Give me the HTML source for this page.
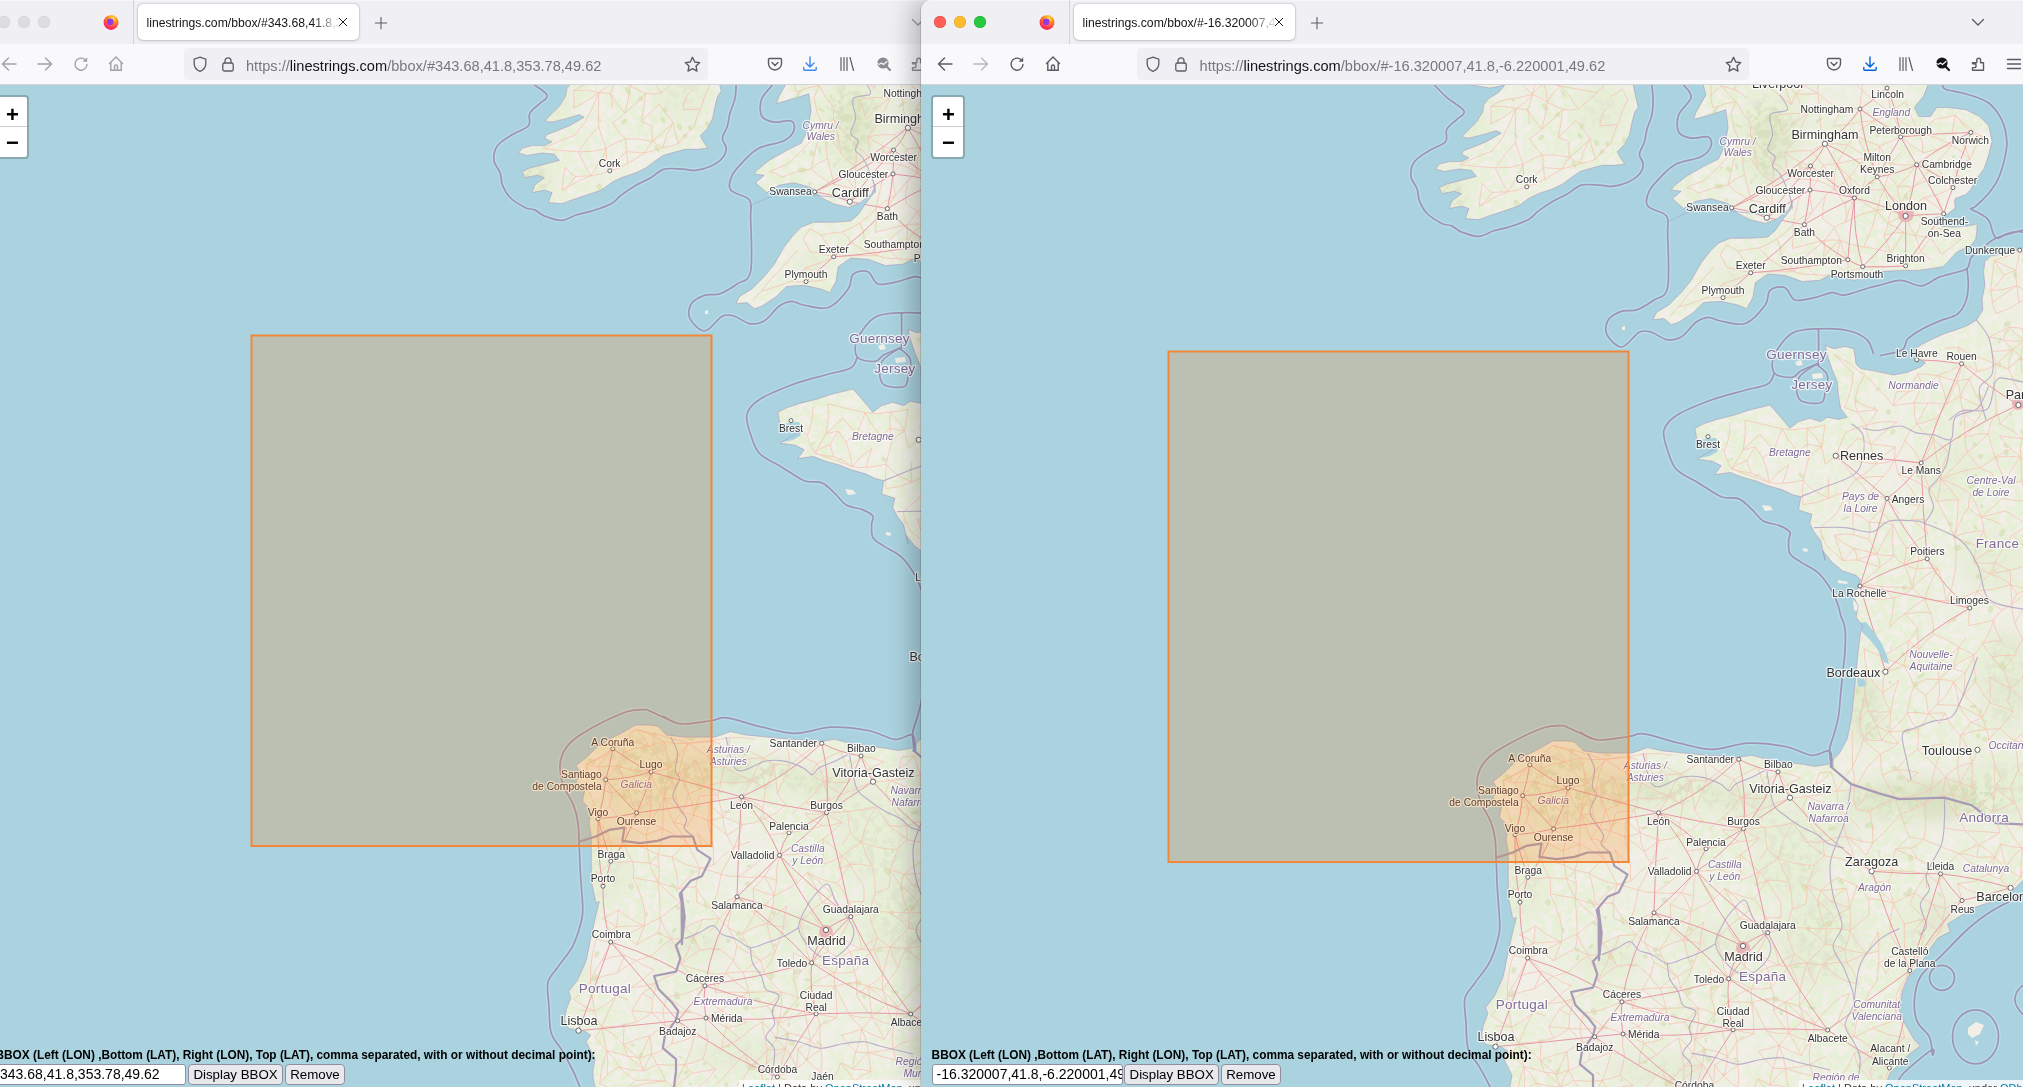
<!DOCTYPE html>
<html><head><meta charset="utf-8">
<style>
*{margin:0;padding:0;box-sizing:border-box}
html,body{width:2023px;height:1087px;overflow:hidden;background:#aad3df;font-family:"Liberation Sans",sans-serif}
.abs{position:absolute}
#defs{position:absolute;width:0;height:0}
.win{position:absolute;top:0;height:1087px;overflow:hidden}
.tabs{position:absolute;left:0;top:0;right:0;height:44px;background:#f0f0f4;border-top:1px solid #f7f7f9}
.tool{position:absolute;left:0;top:44px;right:0;height:41px;background:#f9f9fb;border-bottom:1px solid #d4d4d8}
.tab{position:absolute;top:4px;height:36px;background:#fff;border-radius:5px;box-shadow:0 0 2px rgba(0,0,0,.35),0 1px 3px rgba(0,0,0,.1)}
.tabt{position:absolute;left:8.5px;top:12.2px;font-size:12.2px;color:#15141a;white-space:nowrap;overflow:hidden;width:192px;
 -webkit-mask-image:linear-gradient(90deg,#000 86%,rgba(0,0,0,.15) 99%)}
.url{position:absolute;top:48px;height:32px;background:#f0f0f4;border-radius:4px}
.urlt{position:absolute;top:7px;font-size:14.6px;margin-top:2.5px;color:#77777f;white-space:nowrap}
.urlt b{font-weight:normal;color:#15141a}
.win{will-change:transform}
.tl{position:absolute;top:16px;width:12px;height:12px;border-radius:50%}
svg.ic{position:absolute;overflow:visible}
.zoom{position:absolute;width:34px;height:64px;border:2px solid rgba(0,0,0,.2);border-radius:4px;background:#fff;background-clip:padding-box}
.zoom div{height:30px;text-align:center;font:bold 22px/31px "Liberation Sans",sans-serif;color:#000}
.zoom div:first-child{border-bottom:1px solid #ccc;border-radius:2px 2px 0 0;line-height:35px;padding-left:1px}
.zoom div:last-child{line-height:32px;padding-left:1px}
.form{position:absolute;top:1048px;font-size:11.85px;font-weight:bold;color:#000;white-space:nowrap}
.inp{position:absolute;top:1064px;height:21px;background:#fff;border:1px solid #8f8f9d;border-radius:3px;font-size:14px;line-height:19px;padding-left:4px;white-space:nowrap;overflow:hidden;color:#000}
.btn{position:absolute;top:1064px;height:21px;background:#e9e9ed;border:1px solid #8f8f9d;border-radius:4px;font-size:13.3px;line-height:19px;text-align:center;color:#000;white-space:nowrap}
.attr{position:absolute;top:1080px;height:12px;background:rgba(255,255,255,.8);font-size:11px;line-height:17px;color:#333;padding:0 5px 0 3px;white-space:nowrap}
.attr a{color:#0078a8;text-decoration:none}
</style></head><body>
<svg id="defs" width="0" height="0"><defs><g id="map">
<rect x="800" y="0" width="1300" height="1200" fill="#aad3df"/>
<g fill="#f2efe9"><path d="M1466,84 L1490,88 L1504.8,85 L1498.6,92.4 L1488.7,98.6 L1483.8,104.8 L1482.6,112.2 L1476.4,122.1 L1469,129.5 L1461.6,136.9 L1469,138.1 L1483.8,134.4 L1496.2,130.7 L1501.1,133.2 L1486.3,141.8 L1473.9,146.8 L1464,150.5 L1461.6,154.2 L1469,157.9 L1461.6,161.6 L1449.2,161.6 L1439.3,164.1 L1435.6,169 L1444.3,171.5 L1459.1,169 L1471.4,170.3 L1476.4,176.4 L1461.6,180.2 L1446.7,183.9 L1439.3,187.6 L1441.8,193.7 L1454.1,191.3 L1461.6,193.7 L1451.7,201.2 L1449.2,208.6 L1461.6,206.1 L1469,208.6 L1465.3,218.5 L1478.9,219.7 L1488.7,216 L1503.6,211.1 L1518.4,206.1 L1528.3,198.7 L1538.2,193.7 L1553,188.8 L1562.9,183.9 L1572.8,176.4 L1580.2,171.5 L1592.6,167.8 L1602.4,165.3 L1614.8,165.3 L1624.7,164.1 L1619.7,156.7 L1617.3,151.7 L1624.7,144.3 L1629.6,134.4 L1632.1,122.1 L1634.6,112.2 L1638.3,107.2 L1635.8,97.4 L1633.3,85 L1633,60 L1466,60Z"/><path d="M1703.4,85 L1705.9,94.9 L1696,112.2 L1693.5,119.6 L1705.9,115.9 L1718.3,112.2 L1725.7,109.7 L1728.1,127 L1724.4,146.8 L1718.3,159.1 L1703.4,166.6 L1686.1,176.4 L1673.8,186.3 L1671.3,190 L1681.2,191.3 L1672.5,198.7 L1683.7,208.6 L1696,201.2 L1710.8,198.7 L1728.1,203.6 L1738,213.5 L1750.4,219.7 L1765.2,223.4 L1777.6,218.5 L1788.7,209.8 L1792.4,201.2 L1791.2,208.6 L1782.5,219.7 L1775.1,230.8 L1767.7,237 L1750.4,238.2 L1730.6,238.2 L1718.3,243.2 L1710.8,250.6 L1701,263 L1691.1,280.3 L1681.2,292.6 L1668.8,305 L1656.5,312.4 L1652.8,319.8 L1663.9,318.6 L1671.3,324.7 L1678.7,322.3 L1693.5,312.4 L1703.4,302.5 L1720.7,301.3 L1738,305 L1746.7,308.7 L1752.9,297.6 L1755.3,282.7 L1767.7,274.1 L1785,275.3 L1802.3,281.5 L1819.6,280.3 L1829.5,275.3 L1844.3,277.8 L1854.2,280.3 L1866.5,275.3 L1881.4,271.6 L1898.7,270.4 L1918.5,270.4 L1943.2,266.7 L1956.8,252.1 L1964.2,248.4 L1971.5,244.8 L1975.9,238.9 L1976.7,231.5 L1977.4,224.1 L1964.2,226.4 L1953.1,227.1 L1942.1,226.4 L1932.5,219.7 L1932.5,218.3 L1942.1,216.1 L1948,213.8 L1955.3,208 L1954.6,202.1 L1955.3,198.4 L1959.7,196.9 L1965.6,194.7 L1970.8,189.6 L1975.9,180 L1984.2,168.4 L1988.7,154.9 L1992.1,141.3 L1988.7,125.6 L1979.7,116.6 L1966.2,109.8 L1948.2,107.5 L1936.9,107.5 L1930.2,116.6 L1918.9,116.6 L1914.4,107.5 L1923.4,96.3 L1927.9,85 L1928,60 L1703,60Z"/><path d="M2040,247 L2023,247.9 L2004.2,253.5 L1990.4,256.2 L1984.9,261.7 L1983.5,271.4 L1984.9,285.2 L1982.1,299 L1982.8,310.1 L1979.4,315.6 L1976.6,319.7 L1968.3,325.2 L1957.3,329.4 L1944.9,333.5 L1932.4,339 L1921.4,344.6 L1914.5,350.1 L1917.3,358.4 L1925.5,362.5 L1921.4,366.6 L1907.6,372.2 L1893.8,374.9 L1889.2,374.1 L1873.7,370.8 L1860.5,368.6 L1856.1,364.2 L1853.9,348.7 L1845,346.5 L1834,348.7 L1825.1,345.4 L1827.3,355.3 L1831.8,368.6 L1837.3,381.8 L1838.4,395.1 L1840.6,408.3 L1847.2,417.2 L1838.4,419.4 L1827.3,417.2 L1820.7,421.6 L1809.7,418.3 L1798.6,421.6 L1789.8,428.2 L1778.8,415 L1769.9,405 L1756.7,408.3 L1747.8,410.5 L1734.6,415 L1716.9,419.4 L1703.7,423.8 L1694.8,428.2 L1697,439.3 L1705.9,443.7 L1716.9,448.1 L1708.1,452.5 L1697,459.1 L1712.5,461.3 L1721.3,465.8 L1714.7,474.6 L1730.2,472.4 L1741.2,476.8 L1756.7,481.2 L1767.7,485.6 L1783.2,490.1 L1792,494.5 L1800.8,496.7 L1798.6,509.9 L1811.9,514.3 L1809.7,523.2 L1814.1,532 L1820.7,540.8 L1825.1,560.1 L1822.9,551 L1831.8,562.1 L1842.8,570.9 L1856.1,575.3 L1860.5,579.8 L1858.3,586.4 L1853.9,597.4 L1858.3,606.3 L1856.1,617.3 L1862.7,626.1 L1860.5,632.8 L1858.3,650.4 L1856.1,672.5 L1853.9,694.6 L1851.6,716.7 L1847.2,738.8 L1839.6,753.1 L1828.6,764.2 L1815.3,766.4 L1802.1,764.2 L1784.4,762 L1764.5,758.6 L1751.3,755.3 L1738,757.5 L1724.8,756.4 L1707.1,755.3 L1685,753.1 L1662.9,750.9 L1647.5,747.6 L1632,753.1 L1618.8,753.1 L1601.1,753.1 L1583.4,750.9 L1574.6,742.1 L1565.8,741 L1552.5,741 L1539.3,748.7 L1526,755.3 L1512.8,764.2 L1503.9,773 L1492.9,781.8 L1499.5,790.7 L1492.9,797.3 L1501.7,806.1 L1499.5,817.2 L1508.3,826 L1506.1,839.3 L1508.3,852.5 L1508.3,874.6 L1508.3,896.7 L1512.8,918.8 L1516.3,917.5 L1512,935 L1507.6,954.7 L1503.2,976.6 L1494.4,996.3 L1485.7,1007.3 L1487.9,1013.9 L1483.5,1024.8 L1481.3,1035.8 L1485.7,1044.5 L1501,1046.7 L1507.6,1051.1 L1503.2,1057.7 L1507.6,1066.4 L1512,1075.2 L1509.8,1087 L1510.2,1094.6 L1512.1,1103 L1512,1130 L1890,1130 L1884.3,1087.1 L1890.3,1073 L1899.3,1063.9 L1908.3,1054.9 L1920.4,1045.9 L1914.4,1039.9 L1905.3,1024.8 L1899.3,1009.8 L1902.3,991.7 L1908.3,976.7 L1920.4,964.6 L1929.4,949.6 L1938.4,937.6 L1950.5,931.5 L1947.5,924 L1959.5,916.5 L1974.5,907.5 L1992.6,901.4 L2010.7,892.4 L2023,880.4 L2040,870Z"/></g>
<path fill="#f2efe9" d="M1968,1028 L1976,1022 L1984,1025 L1980,1034 L1972,1038 L1968,1034Z M1975,1040 L1979,1042 L1976,1046Z M1795,362 L1801,360 L1803,365 L1797,366Z M1812,374 L1822,373 L1823,378 L1813,379Z M1622,327 L1625,326 L1625,330 L1622,330Z M1762,505 L1770,506 L1773,510 L1765,511Z M1803,548 L1808,549 L1807,552 L1803,551Z M1838,580 L1848,582 L1847,584 L1838,583Z M1853,600 L1858,604 L1859,612 L1854,610Z"/>
<clipPath id="landclip"><path d="M1466,84 L1490,88 L1504.8,85 L1498.6,92.4 L1488.7,98.6 L1483.8,104.8 L1482.6,112.2 L1476.4,122.1 L1469,129.5 L1461.6,136.9 L1469,138.1 L1483.8,134.4 L1496.2,130.7 L1501.1,133.2 L1486.3,141.8 L1473.9,146.8 L1464,150.5 L1461.6,154.2 L1469,157.9 L1461.6,161.6 L1449.2,161.6 L1439.3,164.1 L1435.6,169 L1444.3,171.5 L1459.1,169 L1471.4,170.3 L1476.4,176.4 L1461.6,180.2 L1446.7,183.9 L1439.3,187.6 L1441.8,193.7 L1454.1,191.3 L1461.6,193.7 L1451.7,201.2 L1449.2,208.6 L1461.6,206.1 L1469,208.6 L1465.3,218.5 L1478.9,219.7 L1488.7,216 L1503.6,211.1 L1518.4,206.1 L1528.3,198.7 L1538.2,193.7 L1553,188.8 L1562.9,183.9 L1572.8,176.4 L1580.2,171.5 L1592.6,167.8 L1602.4,165.3 L1614.8,165.3 L1624.7,164.1 L1619.7,156.7 L1617.3,151.7 L1624.7,144.3 L1629.6,134.4 L1632.1,122.1 L1634.6,112.2 L1638.3,107.2 L1635.8,97.4 L1633.3,85 L1633,60 L1466,60Z"/><path d="M1703.4,85 L1705.9,94.9 L1696,112.2 L1693.5,119.6 L1705.9,115.9 L1718.3,112.2 L1725.7,109.7 L1728.1,127 L1724.4,146.8 L1718.3,159.1 L1703.4,166.6 L1686.1,176.4 L1673.8,186.3 L1671.3,190 L1681.2,191.3 L1672.5,198.7 L1683.7,208.6 L1696,201.2 L1710.8,198.7 L1728.1,203.6 L1738,213.5 L1750.4,219.7 L1765.2,223.4 L1777.6,218.5 L1788.7,209.8 L1792.4,201.2 L1791.2,208.6 L1782.5,219.7 L1775.1,230.8 L1767.7,237 L1750.4,238.2 L1730.6,238.2 L1718.3,243.2 L1710.8,250.6 L1701,263 L1691.1,280.3 L1681.2,292.6 L1668.8,305 L1656.5,312.4 L1652.8,319.8 L1663.9,318.6 L1671.3,324.7 L1678.7,322.3 L1693.5,312.4 L1703.4,302.5 L1720.7,301.3 L1738,305 L1746.7,308.7 L1752.9,297.6 L1755.3,282.7 L1767.7,274.1 L1785,275.3 L1802.3,281.5 L1819.6,280.3 L1829.5,275.3 L1844.3,277.8 L1854.2,280.3 L1866.5,275.3 L1881.4,271.6 L1898.7,270.4 L1918.5,270.4 L1943.2,266.7 L1956.8,252.1 L1964.2,248.4 L1971.5,244.8 L1975.9,238.9 L1976.7,231.5 L1977.4,224.1 L1964.2,226.4 L1953.1,227.1 L1942.1,226.4 L1932.5,219.7 L1932.5,218.3 L1942.1,216.1 L1948,213.8 L1955.3,208 L1954.6,202.1 L1955.3,198.4 L1959.7,196.9 L1965.6,194.7 L1970.8,189.6 L1975.9,180 L1984.2,168.4 L1988.7,154.9 L1992.1,141.3 L1988.7,125.6 L1979.7,116.6 L1966.2,109.8 L1948.2,107.5 L1936.9,107.5 L1930.2,116.6 L1918.9,116.6 L1914.4,107.5 L1923.4,96.3 L1927.9,85 L1928,60 L1703,60Z"/><path d="M2040,247 L2023,247.9 L2004.2,253.5 L1990.4,256.2 L1984.9,261.7 L1983.5,271.4 L1984.9,285.2 L1982.1,299 L1982.8,310.1 L1979.4,315.6 L1976.6,319.7 L1968.3,325.2 L1957.3,329.4 L1944.9,333.5 L1932.4,339 L1921.4,344.6 L1914.5,350.1 L1917.3,358.4 L1925.5,362.5 L1921.4,366.6 L1907.6,372.2 L1893.8,374.9 L1889.2,374.1 L1873.7,370.8 L1860.5,368.6 L1856.1,364.2 L1853.9,348.7 L1845,346.5 L1834,348.7 L1825.1,345.4 L1827.3,355.3 L1831.8,368.6 L1837.3,381.8 L1838.4,395.1 L1840.6,408.3 L1847.2,417.2 L1838.4,419.4 L1827.3,417.2 L1820.7,421.6 L1809.7,418.3 L1798.6,421.6 L1789.8,428.2 L1778.8,415 L1769.9,405 L1756.7,408.3 L1747.8,410.5 L1734.6,415 L1716.9,419.4 L1703.7,423.8 L1694.8,428.2 L1697,439.3 L1705.9,443.7 L1716.9,448.1 L1708.1,452.5 L1697,459.1 L1712.5,461.3 L1721.3,465.8 L1714.7,474.6 L1730.2,472.4 L1741.2,476.8 L1756.7,481.2 L1767.7,485.6 L1783.2,490.1 L1792,494.5 L1800.8,496.7 L1798.6,509.9 L1811.9,514.3 L1809.7,523.2 L1814.1,532 L1820.7,540.8 L1825.1,560.1 L1822.9,551 L1831.8,562.1 L1842.8,570.9 L1856.1,575.3 L1860.5,579.8 L1858.3,586.4 L1853.9,597.4 L1858.3,606.3 L1856.1,617.3 L1862.7,626.1 L1860.5,632.8 L1858.3,650.4 L1856.1,672.5 L1853.9,694.6 L1851.6,716.7 L1847.2,738.8 L1839.6,753.1 L1828.6,764.2 L1815.3,766.4 L1802.1,764.2 L1784.4,762 L1764.5,758.6 L1751.3,755.3 L1738,757.5 L1724.8,756.4 L1707.1,755.3 L1685,753.1 L1662.9,750.9 L1647.5,747.6 L1632,753.1 L1618.8,753.1 L1601.1,753.1 L1583.4,750.9 L1574.6,742.1 L1565.8,741 L1552.5,741 L1539.3,748.7 L1526,755.3 L1512.8,764.2 L1503.9,773 L1492.9,781.8 L1499.5,790.7 L1492.9,797.3 L1501.7,806.1 L1499.5,817.2 L1508.3,826 L1506.1,839.3 L1508.3,852.5 L1508.3,874.6 L1508.3,896.7 L1512.8,918.8 L1516.3,917.5 L1512,935 L1507.6,954.7 L1503.2,976.6 L1494.4,996.3 L1485.7,1007.3 L1487.9,1013.9 L1483.5,1024.8 L1481.3,1035.8 L1485.7,1044.5 L1501,1046.7 L1507.6,1051.1 L1503.2,1057.7 L1507.6,1066.4 L1512,1075.2 L1509.8,1087 L1510.2,1094.6 L1512.1,1103 L1512,1130 L1890,1130 L1884.3,1087.1 L1890.3,1073 L1899.3,1063.9 L1908.3,1054.9 L1920.4,1045.9 L1914.4,1039.9 L1905.3,1024.8 L1899.3,1009.8 L1902.3,991.7 L1908.3,976.7 L1920.4,964.6 L1929.4,949.6 L1938.4,937.6 L1950.5,931.5 L1947.5,924 L1959.5,916.5 L1974.5,907.5 L1992.6,901.4 L2010.7,892.4 L2023,880.4 L2040,870Z"/></clipPath>
<filter id="speck" x="1400" y="60" width="700" height="1100" filterUnits="userSpaceOnUse" primitiveUnits="userSpaceOnUse">
<feTurbulence type="fractalNoise" baseFrequency="0.13" numOctaves="3" seed="4" result="n1"/>
<feTurbulence type="fractalNoise" baseFrequency="0.012" numOctaves="2" seed="9" result="n2"/>
<feColorMatrix in="n1" type="matrix" values="0 0 0 0 0.80  0 0 0 0 0.87  0 0 0 0 0.68  7 0 0 0 -2.8" result="a1"/>
<feColorMatrix in="n2" type="matrix" values="0 0 0 0 1  0 0 0 0 1  0 0 0 0 1  0 0 0 3 -0.6" result="a2"/>
<feComposite in="a1" in2="a2" operator="in"/>
</filter>
<filter id="blur6" x="-50%" y="-50%" width="200%" height="200%"><feGaussianBlur stdDeviation="8"/></filter>
<g clip-path="url(#landclip)"><g fill="#c4d6a0" filter="url(#blur6)"><ellipse cx="1765" cy="140" rx="22" ry="45" opacity="0.55"/><ellipse cx="1440" cy="195" rx="28" ry="18" opacity="0.6"/><ellipse cx="1455" cy="120" rx="30" ry="25" opacity="0.35"/><ellipse cx="1600" cy="110" rx="25" ry="25" opacity="0.3"/><ellipse cx="1730" cy="278" rx="10" ry="8" opacity="0.6"/><ellipse cx="1650" cy="790" rx="70" ry="16" opacity="0.5"/><ellipse cx="1740" cy="800" rx="40" ry="15" opacity="0.4"/><ellipse cx="1560" cy="790" rx="40" ry="40" opacity="0.45"/><ellipse cx="1520" cy="880" rx="25" ry="40" opacity="0.3"/><ellipse cx="1920" cy="800" rx="80" ry="22" opacity="0.5"/><ellipse cx="2000" cy="790" rx="40" ry="30" opacity="0.35"/><ellipse cx="1865" cy="710" rx="18" ry="35" opacity="0.5"/><ellipse cx="1800" cy="830" rx="60" ry="20" opacity="0.3"/><ellipse cx="1790" cy="870" rx="35" ry="25" opacity="0.35"/><ellipse cx="1820" cy="940" rx="40" ry="45" opacity="0.35"/><ellipse cx="1720" cy="940" rx="45" ry="12" opacity="0.35"/><ellipse cx="1610" cy="960" rx="35" ry="15" opacity="0.3"/><ellipse cx="1930" cy="930" rx="30" ry="35" opacity="0.3"/><ellipse cx="2005" cy="680" rx="25" ry="50" opacity="0.35"/><ellipse cx="1790" cy="130" rx="15" ry="30" opacity="0.3"/><ellipse cx="1480" cy="990" rx="25" ry="20" opacity="0.35"/><ellipse cx="1900" cy="1060" rx="40" ry="25" opacity="0.35"/><ellipse cx="1660" cy="1070" rx="50" ry="15" opacity="0.3"/><ellipse cx="1950" cy="470" rx="30" ry="30" opacity="0.25"/><ellipse cx="1990" cy="560" rx="30" ry="30" opacity="0.25"/></g><rect x="1400" y="60" width="700" height="1100" fill="#fff" filter="url(#speck)"/><g fill="#cfdcaa" opacity="0.55"><ellipse cx="1879.5" cy="851.5" rx="1.5" ry="1.2" transform="rotate(53 1879.5 851.5)"/><ellipse cx="1759.7" cy="131.7" rx="1.5" ry="2.0" transform="rotate(36 1759.7 131.7)"/><ellipse cx="1607.6" cy="755.1" rx="4.5" ry="1.3" transform="rotate(6 1607.6 755.1)"/><ellipse cx="1624.5" cy="140.7" rx="3.8" ry="2.1" transform="rotate(75 1624.5 140.7)"/><ellipse cx="1605.1" cy="917.6" rx="1.8" ry="2.1" transform="rotate(140 1605.1 917.6)"/><ellipse cx="1886.2" cy="247.7" rx="2.7" ry="0.8" transform="rotate(78 1886.2 247.7)"/><ellipse cx="1973.4" cy="706.3" rx="3.2" ry="1.9" transform="rotate(0 1973.4 706.3)"/><ellipse cx="1681.4" cy="800.3" rx="4.4" ry="0.8" transform="rotate(92 1681.4 800.3)"/><ellipse cx="1894.4" cy="768.1" rx="3.0" ry="2.7" transform="rotate(153 1894.4 768.1)"/><ellipse cx="1667.5" cy="1083.4" rx="4.1" ry="3.0" transform="rotate(19 1667.5 1083.4)"/><ellipse cx="2005.6" cy="445.8" rx="3.1" ry="1.7" transform="rotate(38 2005.6 445.8)"/><ellipse cx="2023.9" cy="260.3" rx="2.4" ry="2.6" transform="rotate(145 2023.9 260.3)"/><ellipse cx="1910.5" cy="858.1" rx="3.3" ry="2.8" transform="rotate(65 1910.5 858.1)"/><ellipse cx="1548.1" cy="844.3" rx="2.4" ry="0.8" transform="rotate(58 1548.1 844.3)"/><ellipse cx="1893.0" cy="431.7" rx="3.4" ry="2.3" transform="rotate(110 1893.0 431.7)"/><ellipse cx="1980.7" cy="456.2" rx="2.6" ry="2.7" transform="rotate(59 1980.7 456.2)"/><ellipse cx="2031.9" cy="420.4" rx="3.4" ry="2.2" transform="rotate(42 2031.9 420.4)"/><ellipse cx="1869.1" cy="825.1" rx="4.3" ry="2.8" transform="rotate(158 1869.1 825.1)"/><ellipse cx="1605.9" cy="1027.6" rx="1.6" ry="2.7" transform="rotate(98 1605.9 1027.6)"/><ellipse cx="2010.5" cy="414.4" rx="1.5" ry="2.7" transform="rotate(145 2010.5 414.4)"/><ellipse cx="1999.5" cy="364.6" rx="2.7" ry="1.9" transform="rotate(88 1999.5 364.6)"/><ellipse cx="1873.1" cy="827.4" rx="2.5" ry="1.6" transform="rotate(94 1873.1 827.4)"/><ellipse cx="1703.9" cy="1052.0" rx="4.2" ry="1.7" transform="rotate(83 1703.9 1052.0)"/><ellipse cx="1874.5" cy="407.9" rx="1.6" ry="1.5" transform="rotate(116 1874.5 407.9)"/><ellipse cx="1756.3" cy="118.2" rx="2.2" ry="2.1" transform="rotate(31 1756.3 118.2)"/><ellipse cx="2006.2" cy="452.5" rx="3.2" ry="2.5" transform="rotate(64 2006.2 452.5)"/><ellipse cx="1571.6" cy="750.6" rx="2.7" ry="2.2" transform="rotate(100 1571.6 750.6)"/><ellipse cx="2022.8" cy="432.6" rx="2.4" ry="2.8" transform="rotate(154 2022.8 432.6)"/><ellipse cx="1898.9" cy="789.5" rx="3.8" ry="2.7" transform="rotate(147 1898.9 789.5)"/><ellipse cx="1622.8" cy="921.9" rx="4.3" ry="1.1" transform="rotate(71 1622.8 921.9)"/><ellipse cx="1594.8" cy="923.5" rx="2.9" ry="2.0" transform="rotate(53 1594.8 923.5)"/><ellipse cx="1775.8" cy="119.0" rx="4.3" ry="1.8" transform="rotate(83 1775.8 119.0)"/><ellipse cx="1877.7" cy="389.1" rx="3.4" ry="1.1" transform="rotate(148 1877.7 389.1)"/><ellipse cx="1724.1" cy="995.9" rx="3.4" ry="1.4" transform="rotate(16 1724.1 995.9)"/><ellipse cx="1632.6" cy="965.3" rx="4.4" ry="0.8" transform="rotate(172 1632.6 965.3)"/><ellipse cx="1664.4" cy="900.0" rx="2.9" ry="2.5" transform="rotate(130 1664.4 900.0)"/><ellipse cx="1666.0" cy="964.5" rx="2.3" ry="1.3" transform="rotate(6 1666.0 964.5)"/><ellipse cx="1667.2" cy="1017.0" rx="2.8" ry="2.8" transform="rotate(72 1667.2 1017.0)"/><ellipse cx="1719.3" cy="186.0" rx="4.1" ry="2.4" transform="rotate(0 1719.3 186.0)"/><ellipse cx="1512.2" cy="1066.0" rx="1.1" ry="0.9" transform="rotate(151 1512.2 1066.0)"/><ellipse cx="1974.9" cy="679.7" rx="3.3" ry="1.5" transform="rotate(128 1974.9 679.7)"/><ellipse cx="1736.7" cy="166.2" rx="3.8" ry="1.6" transform="rotate(78 1736.7 166.2)"/><ellipse cx="1939.1" cy="783.1" rx="1.2" ry="2.3" transform="rotate(40 1939.1 783.1)"/><ellipse cx="1975.7" cy="527.5" rx="3.2" ry="1.5" transform="rotate(44 1975.7 527.5)"/><ellipse cx="1984.8" cy="739.2" rx="2.6" ry="2.6" transform="rotate(133 1984.8 739.2)"/><ellipse cx="1967.0" cy="543.1" rx="2.1" ry="2.9" transform="rotate(108 1967.0 543.1)"/><ellipse cx="1508.9" cy="777.6" rx="4.5" ry="2.4" transform="rotate(38 1508.9 777.6)"/><ellipse cx="1674.7" cy="1015.9" rx="3.7" ry="2.1" transform="rotate(35 1674.7 1015.9)"/><ellipse cx="1860.0" cy="839.4" rx="4.1" ry="0.9" transform="rotate(52 1860.0 839.4)"/><ellipse cx="1546.7" cy="755.9" rx="3.0" ry="1.7" transform="rotate(102 1546.7 755.9)"/><ellipse cx="1516.0" cy="135.2" rx="3.6" ry="1.1" transform="rotate(51 1516.0 135.2)"/><ellipse cx="1896.8" cy="718.4" rx="1.1" ry="1.5" transform="rotate(77 1896.8 718.4)"/><ellipse cx="1990.6" cy="609.3" rx="3.8" ry="2.6" transform="rotate(109 1990.6 609.3)"/><ellipse cx="1585.6" cy="783.6" rx="1.8" ry="1.1" transform="rotate(146 1585.6 783.6)"/><ellipse cx="1920.0" cy="935.1" rx="3.4" ry="0.9" transform="rotate(56 1920.0 935.1)"/><ellipse cx="1607.2" cy="1100.1" rx="1.3" ry="1.9" transform="rotate(90 1607.2 1100.1)"/><ellipse cx="1891.0" cy="648.3" rx="2.3" ry="0.9" transform="rotate(82 1891.0 648.3)"/><ellipse cx="1953.6" cy="156.6" rx="1.5" ry="1.7" transform="rotate(78 1953.6 156.6)"/><ellipse cx="1915.7" cy="684.3" rx="2.8" ry="2.8" transform="rotate(87 1915.7 684.3)"/><ellipse cx="1601.9" cy="151.8" rx="2.6" ry="2.7" transform="rotate(19 1601.9 151.8)"/><ellipse cx="2027.0" cy="708.7" rx="1.7" ry="1.5" transform="rotate(6 2027.0 708.7)"/><ellipse cx="1596.4" cy="142.9" rx="3.5" ry="2.6" transform="rotate(67 1596.4 142.9)"/><ellipse cx="1756.5" cy="475.4" rx="3.5" ry="0.8" transform="rotate(158 1756.5 475.4)"/><ellipse cx="2006.9" cy="323.9" rx="3.6" ry="2.6" transform="rotate(143 2006.9 323.9)"/><ellipse cx="1654.0" cy="778.9" rx="1.9" ry="2.9" transform="rotate(153 1654.0 778.9)"/><ellipse cx="1877.0" cy="1047.1" rx="2.4" ry="2.8" transform="rotate(167 1877.0 1047.1)"/><ellipse cx="1662.0" cy="767.4" rx="4.1" ry="2.9" transform="rotate(55 1662.0 767.4)"/><ellipse cx="1939.8" cy="894.8" rx="3.3" ry="1.4" transform="rotate(50 1939.8 894.8)"/><ellipse cx="1726.4" cy="199.8" rx="1.8" ry="2.2" transform="rotate(113 1726.4 199.8)"/><ellipse cx="1831.8" cy="828.7" rx="3.9" ry="1.9" transform="rotate(169 1831.8 828.7)"/><ellipse cx="2015.3" cy="275.1" rx="3.1" ry="2.0" transform="rotate(76 2015.3 275.1)"/><ellipse cx="1525.6" cy="944.5" rx="1.1" ry="1.8" transform="rotate(97 1525.6 944.5)"/><ellipse cx="1703.0" cy="1028.2" rx="4.1" ry="1.4" transform="rotate(134 1703.0 1028.2)"/><ellipse cx="1905.7" cy="822.8" rx="1.8" ry="2.2" transform="rotate(153 1905.7 822.8)"/><ellipse cx="1871.8" cy="809.4" rx="2.6" ry="1.4" transform="rotate(96 1871.8 809.4)"/><ellipse cx="1714.2" cy="987.5" rx="4.4" ry="2.3" transform="rotate(161 1714.2 987.5)"/><ellipse cx="1866.1" cy="682.9" rx="1.4" ry="3.0" transform="rotate(141 1866.1 682.9)"/><ellipse cx="1620.7" cy="953.0" rx="1.3" ry="1.4" transform="rotate(151 1620.7 953.0)"/><ellipse cx="2029.8" cy="503.5" rx="2.1" ry="1.0" transform="rotate(157 2029.8 503.5)"/><ellipse cx="1666.3" cy="882.1" rx="2.7" ry="1.3" transform="rotate(167 1666.3 882.1)"/><ellipse cx="1721.1" cy="167.7" rx="1.2" ry="1.4" transform="rotate(74 1721.1 167.7)"/><ellipse cx="1591.2" cy="946.2" rx="1.6" ry="2.9" transform="rotate(37 1591.2 946.2)"/><ellipse cx="1856.7" cy="400.2" rx="3.5" ry="0.9" transform="rotate(53 1856.7 400.2)"/><ellipse cx="1804.3" cy="887.0" rx="4.4" ry="2.9" transform="rotate(62 1804.3 887.0)"/><ellipse cx="2007.6" cy="331.0" rx="3.3" ry="0.9" transform="rotate(158 2007.6 331.0)"/><ellipse cx="1738.5" cy="126.0" rx="3.9" ry="1.2" transform="rotate(28 1738.5 126.0)"/><ellipse cx="1607.2" cy="143.8" rx="2.7" ry="2.1" transform="rotate(59 1607.2 143.8)"/><ellipse cx="1645.3" cy="956.6" rx="2.5" ry="2.0" transform="rotate(10 1645.3 956.6)"/><ellipse cx="1906.2" cy="196.7" rx="3.3" ry="2.0" transform="rotate(73 1906.2 196.7)"/><ellipse cx="1887.4" cy="726.8" rx="2.3" ry="1.1" transform="rotate(123 1887.4 726.8)"/><ellipse cx="2020.5" cy="358.7" rx="2.3" ry="1.5" transform="rotate(34 2020.5 358.7)"/><ellipse cx="1845.6" cy="517.9" rx="4.3" ry="1.1" transform="rotate(156 1845.6 517.9)"/><ellipse cx="1859.8" cy="1065.8" rx="2.5" ry="2.1" transform="rotate(123 1859.8 1065.8)"/><ellipse cx="1767.0" cy="999.8" rx="2.7" ry="1.6" transform="rotate(11 1767.0 999.8)"/><ellipse cx="1715.6" cy="109.9" rx="4.4" ry="1.5" transform="rotate(126 1715.6 109.9)"/><ellipse cx="1904.3" cy="587.6" rx="2.6" ry="2.8" transform="rotate(30 1904.3 587.6)"/><ellipse cx="1888.4" cy="412.1" rx="2.6" ry="3.0" transform="rotate(5 1888.4 412.1)"/><ellipse cx="1903.2" cy="654.0" rx="1.8" ry="2.0" transform="rotate(135 1903.2 654.0)"/><ellipse cx="1723.4" cy="1074.4" rx="2.2" ry="1.2" transform="rotate(168 1723.4 1074.4)"/><ellipse cx="1888.0" cy="668.3" rx="2.1" ry="1.7" transform="rotate(17 1888.0 668.3)"/><ellipse cx="1736.3" cy="1059.8" rx="3.9" ry="1.5" transform="rotate(42 1736.3 1059.8)"/><ellipse cx="1705.9" cy="1040.5" rx="1.3" ry="2.7" transform="rotate(2 1705.9 1040.5)"/><ellipse cx="1727.0" cy="1092.7" rx="1.0" ry="1.5" transform="rotate(135 1727.0 1092.7)"/><ellipse cx="1609.4" cy="998.4" rx="2.6" ry="1.1" transform="rotate(11 1609.4 998.4)"/><ellipse cx="1586.0" cy="792.9" rx="2.0" ry="2.4" transform="rotate(127 1586.0 792.9)"/><ellipse cx="1953.6" cy="787.8" rx="3.7" ry="2.9" transform="rotate(158 1953.6 787.8)"/><ellipse cx="1708.5" cy="1059.0" rx="3.4" ry="3.0" transform="rotate(41 1708.5 1059.0)"/><ellipse cx="1909.6" cy="891.2" rx="4.0" ry="2.5" transform="rotate(107 1909.6 891.2)"/><ellipse cx="1614.1" cy="823.3" rx="3.6" ry="1.7" transform="rotate(137 1614.1 823.3)"/><ellipse cx="1959.3" cy="437.5" rx="2.5" ry="1.3" transform="rotate(149 1959.3 437.5)"/><ellipse cx="1907.5" cy="731.5" rx="1.9" ry="2.7" transform="rotate(120 1907.5 731.5)"/><ellipse cx="1828.8" cy="923.7" rx="3.8" ry="2.7" transform="rotate(25 1828.8 923.7)"/><ellipse cx="1741.9" cy="1037.1" rx="2.7" ry="0.9" transform="rotate(157 1741.9 1037.1)"/><ellipse cx="1950.9" cy="524.1" rx="1.5" ry="2.6" transform="rotate(146 1950.9 524.1)"/><ellipse cx="1822.8" cy="925.8" rx="2.8" ry="1.1" transform="rotate(139 1822.8 925.8)"/><ellipse cx="1973.7" cy="476.0" rx="3.7" ry="1.5" transform="rotate(155 1973.7 476.0)"/><ellipse cx="1577.8" cy="957.5" rx="3.1" ry="1.5" transform="rotate(112 1577.8 957.5)"/><ellipse cx="1906.9" cy="894.2" rx="3.7" ry="2.1" transform="rotate(6 1906.9 894.2)"/><ellipse cx="1772.4" cy="127.1" rx="1.7" ry="1.8" transform="rotate(108 1772.4 127.1)"/><ellipse cx="1541.2" cy="137.7" rx="3.4" ry="2.0" transform="rotate(147 1541.2 137.7)"/><ellipse cx="1580.0" cy="135.9" rx="3.3" ry="1.9" transform="rotate(58 1580.0 135.9)"/><ellipse cx="1632.6" cy="1092.6" rx="1.1" ry="1.3" transform="rotate(170 1632.6 1092.6)"/><ellipse cx="1808.6" cy="928.2" rx="1.7" ry="2.8" transform="rotate(12 1808.6 928.2)"/><ellipse cx="1593.9" cy="1011.5" rx="3.9" ry="2.9" transform="rotate(73 1593.9 1011.5)"/><ellipse cx="1915.6" cy="711.8" rx="2.8" ry="1.1" transform="rotate(56 1915.6 711.8)"/><ellipse cx="1557.5" cy="114.7" rx="2.3" ry="2.5" transform="rotate(74 1557.5 114.7)"/><ellipse cx="1513.0" cy="889.6" rx="3.0" ry="1.9" transform="rotate(132 1513.0 889.6)"/><ellipse cx="1728.9" cy="169.3" rx="2.7" ry="2.4" transform="rotate(65 1728.9 169.3)"/><ellipse cx="1980.8" cy="711.2" rx="1.3" ry="2.6" transform="rotate(176 1980.8 711.2)"/><ellipse cx="1872.3" cy="735.8" rx="4.4" ry="1.7" transform="rotate(46 1872.3 735.8)"/><ellipse cx="1545.2" cy="106.8" rx="4.3" ry="2.4" transform="rotate(62 1545.2 106.8)"/><ellipse cx="1593.7" cy="905.9" rx="2.1" ry="1.4" transform="rotate(47 1593.7 905.9)"/><ellipse cx="1833.4" cy="901.4" rx="1.1" ry="2.3" transform="rotate(43 1833.4 901.4)"/><ellipse cx="1516.7" cy="203.2" rx="4.0" ry="2.8" transform="rotate(63 1516.7 203.2)"/><ellipse cx="1889.9" cy="682.3" rx="1.4" ry="1.5" transform="rotate(4 1889.9 682.3)"/><ellipse cx="1863.6" cy="1005.8" rx="1.2" ry="1.3" transform="rotate(31 1863.6 1005.8)"/><ellipse cx="1574.0" cy="164.4" rx="3.7" ry="1.9" transform="rotate(66 1574.0 164.4)"/><ellipse cx="1669.7" cy="1007.9" rx="1.6" ry="1.3" transform="rotate(2 1669.7 1007.9)"/><ellipse cx="1743.3" cy="158.2" rx="3.9" ry="1.0" transform="rotate(66 1743.3 158.2)"/><ellipse cx="1541.0" cy="1040.8" rx="3.3" ry="1.3" transform="rotate(168 1541.0 1040.8)"/><ellipse cx="1864.3" cy="1002.6" rx="1.3" ry="1.0" transform="rotate(151 1864.3 1002.6)"/><ellipse cx="1980.1" cy="397.3" rx="3.7" ry="2.3" transform="rotate(42 1980.1 397.3)"/><ellipse cx="1957.7" cy="547.9" rx="3.3" ry="2.8" transform="rotate(147 1957.7 547.9)"/><ellipse cx="1908.1" cy="781.6" rx="1.5" ry="1.2" transform="rotate(63 1908.1 781.6)"/><ellipse cx="1792.1" cy="123.8" rx="2.9" ry="1.7" transform="rotate(156 1792.1 123.8)"/><ellipse cx="1818.5" cy="904.5" rx="2.3" ry="2.3" transform="rotate(133 1818.5 904.5)"/><ellipse cx="1688.6" cy="992.4" rx="3.9" ry="2.8" transform="rotate(109 1688.6 992.4)"/><ellipse cx="1920.5" cy="920.4" rx="3.8" ry="0.8" transform="rotate(41 1920.5 920.4)"/><ellipse cx="1866.4" cy="889.7" rx="2.6" ry="1.7" transform="rotate(143 1866.4 889.7)"/><ellipse cx="1513.8" cy="970.3" rx="3.4" ry="2.3" transform="rotate(114 1513.8 970.3)"/><ellipse cx="1621.5" cy="1079.9" rx="1.6" ry="1.6" transform="rotate(176 1621.5 1079.9)"/><ellipse cx="1548.1" cy="902.3" rx="3.1" ry="2.9" transform="rotate(109 1548.1 902.3)"/><ellipse cx="1713.9" cy="1021.3" rx="2.5" ry="1.6" transform="rotate(113 1713.9 1021.3)"/><ellipse cx="1747.9" cy="112.4" rx="1.9" ry="1.4" transform="rotate(64 1747.9 112.4)"/><ellipse cx="1549.6" cy="1060.8" rx="2.0" ry="2.4" transform="rotate(118 1549.6 1060.8)"/><ellipse cx="1960.7" cy="423.3" rx="2.9" ry="1.6" transform="rotate(94 1960.7 423.3)"/><ellipse cx="1541.2" cy="812.3" rx="2.0" ry="2.4" transform="rotate(58 1541.2 812.3)"/><ellipse cx="1914.7" cy="847.5" rx="1.7" ry="1.2" transform="rotate(157 1914.7 847.5)"/><ellipse cx="1877.9" cy="135.6" rx="1.6" ry="2.2" transform="rotate(77 1877.9 135.6)"/><ellipse cx="1689.9" cy="1027.1" rx="2.1" ry="2.5" transform="rotate(21 1689.9 1027.1)"/><ellipse cx="1823.7" cy="243.0" rx="1.2" ry="2.0" transform="rotate(7 1823.7 243.0)"/><ellipse cx="1978.7" cy="576.6" rx="2.9" ry="2.9" transform="rotate(14 1978.7 576.6)"/><ellipse cx="1563.5" cy="930.2" rx="2.7" ry="1.6" transform="rotate(82 1563.5 930.2)"/><ellipse cx="1766.3" cy="777.4" rx="1.6" ry="1.8" transform="rotate(151 1766.3 777.4)"/><ellipse cx="1870.7" cy="182.7" rx="3.8" ry="1.3" transform="rotate(4 1870.7 182.7)"/><ellipse cx="1857.1" cy="690.8" rx="4.2" ry="1.4" transform="rotate(81 1857.1 690.8)"/><ellipse cx="1730.3" cy="459.6" rx="3.2" ry="0.9" transform="rotate(137 1730.3 459.6)"/><ellipse cx="1795.4" cy="966.7" rx="3.7" ry="1.4" transform="rotate(169 1795.4 966.7)"/><ellipse cx="1678.2" cy="833.7" rx="2.2" ry="1.5" transform="rotate(95 1678.2 833.7)"/><ellipse cx="1985.2" cy="721.8" rx="1.6" ry="1.6" transform="rotate(35 1985.2 721.8)"/><ellipse cx="1935.3" cy="522.7" rx="1.1" ry="2.1" transform="rotate(95 1935.3 522.7)"/><ellipse cx="2036.5" cy="327.5" rx="2.9" ry="2.3" transform="rotate(42 2036.5 327.5)"/><ellipse cx="1563.1" cy="93.9" rx="3.7" ry="1.5" transform="rotate(62 1563.1 93.9)"/><ellipse cx="1603.0" cy="1088.5" rx="1.6" ry="2.3" transform="rotate(62 1603.0 1088.5)"/><ellipse cx="1692.2" cy="961.1" rx="1.8" ry="2.2" transform="rotate(42 1692.2 961.1)"/><ellipse cx="1818.8" cy="120.5" rx="4.3" ry="1.5" transform="rotate(142 1818.8 120.5)"/><ellipse cx="1853.1" cy="1024.6" rx="1.3" ry="1.9" transform="rotate(180 1853.1 1024.6)"/><ellipse cx="1812.2" cy="1008.0" rx="4.4" ry="1.2" transform="rotate(8 1812.2 1008.0)"/><ellipse cx="1623.4" cy="785.9" rx="2.7" ry="1.7" transform="rotate(26 1623.4 785.9)"/><ellipse cx="1670.4" cy="1081.0" rx="4.4" ry="1.6" transform="rotate(145 1670.4 1081.0)"/><ellipse cx="1921.0" cy="675.9" rx="4.4" ry="1.8" transform="rotate(145 1921.0 675.9)"/><ellipse cx="1512.4" cy="994.1" rx="3.5" ry="2.9" transform="rotate(137 1512.4 994.1)"/><ellipse cx="1636.9" cy="808.1" rx="1.1" ry="2.8" transform="rotate(97 1636.9 808.1)"/><ellipse cx="1608.5" cy="887.5" rx="2.1" ry="1.9" transform="rotate(154 1608.5 887.5)"/><ellipse cx="1996.6" cy="459.4" rx="2.9" ry="1.1" transform="rotate(44 1996.6 459.4)"/><ellipse cx="1821.7" cy="538.0" rx="1.0" ry="2.9" transform="rotate(152 1821.7 538.0)"/><ellipse cx="1991.2" cy="550.8" rx="2.9" ry="0.8" transform="rotate(5 1991.2 550.8)"/><ellipse cx="1776.9" cy="1108.6" rx="3.5" ry="2.6" transform="rotate(179 1776.9 1108.6)"/><ellipse cx="1590.7" cy="901.5" rx="3.5" ry="1.7" transform="rotate(29 1590.7 901.5)"/><ellipse cx="1801.3" cy="475.4" rx="3.5" ry="2.0" transform="rotate(39 1801.3 475.4)"/><ellipse cx="1978.1" cy="736.2" rx="2.7" ry="2.0" transform="rotate(97 1978.1 736.2)"/><ellipse cx="1557.8" cy="1071.0" rx="1.7" ry="3.0" transform="rotate(23 1557.8 1071.0)"/><ellipse cx="1790.2" cy="927.1" rx="2.9" ry="2.8" transform="rotate(74 1790.2 927.1)"/><ellipse cx="1809.4" cy="867.3" rx="1.4" ry="2.3" transform="rotate(4 1809.4 867.3)"/><ellipse cx="1993.7" cy="570.8" rx="1.5" ry="2.0" transform="rotate(79 1993.7 570.8)"/><ellipse cx="1800.1" cy="166.1" rx="2.4" ry="2.3" transform="rotate(59 1800.1 166.1)"/><ellipse cx="1954.3" cy="620.2" rx="1.5" ry="2.6" transform="rotate(41 1954.3 620.2)"/><ellipse cx="1643.6" cy="827.8" rx="4.5" ry="1.3" transform="rotate(0 1643.6 827.8)"/><ellipse cx="1727.7" cy="805.4" rx="4.4" ry="1.2" transform="rotate(116 1727.7 805.4)"/><ellipse cx="1680.7" cy="776.9" rx="1.6" ry="0.8" transform="rotate(138 1680.7 776.9)"/><ellipse cx="1868.2" cy="784.7" rx="2.6" ry="2.1" transform="rotate(159 1868.2 784.7)"/><ellipse cx="1593.5" cy="791.1" rx="2.0" ry="2.0" transform="rotate(161 1593.5 791.1)"/><ellipse cx="1918.2" cy="475.9" rx="2.1" ry="2.3" transform="rotate(101 1918.2 475.9)"/><ellipse cx="2002.0" cy="532.7" rx="4.1" ry="2.4" transform="rotate(121 2002.0 532.7)"/><ellipse cx="1916.5" cy="805.2" rx="2.9" ry="1.6" transform="rotate(142 1916.5 805.2)"/><ellipse cx="1894.4" cy="787.3" rx="1.5" ry="1.7" transform="rotate(85 1894.4 787.3)"/><ellipse cx="1719.7" cy="867.8" rx="4.3" ry="2.4" transform="rotate(65 1719.7 867.8)"/><ellipse cx="2037.6" cy="558.9" rx="2.2" ry="1.1" transform="rotate(74 2037.6 558.9)"/><ellipse cx="1582.0" cy="125.8" rx="2.4" ry="2.9" transform="rotate(22 1582.0 125.8)"/><ellipse cx="1932.0" cy="387.3" rx="2.6" ry="1.7" transform="rotate(60 1932.0 387.3)"/><ellipse cx="1513.4" cy="100.2" rx="1.5" ry="1.3" transform="rotate(150 1513.4 100.2)"/><ellipse cx="1974.6" cy="444.5" rx="1.9" ry="2.2" transform="rotate(96 1974.6 444.5)"/><ellipse cx="1775.8" cy="125.5" rx="2.0" ry="1.9" transform="rotate(56 1775.8 125.5)"/><ellipse cx="1856.1" cy="1012.8" rx="3.1" ry="2.1" transform="rotate(48 1856.1 1012.8)"/><ellipse cx="1781.3" cy="1012.7" rx="2.7" ry="1.7" transform="rotate(71 1781.3 1012.7)"/><ellipse cx="1690.9" cy="929.1" rx="2.1" ry="2.3" transform="rotate(20 1690.9 929.1)"/><ellipse cx="2003.0" cy="666.4" rx="4.1" ry="2.9" transform="rotate(37 2003.0 666.4)"/><ellipse cx="1981.7" cy="506.3" rx="2.0" ry="2.1" transform="rotate(30 1981.7 506.3)"/><ellipse cx="2000.0" cy="340.3" rx="3.8" ry="1.0" transform="rotate(115 2000.0 340.3)"/><ellipse cx="1597.9" cy="1073.3" rx="2.7" ry="1.1" transform="rotate(23 1597.9 1073.3)"/><ellipse cx="1858.5" cy="888.9" rx="4.5" ry="1.1" transform="rotate(53 1858.5 888.9)"/><ellipse cx="2011.9" cy="744.3" rx="2.0" ry="1.1" transform="rotate(168 2011.9 744.3)"/><ellipse cx="1880.4" cy="1077.0" rx="2.3" ry="1.8" transform="rotate(110 1880.4 1077.0)"/><ellipse cx="1662.9" cy="1023.3" rx="3.4" ry="2.7" transform="rotate(32 1662.9 1023.3)"/><ellipse cx="1655.4" cy="949.9" rx="3.0" ry="2.1" transform="rotate(142 1655.4 949.9)"/><ellipse cx="1687.2" cy="989.8" rx="4.5" ry="0.8" transform="rotate(146 1687.2 989.8)"/><ellipse cx="1731.6" cy="981.1" rx="1.3" ry="2.5" transform="rotate(74 1731.6 981.1)"/><ellipse cx="1577.1" cy="949.9" rx="1.7" ry="2.1" transform="rotate(108 1577.1 949.9)"/><ellipse cx="1519.6" cy="1003.6" rx="3.0" ry="1.5" transform="rotate(78 1519.6 1003.6)"/><ellipse cx="2027.0" cy="466.9" rx="1.9" ry="1.7" transform="rotate(51 2027.0 466.9)"/><ellipse cx="1900.5" cy="777.9" rx="3.5" ry="2.9" transform="rotate(32 1900.5 777.9)"/><ellipse cx="1849.7" cy="190.0" rx="1.7" ry="1.2" transform="rotate(157 1849.7 190.0)"/><ellipse cx="1753.8" cy="143.4" rx="2.7" ry="1.5" transform="rotate(14 1753.8 143.4)"/><ellipse cx="1658.1" cy="955.2" rx="3.5" ry="1.5" transform="rotate(31 1658.1 955.2)"/><ellipse cx="1610.6" cy="957.1" rx="3.7" ry="2.5" transform="rotate(52 1610.6 957.1)"/><ellipse cx="1645.1" cy="1062.2" rx="1.5" ry="2.3" transform="rotate(85 1645.1 1062.2)"/><ellipse cx="1753.9" cy="1098.8" rx="1.2" ry="1.6" transform="rotate(21 1753.9 1098.8)"/><ellipse cx="1643.3" cy="1100.8" rx="2.4" ry="2.0" transform="rotate(36 1643.3 1100.8)"/><ellipse cx="1616.0" cy="802.6" rx="3.8" ry="2.3" transform="rotate(60 1616.0 802.6)"/><ellipse cx="1909.7" cy="800.6" rx="2.4" ry="0.9" transform="rotate(81 1909.7 800.6)"/><ellipse cx="1775.1" cy="999.1" rx="3.5" ry="2.9" transform="rotate(27 1775.1 999.1)"/><ellipse cx="1874.4" cy="728.0" rx="1.4" ry="1.9" transform="rotate(163 1874.4 728.0)"/><ellipse cx="1857.0" cy="1037.3" rx="1.2" ry="1.7" transform="rotate(152 1857.0 1037.3)"/><ellipse cx="1612.0" cy="777.5" rx="3.5" ry="1.0" transform="rotate(39 1612.0 777.5)"/><ellipse cx="1684.2" cy="1096.5" rx="2.7" ry="2.5" transform="rotate(121 1684.2 1096.5)"/><ellipse cx="1842.3" cy="881.4" rx="1.2" ry="0.9" transform="rotate(116 1842.3 881.4)"/><ellipse cx="1841.1" cy="881.8" rx="3.2" ry="2.1" transform="rotate(44 1841.1 881.8)"/><ellipse cx="1820.4" cy="852.5" rx="2.0" ry="1.6" transform="rotate(28 1820.4 852.5)"/><ellipse cx="1751.7" cy="181.1" rx="2.7" ry="1.1" transform="rotate(114 1751.7 181.1)"/><ellipse cx="1971.5" cy="485.1" rx="4.3" ry="2.9" transform="rotate(111 1971.5 485.1)"/></g><g fill="none" stroke="#f5c3b0" stroke-width="0.75"><path d="M1972.5,787.5Q1972.4,775.2 1972.0,763.0"/><path d="M1739.3,918.5Q1748.2,919.4 1755.8,924.2"/><path d="M1734.3,779.4Q1745.5,772.6 1757.6,767.4"/><path d="M1698.5,193.2Q1693.3,189.0 1686.7,187.5"/><path d="M1784.7,80.9Q1788.9,88.5 1795.8,93.8"/><path d="M1568.0,788.0Q1568.0,801.7 1567.8,815.3"/><path d="M1706.6,781.0Q1698.5,780.6 1690.5,780.0"/><path d="M1653.5,1102.1Q1662.3,1093.1 1668.3,1081.9"/><path d="M1656.9,1054.7Q1648.0,1059.6 1638.9,1064.4"/><path d="M1516.0,108.5Q1509.6,124.4 1501.5,139.5"/><path d="M1918.1,729.7Q1910.7,722.4 1907.1,712.6"/><path d="M1989.0,874.4Q1994.0,877.8 1999.9,879.0"/><path d="M1846.1,836.3Q1844.9,821.8 1838.6,808.8"/><path d="M1810.0,190.0Q1813.7,185.2 1817.8,180.8"/><path d="M1728.7,978.8Q1720.0,972.7 1710.2,968.6"/><path d="M1864.1,648.7Q1873.1,652.9 1882.1,657.0"/><path d="M1617.2,884.2Q1627.7,886.5 1637.8,890.0"/><path d="M1738.8,759.3Q1721.0,756.5 1703.4,760.7"/><path d="M1938.2,375.5Q1947.4,379.5 1957.3,380.9"/><path d="M1778.9,1045.2Q1773.0,1037.9 1766.6,1031.2"/><path d="M1887.0,498.4Q1903.1,503.8 1919.9,505.4"/><path d="M1602.0,1080.5Q1608.0,1066.8 1611.6,1052.3"/><path d="M1944.9,713.0Q1936.6,712.4 1928.5,714.0"/><path d="M1765.2,798.4Q1752.7,799.2 1740.3,797.4"/><path d="M1807.1,963.2Q1798.4,962.7 1790.1,965.3"/><path d="M1654.0,912.8Q1646.5,927.0 1644.7,943.0"/><path d="M1693.3,1055.1Q1688.2,1044.9 1679.0,1038.0"/><path d="M1992.9,811.5Q1993.4,800.3 1995.3,789.3"/><path d="M1624.7,1055.8Q1623.0,1065.5 1620.1,1075.0"/><path d="M1522.7,795.7Q1529.6,789.5 1534.5,781.7"/><path d="M1503.7,100.2Q1518.4,98.3 1532.7,94.4"/><path d="M1765.1,786.5Q1760.8,777.2 1757.6,767.4"/><path d="M1906.7,548.1Q1898.4,537.4 1893.3,524.8"/><path d="M1734.3,779.4Q1726.0,776.6 1718.9,771.4"/><path d="M1750.7,272.8Q1752.6,265.8 1755.4,259.1"/><path d="M1507.5,996.8Q1511.6,985.8 1518.9,976.5"/><path d="M2002.6,820.6Q2009.0,828.9 2014.0,838.2"/><path d="M1617.6,124.7Q1613.2,133.8 1610.8,143.6"/><path d="M1750.7,272.8Q1772.5,271.0 1794.4,271.7"/><path d="M1866.4,425.4Q1855.5,427.1 1845.8,432.3"/><path d="M1575.2,948.6Q1564.2,954.1 1553.8,960.8"/><path d="M1750.9,200.2Q1748.3,187.4 1744.5,174.9"/><path d="M1939.0,679.6Q1932.6,679.0 1926.1,679.2"/><path d="M2009.8,570.0Q2002.1,567.1 1995.1,562.8"/><path d="M1904.0,564.3Q1897.9,561.0 1893.8,555.4"/><path d="M1553.5,976.4Q1547.3,974.5 1541.6,971.2"/><path d="M1629.6,989.6Q1636.2,990.8 1642.8,989.3"/><path d="M1799.4,1006.3Q1808.1,1013.9 1815.1,1023.1"/><path d="M1926.6,873.7Q1926.0,880.9 1926.5,888.0"/><path d="M1939.0,679.6Q1938.8,671.2 1937.3,663.0"/><path d="M1492.3,192.5Q1486.2,189.0 1482.1,183.2"/><path d="M1702.9,181.4Q1723.4,163.7 1739.7,142.0"/><path d="M1602.0,1080.5Q1611.3,1078.6 1620.1,1075.0"/><path d="M1903.9,232.4Q1897.6,242.9 1890.5,252.8"/><path d="M1958.7,647.4Q1949.5,657.3 1937.3,663.0"/><path d="M1605.5,759.3Q1579.7,751.3 1553.5,745.5"/><path d="M1913.3,206.7Q1907.0,204.9 1900.4,204.0"/><path d="M1793.0,224.5Q1793.8,236.5 1792.4,248.5"/><path d="M1630.6,881.0Q1624.0,883.1 1617.2,884.2"/><path d="M1840.2,1091.7Q1840.4,1083.9 1841.5,1076.1"/><path d="M1778.0,771.9Q1789.8,773.2 1800.8,777.9"/><path d="M1597.4,918.8Q1585.2,909.5 1575.1,897.9"/><path d="M1785.6,1068.4Q1776.7,1075.9 1770.0,1085.4"/><path d="M1650.2,976.3Q1644.0,971.0 1638.0,965.6"/><path d="M1794.4,271.7Q1780.6,267.1 1768.6,259.0"/><path d="M1907.9,780.2Q1912.9,775.9 1918.6,772.7"/><path d="M1993.4,382.1Q1996.1,373.4 1996.3,364.2"/><path d="M1543.6,841.1Q1553.4,846.0 1563.0,851.2"/><path d="M1904.6,1037.8Q1891.8,1047.9 1876.1,1052.5"/><path d="M1603.6,1009.3Q1593.9,1012.0 1583.9,1012.8"/><path d="M1909.2,836.6Q1903.1,843.7 1895.5,849.3"/><path d="M1807.2,796.5Q1797.9,790.2 1788.1,784.9"/><path d="M1516.0,108.5Q1521.8,109.1 1527.5,109.8"/><path d="M1549.5,877.4Q1551.5,885.5 1550.2,893.8"/><path d="M1924.9,599.1Q1913.8,605.3 1904.6,614.2"/><path d="M1981.1,517.2Q1977.9,504.7 1970.4,494.0"/><path d="M1580.9,814.4Q1589.8,821.7 1599.1,828.6"/><path d="M1724.4,888.5Q1738.2,898.0 1749.3,910.4"/><path d="M1824.9,143.8Q1818.1,147.0 1811.4,150.6"/><path d="M1576.1,120.2Q1567.4,129.0 1558.3,137.3"/><path d="M1918.6,668.3Q1919.9,659.3 1918.2,650.4"/><path d="M2005.8,867.9Q2012.1,855.9 2022.7,847.6"/><path d="M1846.1,836.3Q1857.3,844.3 1866.0,855.0"/><path d="M1569.5,157.4Q1568.1,149.6 1569.4,141.7"/><path d="M1986.5,729.3Q1993.1,729.1 1999.6,728.5"/><path d="M1953.0,187.6Q1945.1,191.4 1937.0,194.8"/><path d="M1553.5,976.4Q1561.3,974.0 1569.1,971.4"/><path d="M1845.1,204.1Q1847.2,213.1 1845.7,222.2"/><path d="M2022.5,639.0Q2027.0,634.9 2032.5,632.6"/><path d="M1526.8,186.8Q1517.6,190.8 1507.6,191.8"/><path d="M1751.6,988.7Q1738.7,992.9 1728.1,1001.4"/><path d="M1824.4,240.4Q1830.2,234.5 1834.4,227.3"/><path d="M1713.5,1083.6Q1709.8,1073.1 1702.6,1064.7"/><path d="M1965.2,830.7Q1972.4,837.5 1979.1,844.8"/><path d="M1885.4,671.8Q1895.3,670.2 1904.0,665.4"/><path d="M1938.2,375.5Q1944.2,389.3 1946.9,404.1"/><path d="M1992.9,811.5Q1997.9,821.7 1999.8,832.9"/><path d="M1516.5,1099.9Q1528.3,1105.7 1541.4,1106.3"/><path d="M1914.6,892.9Q1903.6,897.3 1893.5,903.6"/><path d="M1737.0,1041.0Q1733.7,1049.5 1727.5,1056.2"/><path d="M1932.8,904.3Q1923.0,899.6 1914.6,892.9"/><path d="M1553.5,745.5Q1547.0,748.9 1542.3,754.4"/><path d="M1696.5,871.3Q1703.6,886.2 1714.5,898.6"/><path d="M1769.3,482.5Q1776.0,484.3 1782.8,483.3"/><path d="M1642.8,989.3Q1653.7,999.9 1666.1,1008.6"/><path d="M1847.9,259.7Q1848.6,266.3 1847.3,272.9"/><path d="M1743.0,946.0Q1733.4,938.4 1727.5,927.7"/><path d="M1989.7,703.0Q1991.1,689.8 1989.6,676.7"/><path d="M1895.4,798.1Q1887.3,796.9 1879.9,793.4"/><path d="M1553.6,828.9Q1547.5,834.1 1543.6,841.1"/><path d="M2010.0,788.1Q2014.8,779.2 2018.1,769.6"/><path d="M1680.8,774.0Q1672.5,770.9 1665.0,766.1"/><path d="M1932.8,904.3Q1937.0,913.5 1943.0,921.7"/><path d="M1651.2,863.2Q1639.8,870.9 1630.6,881.0"/><path d="M1907.1,712.6Q1900.2,724.2 1889.1,731.9"/><path d="M2010.6,584.6Q2010.7,577.2 2009.8,570.0"/><path d="M1737.0,1041.0Q1745.7,1037.9 1754.0,1033.7"/><path d="M1958.7,705.3Q1970.7,711.1 1982.3,717.5"/><path d="M2018.4,405.0Q2008.7,414.1 2000.0,424.1"/><path d="M1553.5,976.4Q1561.4,982.7 1571.2,985.7"/><path d="M1884.4,189.2Q1891.8,197.3 1900.4,204.0"/><path d="M1854.9,134.6Q1866.4,142.0 1879.5,145.9"/><path d="M1846.2,888.4Q1837.5,894.2 1830.1,901.6"/><path d="M1992.2,656.7Q1998.1,663.0 2003.1,670.0"/><path d="M1805.7,841.3Q1815.2,848.3 1824.5,855.8"/><path d="M1671.7,929.9Q1670.8,917.1 1670.1,904.3"/><path d="M1751.6,988.7Q1754.9,982.4 1756.7,975.5"/><path d="M1937.4,704.4Q1947.9,694.8 1953.7,681.8"/><path d="M2010.0,788.1Q2013.5,795.1 2014.8,802.8"/><path d="M1560.3,86.0Q1570.7,96.3 1578.3,108.9"/><path d="M1855.7,809.0Q1865.0,799.2 1870.3,786.7"/><path d="M1915.0,929.5Q1919.4,924.1 1924.0,918.8"/><path d="M1837.0,163.8Q1842.0,154.3 1847.6,145.1"/><path d="M1792.3,908.9Q1789.4,918.1 1786.1,927.2"/><path d="M2017.0,593.9Q2022.8,591.3 2028.7,588.9"/><path d="M1771.2,987.8Q1770.5,977.5 1767.2,967.7"/><path d="M1591.0,1104.1Q1595.5,1091.8 1602.0,1080.5"/><path d="M1617.6,124.7Q1608.7,125.9 1599.7,125.6"/><path d="M1863.9,246.8Q1872.7,229.4 1877.2,210.3"/><path d="M1684.2,1066.2Q1693.4,1065.7 1702.6,1064.7"/><path d="M1658.9,950.2Q1670.2,942.3 1683.7,939.8"/><path d="M1773.8,998.5Q1773.8,992.9 1771.2,987.8"/><path d="M1590.6,838.6Q1586.0,826.4 1580.9,814.4"/><path d="M1755.5,885.6Q1760.7,882.0 1766.8,880.4"/><path d="M1945.7,908.3Q1938.9,907.3 1932.8,904.3"/><path d="M1817.9,901.6Q1819.4,916.2 1826.3,929.1"/><path d="M1864.9,375.3Q1856.9,386.8 1854.9,400.7"/><path d="M1568.5,1070.3Q1568.5,1060.9 1566.8,1051.6"/><path d="M1655.4,892.6Q1646.3,893.0 1637.8,890.0"/><path d="M1935.6,765.8Q1932.3,777.2 1931.5,789.0"/><path d="M1522.7,795.7Q1513.9,793.6 1504.8,793.2"/><path d="M1837.1,791.1Q1845.8,791.0 1854.2,788.5"/><path d="M1681.5,834.8Q1693.6,829.7 1702.9,820.4"/><path d="M1835.5,514.7Q1842.9,504.6 1845.5,492.3"/><path d="M1746.3,816.0Q1754.7,823.0 1764.7,827.5"/><path d="M1866.4,425.4Q1861.8,418.8 1857.4,412.1"/><path d="M1727.8,790.4Q1733.5,794.8 1740.3,797.4"/><path d="M1942.9,175.5Q1926.6,178.5 1912.6,187.4"/><path d="M1679.8,823.6Q1681.4,814.2 1682.7,804.8"/><path d="M1588.4,955.1Q1581.1,945.4 1577.2,934.0"/><path d="M1553.5,745.5Q1561.4,752.5 1565.8,762.2"/><path d="M1943.0,921.7Q1940.8,926.9 1939.1,932.4"/><path d="M2027.7,564.5Q2032.2,559.9 2035.2,554.2"/><path d="M1926.6,873.7Q1909.6,870.7 1892.3,870.7"/><path d="M1940.9,479.2Q1950.5,488.8 1958.4,499.9"/><path d="M1875.7,464.0Q1867.1,473.4 1855.8,479.3"/><path d="M2034.1,785.5Q2037.8,765.2 2036.2,744.6"/><path d="M1854.9,134.6Q1851.7,140.1 1847.6,145.1"/><path d="M1960.3,396.3Q1960.1,388.4 1957.3,380.9"/><path d="M1807.1,963.2Q1815.3,964.3 1823.5,964.6"/><path d="M1901.1,814.0Q1887.8,829.3 1872.8,843.0"/><path d="M1650.2,976.3Q1645.8,982.4 1642.8,989.3"/><path d="M1895.7,1020.6Q1894.5,1015.0 1895.5,1009.3"/><path d="M1858.2,984.3Q1854.7,971.8 1846.5,961.8"/><path d="M1958.7,705.3Q1958.0,693.1 1953.7,681.8"/><path d="M1869.8,811.1Q1862.6,811.0 1855.7,809.0"/><path d="M1681.3,892.6Q1687.6,894.3 1693.6,896.4"/><path d="M1518.7,1043.3Q1516.5,1048.8 1512.2,1052.8"/><path d="M1490.8,123.9Q1491.7,115.3 1490.6,106.7"/><path d="M1780.5,901.5Q1773.2,891.3 1766.8,880.4"/><path d="M1835.7,455.8Q1855.3,461.9 1875.7,464.0"/><path d="M1940.5,873.8Q1940.4,879.6 1939.6,885.3"/><path d="M1625.6,772.4Q1627.6,764.6 1631.6,757.6"/><path d="M2022.7,676.5Q2026.2,666.6 2027.3,656.2"/><path d="M1918.6,668.3Q1911.0,668.4 1904.0,665.4"/><path d="M1849.7,177.0Q1855.9,183.0 1862.5,188.6"/><path d="M1706.0,848.8Q1693.4,842.5 1681.5,834.8"/><path d="M1740.2,854.7Q1750.1,862.6 1758.8,871.7"/><path d="M2035.9,718.2Q2025.9,701.0 2010.4,688.4"/><path d="M1772.9,1068.0Q1769.8,1076.4 1770.0,1085.4"/><path d="M1568.5,1070.3Q1562.4,1072.1 1556.4,1074.3"/><path d="M1875.9,120.2Q1864.1,125.5 1854.9,134.6"/><path d="M2003.0,340.0Q2004.7,332.9 2009.1,327.1"/><path d="M1738.8,759.3Q1727.8,763.6 1718.9,771.4"/><path d="M2030.3,410.9Q2031.2,426.5 2035.8,441.5"/><path d="M1527.7,958.0Q1529.5,950.0 1533.7,943.0"/><path d="M1507.5,996.8Q1520.5,991.5 1534.3,988.9"/><path d="M1762.8,457.9Q1768.1,453.9 1773.6,450.4"/><path d="M1799.7,990.7Q1796.8,977.3 1790.1,965.3"/><path d="M1668.3,1081.9Q1677.1,1074.8 1684.2,1066.2"/><path d="M1738.0,1087.6Q1726.7,1094.9 1714.9,1101.5"/><path d="M1918.1,729.7Q1924.5,722.6 1928.5,714.0"/><path d="M1596.3,788.3Q1591.6,801.0 1593.0,814.5"/><path d="M1580.9,814.4Q1574.1,827.7 1566.1,840.3"/><path d="M1973.9,654.8Q1971.0,664.5 1965.1,672.8"/><path d="M1790.0,797.7Q1788.3,791.4 1788.1,784.9"/><path d="M1731.0,113.7Q1733.5,107.6 1736.2,101.7"/><path d="M1733.1,1029.8Q1731.5,1015.4 1728.1,1001.4"/><path d="M1881.7,740.3Q1889.7,743.8 1898.3,743.6"/><path d="M1520.0,902.2Q1516.4,896.8 1514.3,890.7"/><path d="M1548.8,1026.7Q1558.8,1027.1 1568.6,1028.7"/><path d="M1984.0,531.0Q1985.9,540.9 1991.4,549.4"/><path d="M1540.5,1060.6Q1553.1,1054.6 1566.8,1051.6"/><path d="M1890.7,112.3Q1903.6,124.2 1919.1,132.4"/><path d="M1767.8,932.7Q1772.7,923.7 1780.8,917.3"/><path d="M1951.8,164.5Q1961.2,163.4 1969.9,159.6"/><path d="M2012.2,535.1Q2002.4,548.2 1995.1,562.8"/><path d="M2012.9,711.7Q2007.2,720.9 1999.6,728.5"/><path d="M1993.5,619.9Q1981.4,623.6 1969.0,625.6"/><path d="M1746.3,816.0Q1742.8,806.8 1740.3,797.4"/><path d="M1556.4,1074.3Q1550.8,1071.9 1544.6,1072.4"/><path d="M1846.2,888.4Q1833.7,889.7 1821.1,890.6"/><path d="M1937.9,568.7Q1927.2,567.0 1916.6,569.1"/><path d="M1590.1,138.5Q1591.9,149.1 1595.6,159.2"/><path d="M1992.9,811.5Q2003.9,807.4 2014.8,802.8"/><path d="M1713.5,1083.6Q1719.5,1080.9 1723.9,1076.2"/><path d="M1876.1,1052.5Q1866.9,1042.4 1854.3,1037.0"/><path d="M1690.5,780.0Q1693.6,794.8 1694.4,810.0"/><path d="M1602.3,943.8Q1601.8,937.5 1599.5,931.6"/><path d="M1840.3,240.2Q1832.4,239.9 1824.4,240.4"/><path d="M1582.3,1097.0Q1567.5,1095.6 1552.7,1096.3"/><path d="M1582.8,1043.0Q1576.6,1035.0 1568.6,1028.7"/><path d="M1999.8,832.9Q1989.6,839.1 1979.1,844.8"/><path d="M1867.0,157.7Q1856.8,165.9 1849.7,177.0"/><path d="M1599.1,828.6Q1605.2,828.7 1610.6,831.5"/><path d="M1893.3,524.8Q1890.6,540.2 1893.8,555.4"/><path d="M1863.5,738.9Q1868.9,731.1 1876.7,725.8"/><path d="M1862.7,72.9Q1856.4,74.4 1850.9,77.8"/><path d="M1957.3,380.9Q1963.1,379.8 1968.9,379.0"/><path d="M1708.8,830.4Q1714.5,823.0 1722.5,818.3"/><path d="M1733.1,1029.8Q1727.6,1027.1 1721.4,1026.7"/><path d="M1528.8,808.8Q1536.6,805.2 1544.9,803.0"/><path d="M1873.3,599.3Q1877.0,593.0 1880.2,586.4"/><path d="M1683.7,939.8Q1690.6,926.6 1690.9,911.8"/><path d="M1726.8,244.8Q1732.8,247.6 1738.1,251.4"/><path d="M1915.0,929.5Q1919.9,932.2 1924.2,935.9"/><path d="M1677.6,976.6Q1665.2,965.5 1658.9,950.2"/><path d="M1569.6,1015.1Q1572.0,1007.0 1573.6,998.8"/><path d="M1767.8,932.7Q1768.4,925.3 1766.7,918.0"/><path d="M1694.4,1093.0Q1705.0,1096.5 1714.9,1101.5"/><path d="M1721.4,1026.7Q1724.6,1041.4 1727.5,1056.2"/><path d="M1540.5,1060.6Q1548.0,1068.0 1556.4,1074.3"/><path d="M1739.7,142.0Q1732.9,128.6 1731.0,113.7"/><path d="M1603.7,857.9Q1592.4,850.2 1579.9,844.6"/><path d="M1906.7,548.1Q1916.7,540.1 1927.9,533.9"/><path d="M1579.8,1029.0Q1574.2,1028.3 1568.6,1028.7"/><path d="M1895.7,1020.6Q1883.7,1023.9 1872.2,1028.3"/><path d="M1758.1,1051.0Q1764.6,1060.3 1772.9,1068.0"/><path d="M1806.0,903.7Q1807.8,894.7 1806.3,885.6"/><path d="M2022.5,639.0Q2017.6,646.8 2014.4,655.6"/><path d="M1943.7,213.8Q1940.1,204.4 1937.0,194.8"/><path d="M1944.4,348.1Q1951.3,348.2 1958.1,346.9"/><path d="M1772.8,182.2Q1770.7,194.3 1773.1,206.4"/><path d="M1690.9,911.8Q1687.9,901.3 1681.3,892.6"/><path d="M1750.9,200.2Q1738.1,194.6 1728.1,184.9"/><path d="M2032.7,267.0Q2034.5,280.4 2032.9,293.8"/><path d="M1824.9,143.8Q1820.6,133.3 1820.2,122.1"/><path d="M1666.1,1008.6Q1649.3,1007.8 1632.5,1008.4"/><path d="M1773.3,1010.5Q1779.7,1006.8 1785.1,1002.0"/><path d="M1868.7,538.9Q1872.8,546.4 1876.9,553.9"/><path d="M1834.1,262.6Q1840.7,267.8 1847.3,272.9"/><path d="M1863.5,738.9Q1872.5,741.4 1881.7,740.3"/><path d="M1943.7,213.8Q1935.4,203.5 1923.4,198.0"/><path d="M1940.9,479.2Q1959.4,470.3 1979.7,467.9"/><path d="M1641.1,782.2Q1639.4,790.1 1637.6,798.0"/><path d="M1846.1,836.3Q1834.5,837.4 1823.7,841.7"/><path d="M1684.4,1022.2Q1692.8,1016.6 1698.0,1008.0"/><path d="M1828.6,498.1Q1836.7,494.3 1845.5,492.3"/><path d="M1492.3,192.5Q1499.9,192.0 1507.6,191.8"/><path d="M1650.6,1033.9Q1656.6,1037.4 1663.5,1038.3"/><path d="M1815.3,983.8Q1817.2,973.3 1823.5,964.6"/><path d="M1901.1,814.0Q1913.5,810.3 1924.6,803.8"/><path d="M1767.8,932.7Q1777.2,930.8 1786.1,927.2"/><path d="M1872.2,1028.3Q1863.4,1033.1 1854.3,1037.0"/><path d="M1714.9,1101.5Q1698.5,1103.6 1681.9,1102.7"/><path d="M1739.7,841.6Q1734.0,843.1 1728.5,845.4"/><path d="M1746.3,816.0Q1734.4,817.5 1722.5,818.3"/><path d="M1696.5,871.3Q1687.3,880.8 1681.3,892.6"/><path d="M2009.8,570.0Q1999.7,572.8 1989.3,573.7"/><path d="M1529.3,124.2Q1530.1,116.8 1527.5,109.8"/><path d="M1632.8,1085.2Q1626.2,1080.5 1620.1,1075.0"/><path d="M1714.5,898.6Q1719.1,893.2 1724.4,888.5"/><path d="M1881.7,740.3Q1879.3,733.0 1876.7,725.8"/><path d="M1859.6,720.3Q1865.7,695.9 1866.9,670.7"/><path d="M1590.1,138.5Q1582.8,150.2 1579.9,163.5"/><path d="M1894.2,598.0Q1893.1,612.8 1889.8,627.2"/><path d="M1786.4,173.6Q1790.9,177.0 1796.0,179.1"/><path d="M1933.6,438.9Q1934.4,451.5 1938.2,463.6"/><path d="M1898.0,474.3Q1897.1,466.7 1894.6,459.6"/><path d="M2011.2,449.2Q2003.1,452.9 1995.3,457.1"/><path d="M1630.6,865.2Q1630.3,873.1 1630.6,881.0"/><path d="M1825.2,196.0Q1829.2,191.6 1834.5,188.9"/><path d="M1528.8,808.8Q1517.4,804.4 1505.3,804.9"/><path d="M1913.6,685.8Q1919.1,691.3 1925.8,695.2"/><path d="M1880.3,753.8Q1880.3,764.6 1882.4,775.2"/><path d="M1515.0,834.8Q1520.5,844.0 1526.3,853.0"/><path d="M1884.0,235.1Q1888.0,243.7 1890.5,252.8"/><path d="M1694.4,1093.0Q1687.6,1097.1 1681.9,1102.7"/><path d="M2020.6,877.6Q2025.0,862.6 2035.0,850.5"/><path d="M1904.0,564.3Q1910.1,567.1 1916.6,569.1"/><path d="M1735.0,89.5Q1728.2,88.1 1721.5,85.9"/><path d="M1935.8,118.9Q1927.0,125.1 1919.1,132.4"/><path d="M1862.7,72.9Q1839.3,72.5 1816.1,75.7"/><path d="M1939.0,723.5Q1934.9,717.5 1928.5,714.0"/><path d="M1646.9,765.4Q1639.5,761.1 1631.6,757.6"/><path d="M2017.1,285.7Q2024.7,290.4 2032.9,293.8"/><path d="M1743.5,828.7Q1750.2,835.4 1759.1,838.3"/><path d="M1651.2,863.2Q1646.8,857.8 1644.1,851.4"/><path d="M1638.5,1026.3Q1641.4,1034.9 1644.1,1043.5"/><path d="M1860.0,109.0Q1860.0,99.5 1862.2,90.3"/><path d="M1973.2,562.2Q1981.4,554.5 1991.4,549.4"/><path d="M2017.0,593.9Q2013.5,598.7 2011.9,604.3"/><path d="M1945.6,776.8Q1938.9,783.3 1931.5,789.0"/><path d="M2012.4,349.7Q2017.4,352.9 2021.0,357.6"/><path d="M1617.6,124.7Q1621.0,111.8 1627.6,100.1"/><path d="M1882.1,657.0Q1893.0,661.4 1904.0,665.4"/><path d="M1800.8,777.9Q1794.1,780.7 1788.1,784.9"/><path d="M1975.8,681.1Q1969.6,687.8 1964.1,695.1"/><path d="M1831.3,772.0Q1825.0,771.8 1818.9,773.2"/><path d="M1893.3,524.8Q1886.7,517.8 1880.3,510.5"/><path d="M1872.8,843.0Q1869.8,849.2 1866.0,855.0"/><path d="M1553.8,960.8Q1548.2,956.7 1543.1,951.8"/><path d="M1857.1,885.8Q1847.7,881.9 1838.5,877.4"/><path d="M1679.8,823.6Q1679.7,829.4 1681.5,834.8"/><path d="M1806.0,903.7Q1799.5,907.2 1792.3,908.9"/><path d="M1825.2,463.8Q1823.3,455.4 1821.9,446.9"/><path d="M2024.1,827.9Q2031.5,832.4 2036.7,839.4"/><path d="M1582.3,1097.0Q1561.0,1098.0 1541.4,1106.3"/><path d="M1582.8,1043.0Q1573.9,1045.7 1566.8,1051.6"/><path d="M1923.7,839.5Q1916.3,838.7 1909.2,836.6"/><path d="M1614.7,849.6Q1618.3,856.5 1618.5,864.2"/><path d="M1855.8,479.3Q1850.5,485.7 1845.5,492.3"/><path d="M1782.2,428.7Q1787.7,441.0 1797.1,450.7"/><path d="M1670.5,316.2Q1673.8,311.0 1678.6,307.2"/><path d="M1879.7,159.6Q1878.9,152.7 1879.5,145.9"/><path d="M1714.8,1064.9Q1721.6,1061.2 1727.5,1056.2"/><path d="M1854.3,534.8Q1852.3,524.0 1852.8,513.0"/><path d="M1969.8,608.0Q1957.7,605.1 1946.2,600.5"/><path d="M1727.5,1056.2Q1727.0,1066.4 1723.9,1076.2"/><path d="M1924.1,519.5Q1917.6,519.2 1911.2,519.4"/><path d="M1661.8,1070.1Q1654.4,1077.1 1647.8,1084.9"/><path d="M1995.3,857.2Q1988.5,864.8 1979.0,868.8"/><path d="M1508.3,73.0Q1521.0,83.2 1532.7,94.4"/><path d="M1999.8,832.9Q1982.5,831.4 1965.2,830.7"/><path d="M1568.5,1070.3Q1579.7,1067.2 1588.8,1060.0"/><path d="M1490.7,1015.4Q1500.2,1022.8 1511.4,1026.9"/><path d="M2013.7,740.4Q2025.1,742.1 2036.2,744.6"/><path d="M1582.3,1097.0Q1586.9,1100.3 1591.0,1104.1"/><path d="M1683.6,1078.6Q1692.9,1071.3 1702.6,1064.7"/><path d="M1547.2,102.4Q1540.5,97.4 1532.7,94.4"/><path d="M1994.0,260.3Q1998.7,267.9 2004.0,275.2"/><path d="M1693.3,1055.1Q1689.9,1061.6 1684.2,1066.2"/><path d="M1703.4,760.7Q1706.5,770.7 1706.6,781.0"/><path d="M1750.7,272.8Q1738.9,269.9 1727.0,267.4"/><path d="M1771.2,987.8Q1780.1,976.1 1790.1,965.3"/><path d="M1937.4,704.4Q1932.1,708.3 1928.5,714.0"/><path d="M1921.6,951.5Q1931.3,942.8 1939.1,932.4"/><path d="M1871.6,871.3Q1881.9,869.8 1892.3,870.7"/><path d="M1633.1,1100.7Q1641.2,1093.5 1647.8,1084.9"/><path d="M1981.1,517.2Q1973.9,513.6 1968.4,507.7"/><path d="M1973.8,356.0Q1985.3,359.2 1996.3,364.2"/><path d="M1516.0,108.5Q1514.6,125.4 1515.8,142.3"/><path d="M1769.3,482.5Q1761.0,476.0 1750.9,472.7"/><path d="M1589.1,873.0Q1594.4,888.4 1595.5,904.6"/><path d="M1827.7,1030.0Q1833.7,1026.0 1838.2,1020.3"/><path d="M1900.7,136.9Q1890.1,125.8 1875.9,120.2"/><path d="M1503.7,100.2Q1496.5,102.2 1490.6,106.7"/><path d="M1715.3,1014.4Q1707.3,1009.5 1698.0,1008.0"/><path d="M1854.5,1053.1Q1849.6,1065.5 1841.5,1076.1"/><path d="M1739.3,918.5Q1732.8,922.3 1727.5,927.7"/><path d="M1560.3,86.0Q1552.1,92.9 1547.2,102.4"/><path d="M1854.5,198.0Q1849.9,201.1 1845.1,204.1"/><path d="M1536.3,1083.1Q1529.6,1086.1 1524.0,1091.0"/><path d="M1767.8,932.7Q1763.7,943.2 1757.7,952.7"/><path d="M1962.0,900.5Q1959.6,892.0 1957.6,883.4"/><path d="M1616.7,966.2Q1606.7,972.4 1597.9,980.3"/><path d="M1988.0,433.4Q1979.3,444.9 1967.1,452.4"/><path d="M1654.0,912.8Q1646.4,924.7 1636.3,934.6"/><path d="M1634.7,810.7Q1637.0,821.9 1640.0,832.8"/><path d="M1750.6,135.3Q1750.4,129.5 1751.0,123.6"/><path d="M1867.0,157.7Q1873.6,157.1 1879.7,159.6"/><path d="M1890.9,711.7Q1884.7,703.2 1882.7,692.9"/><path d="M1940.9,479.2Q1941.7,464.9 1948.7,452.4"/><path d="M1849.8,908.0Q1840.1,904.2 1830.1,901.6"/><path d="M1566.4,878.9Q1557.9,878.7 1549.5,877.4"/><path d="M1907.1,712.6Q1917.9,711.6 1928.5,714.0"/><path d="M1723.1,283.4Q1733.8,289.1 1744.2,295.2"/><path d="M1876.9,553.9Q1885.2,556.6 1893.8,555.4"/><path d="M2020.9,457.1Q2019.3,447.9 2022.1,439.0"/><path d="M1740.9,880.2Q1750.6,877.6 1758.8,871.7"/><path d="M1852.3,731.4Q1852.2,749.3 1852.5,767.1"/><path d="M1969.8,608.0Q1968.0,616.7 1969.0,625.6"/><path d="M1867.0,157.7Q1863.6,144.8 1854.9,134.6"/><path d="M1743.5,828.7Q1754.2,829.0 1764.7,827.5"/><path d="M1878.4,931.9Q1871.7,942.2 1867.3,953.7"/><path d="M1646.9,765.4Q1645.9,759.7 1646.3,753.8"/><path d="M1694.4,1093.0Q1698.8,1078.9 1702.6,1064.7"/><path d="M1824.9,143.8Q1836.3,143.2 1847.6,145.1"/><path d="M1940.9,479.2Q1939.8,490.4 1937.3,501.5"/><path d="M1694.8,1039.6Q1700.0,1024.2 1698.0,1008.0"/><path d="M1534.3,988.9Q1538.1,980.2 1541.6,971.2"/><path d="M1576.1,120.2Q1583.0,129.4 1590.1,138.5"/><path d="M1678.8,1090.5Q1680.8,1084.4 1683.6,1078.6"/><path d="M1533.0,1012.2Q1539.5,1013.2 1545.4,1015.9"/><path d="M1863.9,246.8Q1877.5,248.4 1890.5,252.8"/><path d="M1784.7,152.5Q1790.7,145.0 1797.3,138.1"/><path d="M1775.8,70.2Q1761.3,73.2 1747.6,78.6"/><path d="M1778.5,858.2Q1768.5,864.8 1758.8,871.7"/><path d="M1960.3,396.3Q1971.3,403.2 1983.6,407.4"/><path d="M1529.8,764.8Q1517.6,774.2 1503.4,780.1"/><path d="M1957.6,883.4Q1967.0,890.8 1978.6,893.3"/><path d="M1976.8,591.2Q1962.5,599.2 1946.2,600.5"/><path d="M1871.6,871.3Q1874.5,876.6 1876.4,882.4"/><path d="M1930.6,612.6Q1933.7,623.2 1933.9,634.2"/><path d="M2012.2,535.1Q2020.9,531.1 2027.6,524.2"/><path d="M1697.8,284.8Q1706.7,275.7 1714.7,265.9"/><path d="M1975.1,422.4Q1971.6,430.9 1964.9,437.4"/><path d="M1868.9,1107.4Q1862.7,1104.5 1858.1,1099.3"/><path d="M1976.8,591.2Q1994.2,590.5 2010.6,584.6"/><path d="M1928.2,403.0Q1921.3,403.6 1914.4,402.8"/><path d="M1644.1,851.4Q1635.0,843.2 1624.7,836.7"/><path d="M1677.6,976.6Q1665.8,969.2 1653.8,962.0"/><path d="M1683.7,939.8Q1686.7,954.3 1692.0,968.1"/><path d="M1873.5,1084.8Q1866.5,1092.7 1858.1,1099.3"/><path d="M1654.0,912.8Q1662.6,921.6 1671.7,929.9"/><path d="M1656.9,1054.7Q1666.7,1044.6 1679.0,1038.0"/><path d="M1552.7,1096.3Q1547.2,1101.5 1541.4,1106.3"/><path d="M1669.2,1024.4Q1666.7,1016.7 1666.1,1008.6"/><path d="M2005.8,867.9Q1997.3,870.9 1989.0,874.4"/><path d="M1922.2,385.8Q1915.7,390.0 1908.4,392.1"/><path d="M1923.7,839.5Q1918.1,845.3 1910.5,848.2"/><path d="M1608.5,1089.5Q1599.1,1096.0 1591.0,1104.1"/><path d="M1778.5,858.2Q1781.9,839.1 1792.9,823.1"/><path d="M1503.4,780.1Q1508.9,782.0 1514.5,782.8"/><path d="M1869.7,914.7Q1868.4,906.6 1868.9,898.4"/><path d="M1995.3,457.1Q1991.0,445.5 1988.0,433.4"/><path d="M1778.0,771.9Q1770.6,778.4 1765.1,786.5"/><path d="M2020.9,457.1Q2011.0,467.9 2005.7,481.4"/><path d="M1599.7,125.6Q1600.8,116.0 1606.1,107.9"/><path d="M1890.3,934.4Q1888.9,918.7 1893.5,903.6"/><path d="M1958.7,647.4Q1962.5,642.1 1966.8,637.2"/><path d="M1825.2,196.0Q1818.8,203.7 1812.5,211.6"/><path d="M1808.9,457.3Q1814.3,450.6 1821.9,446.9"/><path d="M1710.8,996.6Q1711.6,982.6 1710.2,968.6"/><path d="M1810.0,1064.7Q1798.0,1067.7 1785.6,1068.4"/><path d="M1585.6,784.6Q1575.2,773.8 1565.8,762.2"/><path d="M1739.7,142.0Q1732.2,163.0 1728.1,184.9"/><path d="M1459.8,164.6Q1475.5,157.0 1491.9,151.1"/><path d="M1899.1,679.7Q1891.5,687.0 1882.7,692.9"/><path d="M1904.6,1037.8Q1902.8,1022.7 1895.5,1009.3"/><path d="M1877.2,176.9Q1871.2,173.3 1866.1,168.6"/><path d="M1846.5,961.8Q1834.9,962.2 1823.5,964.6"/><path d="M1937.3,417.9Q1941.3,410.4 1946.9,404.1"/><path d="M1810.0,190.0Q1804.5,192.3 1799.5,195.6"/><path d="M1938.2,375.5Q1927.9,374.5 1917.6,373.6"/><path d="M1995.3,457.1Q1988.2,463.5 1979.7,467.9"/><path d="M1713.1,73.4Q1725.1,70.4 1737.4,70.4"/><path d="M1916.7,164.8Q1903.8,166.0 1891.0,163.5"/><path d="M1894.2,598.0Q1886.5,593.1 1880.2,586.4"/><path d="M1518.7,1043.3Q1520.8,1055.1 1523.9,1066.6"/><path d="M1714.8,1064.9Q1718.9,1070.9 1723.9,1076.2"/><path d="M1838.2,1020.3Q1844.4,1006.9 1849.7,993.2"/><path d="M1562.6,109.4Q1552.9,120.0 1541.9,129.0"/><path d="M1548.1,1003.6Q1560.6,996.0 1571.2,985.7"/><path d="M1818.9,773.2Q1817.1,779.0 1815.7,784.8"/><path d="M1957.3,380.9Q1950.8,391.9 1946.9,404.1"/><path d="M1515.0,834.8Q1520.4,827.7 1526.6,821.4"/><path d="M1583.9,1012.8Q1581.1,1020.7 1579.8,1029.0"/><path d="M1495.6,1025.9Q1503.5,1026.8 1511.4,1026.9"/><path d="M1767.3,849.1Q1764.9,838.4 1764.7,827.5"/><path d="M1794.4,954.0Q1800.8,958.6 1807.1,963.2"/><path d="M1890.9,711.7Q1890.5,721.8 1889.1,731.9"/><path d="M1852.8,513.0Q1848.8,502.8 1845.5,492.3"/><path d="M1964.1,695.1Q1975.6,704.3 1982.3,717.5"/><path d="M1905.6,216.0Q1896.0,218.2 1887.9,223.7"/><path d="M1842.9,560.6Q1849.1,555.0 1854.3,548.5"/><path d="M1912.4,588.1Q1896.3,587.2 1880.2,586.4"/><path d="M2022.7,847.6Q2011.3,847.6 2000.5,844.0"/><path d="M1642.8,989.3Q1635.8,997.9 1632.5,1008.4"/><path d="M1876.7,725.8Q1873.5,717.5 1868.1,710.4"/><path d="M1818.0,93.2Q1819.3,107.6 1820.2,122.1"/><path d="M1803.8,1020.0Q1805.7,1031.1 1810.7,1041.2"/><path d="M1799.4,1006.3Q1806.8,994.7 1815.3,983.8"/><path d="M1913.6,685.8Q1919.4,681.6 1926.1,679.2"/><path d="M1810.5,166.0Q1798.1,168.7 1786.4,173.6"/><path d="M1868.9,494.4Q1874.5,484.1 1883.4,476.5"/><path d="M1559.0,1009.6Q1564.4,1012.1 1569.6,1015.1"/><path d="M1918.1,729.7Q1903.6,731.1 1889.1,731.9"/><path d="M1939.0,679.6Q1944.9,672.9 1952.4,667.9"/><path d="M1738.0,1087.6Q1729.9,1083.2 1723.9,1076.2"/><path d="M1672.5,755.2Q1659.5,752.7 1646.3,753.8"/><path d="M1976.8,857.3Q1986.1,856.8 1995.3,857.2"/><path d="M1503.4,780.1Q1502.5,792.6 1505.3,804.9"/><path d="M1540.5,1060.6Q1540.2,1051.0 1541.2,1041.3"/><path d="M1828.6,478.8Q1827.8,488.5 1828.6,498.1"/><path d="M1909.8,970.6Q1906.7,962.1 1903.7,953.5"/><path d="M1566.4,878.9Q1565.7,872.0 1564.6,865.2"/><path d="M1925.8,695.2Q1927.3,704.5 1928.5,714.0"/><path d="M1958.7,647.4Q1957.2,658.1 1952.4,667.9"/><path d="M1957.1,767.4Q1960.3,751.6 1960.3,735.5"/><path d="M1750.9,200.2Q1762.4,201.8 1773.1,206.4"/><path d="M2010.0,788.1Q2002.7,789.1 1995.3,789.3"/><path d="M1906.7,548.1Q1905.9,556.3 1904.0,564.3"/><path d="M1836.9,1038.8Q1823.9,1041.4 1810.7,1041.2"/><path d="M1986.5,729.3Q1984.3,723.5 1982.3,717.5"/><path d="M1922.2,385.8Q1917.3,393.9 1914.4,402.8"/><path d="M1986.5,729.3Q1972.8,729.9 1960.3,735.5"/><path d="M1995.3,789.3Q1996.9,783.4 2000.7,778.6"/><path d="M1923.7,839.5Q1927.3,821.7 1924.6,803.8"/><path d="M1803.8,1020.0Q1795.7,1009.7 1785.1,1002.0"/><path d="M1921.2,462.9Q1924.1,476.8 1929.7,489.9"/><path d="M1994.0,260.3Q1992.6,275.5 1990.6,290.7"/><path d="M1526.8,186.8Q1533.8,176.1 1543.3,167.6"/><path d="M1857.9,438.0Q1864.6,440.3 1870.6,444.1"/><path d="M1903.9,232.4Q1896.7,226.6 1887.9,223.7"/><path d="M1957.1,767.4Q1958.1,775.3 1960.4,783.0"/><path d="M1705.9,1049.2Q1703.0,1056.6 1702.6,1064.7"/><path d="M1933.6,438.9Q1933.1,428.0 1937.3,417.9"/><path d="M1575.0,870.2Q1575.1,877.0 1576.4,883.6"/><path d="M1814.3,865.4Q1795.7,865.3 1778.5,858.2"/><path d="M1743.0,450.3Q1737.5,459.8 1731.5,468.9"/><path d="M1711.1,95.8Q1715.7,90.2 1721.5,85.9"/><path d="M1927.2,558.8Q1931.9,564.4 1937.9,568.7"/><path d="M1802.4,258.9Q1812.7,256.0 1823.2,257.8"/><path d="M1807.4,114.0Q1793.1,122.1 1783.4,135.3"/><path d="M1683.6,1078.6Q1683.3,1072.4 1684.2,1066.2"/><path d="M1705.9,1049.2Q1717.5,1050.3 1727.5,1056.2"/><path d="M1904.6,1037.8Q1887.5,1035.9 1872.2,1028.3"/><path d="M1703.8,921.9Q1700.3,932.3 1700.5,943.3"/><path d="M1721.4,1026.7Q1722.1,1013.3 1728.1,1001.4"/><path d="M1743.5,828.7Q1731.9,825.6 1722.5,818.3"/><path d="M1754.4,899.3Q1761.5,908.0 1766.7,918.0"/><path d="M1945.6,776.8Q1940.1,771.7 1935.6,765.8"/><path d="M1804.4,224.6Q1807.6,217.5 1812.5,211.6"/><path d="M1669.2,796.2Q1654.1,791.3 1641.1,782.2"/><path d="M1921.2,462.9Q1915.5,450.0 1904.9,440.9"/><path d="M1808.9,457.3Q1805.7,468.6 1803.1,480.0"/><path d="M1964.1,695.1Q1958.2,688.9 1953.7,681.8"/><path d="M1866.9,670.7Q1863.0,690.7 1868.1,710.4"/><path d="M1526.3,853.0Q1519.7,861.5 1515.3,871.3"/><path d="M1868.9,898.4Q1863.3,891.8 1857.1,885.8"/><path d="M1922.2,385.8Q1920.5,379.5 1917.6,373.6"/><path d="M1835.7,455.8Q1830.8,460.3 1825.2,463.8"/><path d="M1560.3,919.8Q1563.4,930.8 1561.3,941.9"/><path d="M1599.1,828.6Q1604.1,819.7 1605.4,809.6"/><path d="M1909.0,640.0Q1895.8,648.9 1882.1,657.0"/><path d="M1518.7,1043.3Q1530.0,1042.9 1541.2,1041.3"/><path d="M1924.6,803.8Q1933.4,800.3 1941.5,795.3"/><path d="M1849.8,908.0Q1852.9,896.7 1857.1,885.8"/><path d="M1857.4,412.1Q1855.1,406.7 1854.9,400.7"/><path d="M1970.9,132.5Q1962.2,124.6 1955.4,115.0"/><path d="M1730.0,422.7Q1730.2,437.7 1724.3,451.6"/><path d="M1979.1,844.8Q1988.0,849.9 1995.3,857.2"/><path d="M1605.5,759.3Q1618.4,756.8 1631.6,757.6"/><path d="M1706.0,848.8Q1717.2,846.7 1728.5,845.4"/><path d="M1723.0,297.6Q1733.8,297.6 1744.2,295.2"/><path d="M1522.7,795.7Q1525.0,802.6 1528.8,808.8"/><path d="M1569.5,157.4Q1556.1,154.1 1542.4,154.8"/><path d="M1986.5,729.3Q1988.8,734.6 1988.5,740.3"/><path d="M1834.2,354.4Q1843.3,364.1 1853.2,373.2"/><path d="M1924.0,918.8Q1917.8,910.8 1910.2,904.1"/><path d="M1638.5,1026.3Q1628.0,1019.4 1616.4,1014.9"/><path d="M2027.7,564.5Q2029.0,576.7 2028.7,588.9"/><path d="M1892.3,870.7Q1891.8,859.7 1895.5,849.3"/><path d="M1503.4,780.1Q1525.9,771.8 1542.3,754.4"/><path d="M1694.4,1093.0Q1689.5,1085.4 1683.6,1078.6"/><path d="M1901.1,814.0Q1897.1,806.4 1895.4,798.1"/><path d="M1527.8,877.2Q1538.6,879.7 1549.5,877.4"/><path d="M1926.6,873.7Q1920.5,883.3 1914.6,892.9"/><path d="M1905.6,216.0Q1898.1,214.3 1891.5,210.4"/><path d="M1527.7,958.0Q1535.8,955.9 1543.1,951.8"/><path d="M1866.9,670.7Q1872.3,683.6 1882.7,692.9"/><path d="M1751.6,988.7Q1761.5,990.2 1771.2,987.8"/><path d="M1519.1,934.9Q1527.8,931.3 1535.4,925.8"/><path d="M1818.0,93.2Q1828.1,103.4 1841.3,109.4"/><path d="M1877.2,176.9Q1877.4,168.1 1879.7,159.6"/><path d="M1952.5,794.0Q1949.0,785.4 1945.6,776.8"/><path d="M1786.4,173.6Q1786.9,162.9 1784.7,152.5"/><path d="M1750.7,272.8Q1737.6,279.8 1723.1,283.4"/><path d="M1832.8,126.2Q1837.7,118.1 1841.3,109.4"/><path d="M1638.9,1064.4Q1639.0,1053.3 1644.1,1043.5"/><path d="M1969.9,159.6Q1974.2,147.1 1982.3,136.8"/><path d="M1909.0,640.0Q1907.9,647.1 1906.4,654.2"/><path d="M1889.4,1067.9Q1883.0,1089.6 1868.9,1107.4"/><path d="M1835.7,455.8Q1846.6,466.8 1855.8,479.3"/><path d="M1777.2,238.6Q1768.8,245.0 1758.7,248.0"/><path d="M1876.1,1052.5Q1865.3,1052.8 1854.5,1053.1"/><path d="M2021.8,372.3Q2027.8,380.4 2034.5,388.0"/><path d="M1543.3,167.6Q1543.2,161.1 1542.4,154.8"/><path d="M1952.5,794.0Q1947.1,795.6 1941.5,795.3"/><path d="M1782.2,428.7Q1777.8,439.5 1773.6,450.4"/><path d="M1567.8,815.3Q1568.3,827.9 1566.1,840.3"/><path d="M1996.2,412.4Q1990.1,422.1 1988.0,433.4"/><path d="M1960.3,396.3Q1964.4,387.5 1968.9,379.0"/><path d="M1897.2,422.1Q1882.9,431.9 1870.6,444.1"/><path d="M1650.2,976.3Q1652.7,969.3 1653.8,962.0"/><path d="M1777.1,115.4Q1780.3,125.3 1783.4,135.3"/><path d="M1490.8,123.9Q1504.3,117.6 1516.0,108.5"/><path d="M1616.7,966.2Q1627.3,963.6 1638.0,965.6"/><path d="M1990.6,290.7Q1998.9,284.3 2004.0,275.2"/><path d="M1769.3,482.5Q1767.9,469.7 1762.8,457.9"/><path d="M1504.8,793.2Q1505.0,786.6 1503.4,780.1"/><path d="M1847.9,259.7Q1842.3,250.7 1840.3,240.2"/><path d="M1952.5,794.0Q1955.7,804.7 1956.5,815.8"/><path d="M1597.4,918.8Q1586.9,925.8 1577.2,934.0"/><path d="M1862.2,90.3Q1860.5,81.5 1862.7,72.9"/><path d="M1739.7,142.0Q1749.5,155.3 1757.9,169.5"/><path d="M1773.3,1010.5Q1779.8,1022.9 1789.0,1033.3"/><path d="M2010.4,688.4Q2009.8,695.2 2007.3,701.6"/><path d="M1501.5,139.5Q1496.0,144.7 1491.9,151.1"/><path d="M1903.7,953.5Q1890.4,955.9 1878.8,963.0"/><path d="M1887.0,88.0Q1888.7,82.2 1892.0,77.2"/><path d="M1580.9,814.4Q1585.6,799.6 1596.3,788.3"/><path d="M1811.4,150.6Q1817.7,157.5 1823.2,165.1"/><path d="M1575.2,948.6Q1577.5,941.4 1577.2,934.0"/><path d="M1558.3,137.3Q1563.8,139.7 1569.4,141.7"/><path d="M1999.6,728.5Q1992.7,733.2 1988.5,740.3"/><path d="M1579.9,163.5Q1571.4,167.1 1562.2,168.8"/><path d="M1778.9,1045.2Q1784.3,1039.6 1789.0,1033.3"/><path d="M1937.9,568.7Q1944.4,584.0 1946.2,600.5"/><path d="M1623.4,71.0Q1617.1,76.6 1609.0,79.1"/><path d="M1926.6,873.7Q1933.9,878.6 1939.6,885.3"/><path d="M1834.5,188.9Q1831.5,175.7 1823.2,165.1"/><path d="M1771.5,1097.0Q1765.1,1087.7 1758.0,1078.9"/><path d="M1984.0,531.0Q1983.4,523.9 1981.1,517.2"/><path d="M1887.0,498.4Q1892.2,506.2 1898.7,513.0"/><path d="M2035.9,718.2Q2033.2,731.4 2036.2,744.6"/><path d="M1916.7,164.8Q1925.3,165.6 1933.9,165.0"/><path d="M1893.2,405.7Q1894.5,398.6 1896.6,391.6"/><path d="M1666.1,1008.6Q1682.0,1007.1 1698.0,1008.0"/><path d="M1739.3,918.5Q1744.6,914.8 1749.3,910.4"/><path d="M1523.1,164.3Q1532.2,158.3 1542.4,154.8"/><path d="M2017.1,285.7Q2004.3,293.4 1992.3,302.3"/><path d="M1755.8,924.2Q1761.3,921.2 1766.7,918.0"/><path d="M1775.8,70.2Q1756.6,74.1 1737.4,70.4"/><path d="M1923.1,152.9Q1923.4,142.2 1919.1,132.4"/><path d="M1700.5,943.3Q1697.5,956.2 1692.0,968.1"/><path d="M1716.8,938.0Q1722.9,933.5 1727.5,927.7"/><path d="M1877.5,409.9Q1867.4,410.4 1857.4,412.1"/><path d="M1759.6,810.2Q1748.5,806.0 1740.3,797.4"/><path d="M2027.4,753.6Q2032.5,749.7 2036.2,744.6"/><path d="M2033.3,307.3Q2032.1,300.6 2032.9,293.8"/><path d="M1621.9,802.8Q1629.8,800.7 1637.6,798.0"/><path d="M1617.2,884.2Q1604.9,892.9 1595.5,904.6"/><path d="M1937.4,704.4Q1941.0,692.2 1939.0,679.6"/><path d="M1738.0,1065.2Q1732.3,1061.3 1727.5,1056.2"/><path d="M1940.9,479.2Q1956.9,484.0 1970.4,494.0"/><path d="M1569.5,157.4Q1574.3,161.3 1579.9,163.5"/><path d="M1766.7,918.0Q1773.8,917.7 1780.8,917.3"/><path d="M2008.6,369.0Q2014.0,362.5 2021.0,357.6"/><path d="M1962.0,900.5Q1953.5,903.7 1945.7,908.3"/><path d="M1694.4,1093.0Q1704.3,1089.1 1713.5,1083.6"/><path d="M2008.6,369.0Q2008.4,358.9 2012.4,349.7"/><path d="M1773.8,998.5Q1762.5,998.7 1751.9,1002.3"/><path d="M1605.4,809.6Q1601.0,798.9 1596.3,788.3"/><path d="M1833.7,83.1Q1824.4,80.5 1816.1,75.7"/><path d="M1519.1,934.9Q1527.2,937.6 1533.7,943.0"/><path d="M1977.0,371.4Q1973.3,375.6 1968.9,379.0"/><path d="M1536.3,1083.1Q1548.0,1086.9 1560.4,1086.9"/><path d="M1958.7,705.3Q1960.7,699.8 1964.1,695.1"/><path d="M1750.9,200.2Q1754.4,194.2 1759.4,189.5"/><path d="M2022.5,639.0Q2017.7,631.4 2015.0,622.9"/><path d="M1605.4,809.6Q1610.6,820.0 1610.6,831.5"/><path d="M1548.1,1003.6Q1561.2,1003.4 1573.6,998.8"/><path d="M1838.6,808.8Q1849.9,817.9 1860.0,828.3"/><path d="M2022.5,639.0Q2029.1,644.7 2036.7,649.1"/><path d="M1720.1,255.0Q1724.0,260.9 1727.0,267.4"/><path d="M1680.7,988.0Q1688.3,979.2 1692.0,968.1"/><path d="M1967.1,452.4Q1965.0,445.0 1964.9,437.4"/><path d="M2014.4,655.6Q2009.6,663.4 2003.1,670.0"/><path d="M1876.9,553.9Q1865.6,551.2 1854.3,548.5"/><path d="M1916.5,424.5Q1913.4,413.9 1914.4,402.8"/><path d="M1901.1,814.0Q1903.5,825.9 1909.2,836.6"/><path d="M1862.7,266.7Q1854.9,269.5 1847.3,272.9"/><path d="M1977.0,371.4Q1987.5,370.1 1996.3,364.2"/><path d="M1790.0,797.7Q1774.8,804.1 1759.6,810.2"/><path d="M1879.9,793.4Q1875.2,790.0 1870.3,786.7"/><path d="M1887.0,88.0Q1876.3,78.2 1862.7,72.9"/><path d="M1855.8,479.3Q1869.3,475.4 1883.4,476.5"/><path d="M1625.9,821.4Q1633.6,826.2 1640.0,832.8"/><path d="M1807.1,963.2Q1808.8,974.5 1815.3,983.8"/><path d="M1880.3,753.8Q1890.1,750.0 1898.3,743.6"/><path d="M2024.8,340.6Q2023.6,334.5 2022.2,328.4"/><path d="M1876.1,1052.5Q1865.9,1058.1 1858.4,1067.1"/><path d="M1837.1,791.1Q1834.1,781.5 1831.3,772.0"/><path d="M1875.7,386.6Q1871.2,380.1 1864.9,375.3"/><path d="M1996.2,412.4Q1998.9,418.0 2000.0,424.1"/><path d="M1750.9,472.7Q1748.4,466.8 1747.1,460.6"/><path d="M1924.9,599.1Q1935.5,601.2 1946.2,600.5"/><path d="M1558.3,137.3Q1561.3,123.5 1562.6,109.4"/><path d="M1580.9,814.4Q1579.6,829.5 1579.9,844.6"/><path d="M2010.6,584.6Q2019.3,588.0 2028.7,588.9"/><path d="M1754.0,1033.7Q1753.9,1018.0 1751.9,1002.3"/><path d="M1540.5,768.8Q1552.4,762.6 1565.8,762.2"/><path d="M1962.0,900.5Q1947.3,914.1 1939.1,932.4"/><path d="M1698.5,193.2Q1712.8,187.3 1728.1,184.9"/><path d="M1888.1,175.4Q1893.4,180.6 1897.7,186.5"/><path d="M1904.6,614.2Q1895.8,619.0 1889.8,627.2"/><path d="M1560.3,86.0Q1578.5,89.2 1596.7,92.7"/><path d="M1566.4,878.9Q1571.5,875.4 1575.0,870.2"/><path d="M1655.4,892.6Q1668.4,894.3 1681.3,892.6"/><path d="M1860.0,586.0Q1867.4,591.9 1873.3,599.3"/><path d="M2014.8,802.8Q2005.2,795.9 1995.3,789.3"/><path d="M1803.1,480.0Q1793.1,483.0 1782.8,483.3"/><path d="M1582.8,1043.0Q1581.3,1036.0 1579.8,1029.0"/><path d="M1562.2,168.8Q1552.7,168.4 1543.3,167.6"/><path d="M1930.5,237.9Q1933.7,232.3 1938.4,228.0"/><path d="M1775.8,70.2Q1795.9,73.1 1816.1,75.7"/><path d="M1669.2,796.2Q1681.5,790.2 1690.5,780.0"/><path d="M1612.8,902.9Q1614.8,893.5 1617.2,884.2"/><path d="M1590.6,838.6Q1597.8,839.1 1604.4,842.2"/><path d="M1495.4,167.8Q1504.2,153.9 1515.8,142.3"/><path d="M1532.7,94.4Q1530.9,102.3 1527.5,109.8"/><path d="M1616.7,966.2Q1614.1,959.3 1610.6,952.8"/><path d="M1860.0,109.0Q1850.6,107.6 1841.3,109.4"/><path d="M1621.9,802.8Q1619.7,789.0 1613.1,776.8"/><path d="M2000.7,778.6Q1998.8,772.1 1995.1,766.4"/><path d="M1785.1,1002.0Q1793.7,998.0 1799.7,990.7"/><path d="M2022.7,847.6Q2029.6,843.2 2036.7,839.4"/><path d="M1900.7,136.9Q1898.3,123.5 1890.7,112.3"/><path d="M2014.8,802.8Q2021.4,814.6 2024.1,827.9"/><path d="M1878.3,1004.5Q1871.0,1004.5 1863.9,1003.2"/><path d="M1599.1,828.6Q1595.6,821.7 1593.0,814.5"/><path d="M1918.8,550.3Q1912.9,558.9 1904.0,564.3"/><path d="M2021.8,372.3Q2021.4,365.0 2021.0,357.6"/><path d="M1844.9,949.1Q1835.8,945.0 1825.8,944.2"/><path d="M1870.6,444.1Q1866.3,435.2 1866.4,425.4"/><path d="M1690.9,911.8Q1680.2,908.9 1670.1,904.3"/><path d="M1854.2,788.5Q1862.1,778.3 1867.4,766.6"/><path d="M2019.2,302.6Q2026.0,298.1 2032.9,293.8"/><path d="M2019.8,250.1Q2026.0,258.7 2032.7,267.0"/><path d="M1995.3,789.3Q1989.5,797.4 1982.3,804.5"/><path d="M1750.7,272.8Q1759.5,265.6 1768.6,259.0"/><path d="M1744.6,1108.3Q1729.8,1105.1 1714.9,1101.5"/><path d="M1898.0,474.3Q1912.6,487.3 1919.9,505.4"/><path d="M1589.1,873.0Q1582.0,872.0 1575.0,870.2"/><path d="M2000.0,424.1Q2012.8,428.9 2022.1,439.0"/><path d="M1628.2,924.4Q1636.3,908.2 1637.8,890.0"/><path d="M1945.6,776.8Q1952.3,781.6 1960.4,783.0"/><path d="M1842.9,560.6Q1850.0,559.9 1857.1,560.0"/><path d="M1561.3,941.9Q1547.5,941.4 1533.7,943.0"/><path d="M1568.0,788.0Q1571.7,802.5 1580.9,814.4"/><path d="M1880.1,567.2Q1880.1,560.1 1876.9,553.9"/><path d="M1875.7,386.6Q1885.8,394.9 1893.2,405.7"/><path d="M1884.0,235.1Q1893.7,232.3 1903.9,232.4"/><path d="M1904.6,614.2Q1917.4,611.1 1930.6,612.6"/><path d="M1922.0,219.3Q1916.8,213.6 1913.3,206.7"/><path d="M1933.9,165.0Q1924.6,177.5 1912.6,187.4"/><path d="M1608.5,1089.5Q1620.6,1086.9 1632.8,1085.2"/><path d="M1734.3,779.4Q1739.2,787.7 1740.3,797.4"/><path d="M1723.0,297.6Q1721.5,290.5 1723.1,283.4"/><path d="M1912.4,588.1Q1913.6,578.5 1916.6,569.1"/><path d="M1677.6,976.6Q1679.4,982.2 1680.7,988.0"/><path d="M1890.7,112.3Q1897.1,105.6 1905.8,102.1"/><path d="M1954.3,537.1Q1958.9,521.2 1968.4,507.7"/><path d="M1745.3,967.4Q1751.3,971.0 1756.7,975.5"/><path d="M1659.0,840.6Q1649.7,836.2 1640.0,832.8"/><path d="M1722.5,818.3Q1732.8,809.0 1740.3,797.4"/><path d="M1810.7,1041.2Q1799.3,1038.8 1789.0,1033.3"/><path d="M1834.1,262.6Q1838.3,251.7 1840.3,240.2"/><path d="M1651.2,863.2Q1645.8,877.3 1637.8,890.0"/><path d="M1781.6,257.4Q1781.0,247.6 1777.2,238.6"/><path d="M1838.2,1020.3Q1847.3,1027.6 1854.3,1037.0"/><path d="M1834.4,535.2Q1842.9,544.0 1854.3,548.5"/><path d="M1954.3,537.1Q1947.6,518.4 1937.3,501.5"/><path d="M1773.6,450.4Q1785.4,448.0 1797.1,450.7"/><path d="M1884.0,235.1Q1887.1,229.8 1887.9,223.7"/><path d="M1789.4,882.5Q1782.6,871.0 1778.5,858.2"/><path d="M1634.7,810.7Q1637.5,804.6 1637.6,798.0"/><path d="M1944.9,713.0Q1942.3,718.4 1939.0,723.5"/><path d="M1644.7,943.0Q1650.6,951.9 1653.8,962.0"/><path d="M1560.4,1086.9Q1567.7,1085.0 1573.7,1080.4"/><path d="M1641.1,782.2Q1635.0,782.5 1629.0,783.8"/><path d="M1977.5,749.8Q1975.6,756.7 1972.0,763.0"/><path d="M1882.1,657.0Q1879.4,642.4 1873.9,628.6"/><path d="M1794.4,954.0Q1787.8,941.4 1786.1,927.2"/><path d="M2008.6,369.0Q2002.2,367.1 1996.3,364.2"/><path d="M1739.7,142.0Q1742.6,158.4 1744.5,174.9"/><path d="M1765.1,786.5Q1753.1,792.9 1740.3,797.4"/><path d="M1738.0,1065.2Q1730.2,1069.7 1723.9,1076.2"/><path d="M1680.7,988.0Q1688.3,998.9 1698.0,1008.0"/><path d="M1919.1,132.4Q1936.4,136.5 1952.1,144.8"/><path d="M1802.4,258.9Q1807.0,268.0 1814.8,274.6"/><path d="M1780.5,901.5Q1781.6,909.4 1780.8,917.3"/><path d="M1893.2,405.7Q1899.8,397.8 1908.4,392.1"/><path d="M2022.7,676.5Q2028.4,697.7 2035.9,718.2"/><path d="M1479.3,206.6Q1480.0,194.8 1482.1,183.2"/><path d="M1543.6,841.1Q1554.8,839.5 1566.1,840.3"/><path d="M1706.6,781.0Q1700.5,795.5 1694.4,810.0"/><path d="M1989.7,703.0Q1981.8,692.6 1975.8,681.1"/><path d="M1770.0,1085.4Q1764.4,1081.4 1758.0,1078.9"/><path d="M1696.5,871.3Q1709.0,871.1 1721.3,869.2"/><path d="M1876.1,1052.5Q1874.3,1062.6 1869.7,1071.7"/><path d="M2011.9,604.3Q2021.8,598.3 2028.7,588.9"/><path d="M1728.7,978.8Q1717.8,985.7 1710.8,996.6"/><path d="M1575.1,897.9Q1585.0,902.1 1595.5,904.6"/><path d="M1821.1,890.6Q1828.6,882.4 1838.5,877.4"/><path d="M1567.8,815.3Q1557.7,806.7 1544.9,803.0"/><path d="M1807.4,114.0Q1799.5,105.1 1795.8,93.8"/><path d="M1758.8,871.7Q1763.7,875.2 1766.8,880.4"/><path d="M1696.5,871.3Q1687.9,872.7 1679.3,873.9"/><path d="M1759.4,189.5Q1766.9,197.4 1773.1,206.4"/><path d="M1866.1,168.6Q1866.3,179.0 1862.5,188.6"/><path d="M1745.3,967.4Q1741.3,961.8 1735.8,957.7"/><path d="M1541.9,129.0Q1536.6,135.0 1529.5,138.3"/><path d="M1835.5,514.7Q1826.9,520.6 1820.2,528.6"/><path d="M1849.8,908.0Q1841.2,911.8 1834.0,917.8"/><path d="M1900.4,204.0Q1897.7,195.5 1897.7,186.5"/><path d="M1992.9,811.5Q1987.0,808.9 1982.3,804.5"/><path d="M1540.5,1060.6Q1542.6,1066.5 1544.6,1072.4"/><path d="M1960.3,396.3Q1953.0,399.1 1946.9,404.1"/><path d="M1812.7,1076.0Q1820.8,1075.0 1828.9,1075.2"/><path d="M1550.2,893.8Q1562.6,896.2 1575.1,897.9"/><path d="M1750.6,135.3Q1760.7,148.9 1772.2,161.4"/><path d="M1621.9,802.8Q1613.9,806.9 1605.4,809.6"/><path d="M1904.9,440.9Q1901.2,451.1 1894.6,459.6"/><path d="M1569.6,1015.1Q1569.1,1021.9 1568.6,1028.7"/><path d="M1658.9,950.2Q1651.0,948.2 1644.7,943.0"/><path d="M1690.5,780.0Q1688.4,792.9 1682.7,804.8"/><path d="M1821.1,890.6Q1825.7,896.0 1830.1,901.6"/><path d="M1582.3,1097.0Q1579.9,1087.8 1573.7,1080.4"/><path d="M1743.0,946.0Q1733.1,953.0 1721.4,956.0"/><path d="M1890.7,112.3Q1884.0,117.6 1875.9,120.2"/><path d="M1541.7,860.9Q1543.9,869.9 1549.5,877.4"/><path d="M1844.3,407.3Q1850.8,410.0 1857.4,412.1"/><path d="M1747.1,460.6Q1750.8,453.6 1755.4,447.0"/><path d="M1960.3,735.5Q1969.4,747.8 1972.0,763.0"/><path d="M1923.4,198.0Q1917.9,201.9 1913.3,206.7"/><path d="M1762.8,457.9Q1758.9,452.6 1755.4,447.0"/><path d="M1773.8,998.5Q1779.4,1000.5 1785.1,1002.0"/><path d="M1890.9,711.7Q1883.7,718.6 1876.7,725.8"/><path d="M1961.5,238.6Q1952.2,247.5 1941.3,254.3"/><path d="M1945.7,908.3Q1943.1,914.7 1943.0,921.7"/><path d="M1803.8,1020.0Q1796.5,1026.8 1789.0,1033.3"/><path d="M1871.6,871.3Q1864.3,865.8 1855.3,863.8"/><path d="M1527.7,958.0Q1523.4,967.3 1518.9,976.5"/><path d="M1917.6,628.6Q1918.1,639.4 1918.2,650.4"/><path d="M1825.8,1088.2Q1825.8,1081.3 1828.9,1075.2"/><path d="M1759.5,860.4Q1763.4,854.7 1767.3,849.1"/><path d="M2005.8,867.9Q2003.3,873.7 1999.9,879.0"/><path d="M1910.2,904.1Q1911.9,898.3 1914.6,892.9"/><path d="M1954.3,537.1Q1958.0,556.4 1954.3,575.8"/><path d="M1880.3,753.8Q1870.9,747.5 1863.5,738.9"/><path d="M1735.0,89.5Q1737.2,80.0 1737.4,70.4"/><path d="M1772.9,1068.0Q1779.2,1069.0 1785.6,1068.4"/><path d="M2018.1,769.6Q2024.5,779.2 2034.1,785.5"/><path d="M1903.9,232.4Q1909.2,235.1 1915.2,235.6"/><path d="M1952.4,667.9Q1962.1,659.6 1973.9,654.8"/><path d="M1877.5,409.9Q1873.8,419.0 1866.4,425.4"/><path d="M1886.1,973.2Q1883.5,967.3 1878.8,963.0"/><path d="M1893.2,405.7Q1903.7,403.9 1914.4,402.8"/><path d="M1694.8,1039.6Q1691.4,1029.9 1684.4,1022.2"/><path d="M1873.5,1084.8Q1867.5,1074.6 1858.4,1067.1"/><path d="M1854.5,198.0Q1865.9,204.0 1877.2,210.3"/><path d="M1568.0,788.0Q1576.9,786.6 1585.6,784.6"/><path d="M1756.7,975.5Q1761.1,970.4 1767.2,967.7"/><path d="M1548.8,1026.7Q1550.4,1032.7 1553.9,1037.9"/><path d="M1935.6,765.8Q1941.3,755.6 1942.4,744.0"/><path d="M1757.9,169.5Q1764.1,177.3 1772.8,182.2"/><path d="M1541.7,860.9Q1544.5,851.2 1543.6,841.1"/><path d="M1844.9,949.1Q1855.9,952.4 1867.3,953.7"/><path d="M1822.6,218.7Q1828.2,223.4 1834.4,227.3"/><path d="M1743.0,946.0Q1739.0,951.6 1735.8,957.7"/><path d="M2010.6,584.6Q2011.4,594.5 2011.9,604.3"/><path d="M1747.6,78.6Q1743.5,73.3 1737.4,70.4"/><path d="M1785.6,1068.4Q1786.2,1078.2 1788.1,1087.7"/><path d="M1807.2,796.5Q1805.4,802.3 1802.3,807.6"/><path d="M1906.7,548.1Q1912.8,548.7 1918.8,550.3"/><path d="M1563.0,851.2Q1571.0,846.7 1579.9,844.6"/><path d="M1560.3,86.0Q1547.0,81.2 1536.0,72.2"/><path d="M1629.6,989.6Q1613.3,986.4 1597.9,980.3"/><path d="M1982.3,136.8Q1973.2,141.4 1963.1,142.6"/><path d="M1806.3,885.6Q1814.0,887.2 1821.1,890.6"/><path d="M1588.4,955.1Q1577.8,962.1 1569.1,971.4"/><path d="M1945.7,908.3Q1944.9,896.2 1939.6,885.3"/><path d="M1917.4,749.5Q1929.6,745.4 1942.4,744.0"/><path d="M1641.1,782.2Q1649.8,780.9 1657.3,776.3"/><path d="M1803.8,1020.0Q1809.3,1022.0 1815.1,1023.1"/><path d="M1929.7,489.9Q1934.8,484.0 1940.9,479.2"/><path d="M2005.8,867.9Q2013.2,872.8 2020.6,877.6"/><path d="M1565.8,762.2Q1554.2,757.9 1542.3,754.4"/><path d="M1590.6,838.6Q1594.1,833.0 1599.1,828.6"/><path d="M2034.0,820.5Q2036.8,829.7 2036.7,839.4"/><path d="M1793.0,224.5Q1795.9,210.0 1799.5,195.6"/><path d="M1937.3,501.5Q1947.7,499.1 1958.4,499.9"/><path d="M1807.2,796.5Q1822.8,803.0 1838.6,808.8"/><path d="M1818.0,93.2Q1811.3,89.9 1805.2,85.6"/><path d="M1885.4,671.8Q1881.8,682.0 1882.7,692.9"/><path d="M1743.0,450.3Q1750.8,441.7 1759.9,434.3"/><path d="M2021.9,481.7Q2021.5,469.4 2020.9,457.1"/><path d="M1810.5,166.0Q1796.3,161.6 1784.7,152.5"/><path d="M1799.4,1006.3Q1800.0,998.5 1799.7,990.7"/><path d="M1743.5,828.7Q1732.8,831.5 1721.9,829.7"/><path d="M1619.3,935.6Q1627.8,935.3 1636.3,934.6"/><path d="M1596.7,92.7Q1587.9,101.2 1578.3,108.9"/><path d="M1908.4,392.1Q1912.9,382.8 1917.6,373.6"/><path d="M1560.3,919.8Q1556.5,906.3 1550.2,893.8"/><path d="M2028.9,468.3Q2024.7,462.9 2020.9,457.1"/><path d="M1694.8,1039.6Q1695.3,1047.5 1693.3,1055.1"/><path d="M1867.0,157.7Q1851.8,159.8 1837.0,163.8"/><path d="M1610.6,831.5Q1607.2,836.6 1604.4,842.2"/><path d="M1590.6,838.6Q1598.0,847.6 1603.7,857.9"/><path d="M1878.8,963.0Q1877.6,971.9 1876.9,981.0"/><path d="M1976.8,857.3Q1968.2,853.4 1958.7,853.7"/><path d="M2011.9,604.3Q2011.7,613.9 2015.0,622.9"/><path d="M2024.8,340.6Q2016.0,335.0 2009.1,327.1"/><path d="M1785.6,1068.4Q1798.9,1073.0 1812.7,1076.0"/><path d="M1896.6,391.6Q1902.5,391.3 1908.4,392.1"/><path d="M1889.1,731.9Q1893.7,737.7 1898.3,743.6"/><path d="M1989.0,874.4Q1992.9,866.1 1995.3,857.2"/><path d="M1973.2,562.2Q1984.1,564.3 1995.1,562.8"/><path d="M1623.0,1034.0Q1634.2,1037.4 1644.1,1043.5"/><path d="M1818.0,93.2Q1818.9,84.2 1816.1,75.7"/><path d="M1594.7,1036.8Q1590.1,1048.0 1588.8,1060.0"/><path d="M1933.6,438.9Q1941.1,445.7 1948.7,452.4"/><path d="M1612.8,902.9Q1614.4,910.4 1613.5,918.0"/><path d="M1924.1,519.5Q1925.9,526.7 1927.9,533.9"/><path d="M1605.5,759.3Q1593.3,760.5 1581.3,758.1"/><path d="M1541.7,860.9Q1553.6,860.7 1564.6,865.2"/><path d="M1876.9,553.9Q1866.8,556.1 1857.1,560.0"/><path d="M1958.7,853.7Q1968.8,861.4 1979.0,868.8"/><path d="M1949.4,371.2Q1943.4,372.3 1938.2,375.5"/><path d="M1658.5,812.8Q1655.7,826.7 1659.0,840.6"/><path d="M1823.2,165.1Q1819.8,172.7 1817.8,180.8"/><path d="M1638.5,1026.3Q1650.3,1014.4 1666.1,1008.6"/><path d="M1863.9,246.8Q1851.5,245.7 1840.3,240.2"/><path d="M1623.0,1034.0Q1629.9,1028.3 1638.5,1026.3"/><path d="M1694.8,1039.6Q1704.4,1026.5 1715.3,1014.4"/><path d="M1989.7,703.0Q1985.6,710.1 1982.3,717.5"/><path d="M1924.0,918.8Q1914.2,921.6 1904.4,924.1"/><path d="M1526.8,186.8Q1522.3,176.0 1523.1,164.3"/><path d="M1981.1,517.2Q1991.5,519.2 2000.8,524.1"/><path d="M1854.5,198.0Q1848.2,209.4 1845.7,222.2"/><path d="M1846.1,836.3Q1858.9,841.9 1872.8,843.0"/><path d="M1713.1,73.4Q1710.2,84.5 1711.1,95.8"/><path d="M1836.9,1038.8Q1845.5,1037.0 1854.3,1037.0"/><path d="M1992.2,656.7Q1986.5,650.7 1982.5,643.4"/><path d="M1534.5,781.7Q1524.5,783.0 1514.5,782.8"/><path d="M1563.0,851.2Q1564.8,845.8 1566.1,840.3"/><path d="M1784.7,80.9Q1785.8,93.4 1791.6,104.5"/><path d="M1711.1,95.8Q1710.8,102.2 1713.2,108.1"/><path d="M1909.8,970.6Q1915.5,960.9 1921.6,951.5"/><path d="M1581.3,758.1Q1584.6,771.2 1585.6,784.6"/><path d="M1868.9,1107.4Q1854.0,1108.9 1840.0,1103.6"/><path d="M1849.7,177.0Q1843.2,184.4 1834.5,188.9"/><path d="M1933.6,438.9Q1923.7,433.3 1916.5,424.5"/><path d="M1534.5,781.7Q1539.8,792.3 1544.9,803.0"/><path d="M1996.3,313.4Q1993.7,308.0 1992.3,302.3"/><path d="M2030.3,410.9Q2026.7,425.1 2022.1,439.0"/><path d="M1895.5,447.0Q1883.1,444.9 1870.6,444.1"/><path d="M1575.1,897.9Q1577.2,915.9 1577.2,934.0"/><path d="M1575.2,948.6Q1581.4,952.6 1588.4,955.1"/><path d="M1953.7,681.8Q1959.6,677.6 1965.1,672.8"/><path d="M1961.6,363.7Q1959.6,355.4 1958.1,346.9"/><path d="M1629.6,989.6Q1631.6,998.9 1632.5,1008.4"/><path d="M1979.1,844.8Q1968.5,848.4 1958.7,853.7"/><path d="M1814.8,274.6Q1804.2,275.6 1794.4,271.7"/><path d="M1625.9,821.4Q1630.7,816.4 1634.7,810.7"/><path d="M2014.4,655.6Q2003.2,654.6 1992.2,656.7"/><path d="M1591.6,990.1Q1581.8,992.8 1573.6,998.8"/><path d="M1527.8,877.2Q1533.3,867.8 1541.7,860.9"/><path d="M1984.0,531.0Q1979.9,538.1 1976.4,545.5"/><path d="M2027.6,524.2Q2031.2,539.3 2035.2,554.2"/><path d="M1740.2,854.7Q1731.2,862.5 1721.3,869.2"/><path d="M1900.6,152.2Q1896.5,158.4 1891.0,163.5"/><path d="M1916.5,424.5Q1921.6,413.4 1928.2,403.0"/><path d="M1905.6,216.0Q1909.3,211.3 1913.3,206.7"/><path d="M1758.7,248.0Q1765.0,252.3 1768.6,259.0"/><path d="M1814.2,1102.8Q1792.9,1099.1 1771.5,1097.0"/><path d="M1885.4,671.8Q1882.9,664.6 1882.1,657.0"/><path d="M1814.3,865.4Q1812.2,876.3 1806.3,885.6"/><path d="M1896.0,995.4Q1897.4,1002.4 1895.5,1009.3"/><path d="M1854.5,198.0Q1852.1,187.5 1849.7,177.0"/><path d="M1895.5,447.0Q1894.4,453.3 1894.6,459.6"/><path d="M1940.9,479.2Q1955.5,467.3 1967.1,452.4"/><path d="M2003.0,340.0Q2013.9,342.3 2024.8,340.6"/><path d="M1957.1,767.4Q1964.2,763.7 1972.0,763.0"/><path d="M1970.8,722.4Q1963.6,714.7 1958.7,705.3"/><path d="M1837.1,791.1Q1844.0,778.6 1852.5,767.1"/><path d="M1927.2,558.8Q1923.5,554.0 1918.8,550.3"/><path d="M2003.0,340.0Q2008.1,344.4 2012.4,349.7"/><path d="M1863.9,1003.2Q1855.2,1019.0 1854.3,1037.0"/><path d="M2022.2,328.4Q2015.7,327.1 2009.1,327.1"/><path d="M1889.1,731.9Q1882.5,729.7 1876.7,725.8"/><path d="M1862.7,72.9Q1877.5,73.9 1892.0,77.2"/><path d="M1740.2,854.7Q1750.8,847.8 1759.1,838.3"/><path d="M1995.3,789.3Q1993.5,777.9 1995.1,766.4"/><path d="M1826.9,546.2Q1822.3,537.9 1820.2,528.6"/><path d="M1878.7,950.9Q1879.0,941.4 1878.4,931.9"/><path d="M1961.6,363.7Q1960.3,372.5 1957.3,380.9"/><path d="M1992.7,473.4Q1992.1,480.9 1988.9,487.7"/><path d="M2013.7,740.4Q2018.3,754.6 2018.1,769.6"/><path d="M1878.3,1004.5Q1886.8,1012.7 1895.7,1020.6"/><path d="M1933.9,165.0Q1944.1,155.9 1952.1,144.8"/><path d="M1837.0,163.8Q1830.0,164.0 1823.2,165.1"/><path d="M2011.2,449.2Q2005.0,442.5 1998.9,435.5"/><path d="M1738.0,1087.6Q1741.7,1097.8 1744.6,1108.3"/><path d="M1904.4,924.1Q1898.0,914.4 1893.5,903.6"/><path d="M1751.0,123.6Q1742.1,113.6 1736.2,101.7"/><path d="M1965.2,830.7Q1954.3,830.2 1943.7,827.6"/><path d="M1563.0,851.2Q1563.9,858.2 1564.6,865.2"/><path d="M1924.9,599.1Q1927.0,606.1 1930.6,612.6"/><path d="M1731.5,468.9Q1740.9,472.2 1750.9,472.7"/><path d="M1850.1,930.5Q1838.4,927.0 1826.3,929.1"/><path d="M1765.1,786.5Q1776.7,787.2 1788.1,784.9"/><path d="M1973.8,356.0Q1965.5,352.1 1958.1,346.9"/><path d="M1562.6,109.4Q1570.5,111.0 1578.3,108.9"/><path d="M1834.5,188.9Q1839.6,196.6 1845.1,204.1"/><path d="M1507.6,191.8Q1500.5,180.3 1495.4,167.8"/><path d="M1533.7,943.0Q1534.6,934.4 1535.4,925.8"/><path d="M1544.6,1072.4Q1554.0,1078.0 1560.4,1086.9"/><path d="M1654.0,912.8Q1640.7,917.8 1628.2,924.4"/><path d="M1544.6,179.5Q1553.3,174.0 1562.2,168.8"/><path d="M1575.0,870.2Q1569.4,868.5 1564.6,865.2"/><path d="M1596.3,788.3Q1606.0,784.4 1613.1,776.8"/><path d="M1905.6,265.9Q1912.7,258.4 1920.6,251.6"/><path d="M1825.8,1088.2Q1819.8,1081.5 1812.7,1076.0"/><path d="M1508.3,73.0Q1497.3,78.9 1485.7,83.4"/><path d="M1970.9,132.5Q1976.4,135.2 1982.3,136.8"/><path d="M1803.0,504.7Q1816.4,503.7 1828.6,498.1"/><path d="M1958.7,647.4Q1947.4,638.8 1933.9,634.2"/><path d="M1826.9,546.2Q1835.1,553.1 1842.9,560.6"/><path d="M2005.8,867.9Q2003.0,856.0 2000.5,844.0"/><path d="M1855.3,863.8Q1840.6,857.2 1824.5,855.8"/><path d="M1579.8,1029.0Q1592.2,1029.4 1604.5,1027.6"/><path d="M1893.5,903.6Q1882.7,894.8 1876.4,882.4"/><path d="M1743.0,450.3Q1746.6,435.3 1745.0,419.9"/><path d="M1869.3,522.3Q1862.0,516.0 1852.8,513.0"/><path d="M1857.1,560.0Q1856.9,553.9 1854.3,548.5"/><path d="M1908.4,797.0Q1916.3,801.0 1924.6,803.8"/><path d="M1878.3,1004.5Q1886.6,1007.8 1895.5,1009.3"/><path d="M1697.8,284.8Q1687.0,295.0 1678.6,307.2"/><path d="M1784.7,80.9Q1795.4,81.2 1805.2,85.6"/><path d="M1852.5,767.1Q1855.4,777.6 1854.2,788.5"/><path d="M1888.7,881.2Q1890.1,892.6 1893.5,903.6"/><path d="M1739.7,841.6Q1749.8,842.0 1759.1,838.3"/><path d="M1961.6,363.7Q1956.0,368.2 1949.4,371.2"/><path d="M1625.6,772.4Q1615.0,766.7 1605.5,759.3"/><path d="M1869.3,522.3Q1874.3,515.9 1880.3,510.5"/><path d="M1608.5,1089.5Q1605.3,1084.9 1602.0,1080.5"/><path d="M1739.3,918.5Q1733.8,902.5 1724.4,888.5"/><path d="M1646.9,765.4Q1635.5,766.7 1625.6,772.4"/><path d="M1568.5,1070.3Q1571.8,1075.0 1573.7,1080.4"/><path d="M1846.2,888.4Q1848.9,898.0 1849.8,908.0"/><path d="M1553.9,1037.9Q1561.9,1034.3 1568.6,1028.7"/><path d="M1758.1,1051.0Q1768.8,1049.2 1778.9,1045.2"/><path d="M1523.1,164.3Q1521.4,171.3 1516.7,176.8"/><path d="M1916.5,424.5Q1908.7,431.3 1904.9,440.9"/><path d="M1646.3,753.8Q1626.0,757.3 1605.5,759.3"/><path d="M1508.3,73.0Q1499.1,71.3 1489.7,72.0"/><path d="M1976.8,857.3Q1977.4,850.9 1979.1,844.8"/><path d="M1769.3,482.5Q1777.2,471.7 1788.7,464.7"/><path d="M1556.4,1074.3Q1557.7,1080.8 1560.4,1086.9"/><path d="M1630.6,865.2Q1627.8,850.9 1624.7,836.7"/><path d="M1751.9,1002.3Q1759.7,1016.6 1766.6,1031.2"/><path d="M1930.5,237.9Q1922.8,236.6 1915.2,235.6"/><path d="M1646.9,765.4Q1651.8,771.1 1657.3,776.3"/><path d="M1907.9,780.2Q1902.6,774.9 1897.0,769.9"/><path d="M1973.2,562.2Q1975.5,554.0 1976.4,545.5"/><path d="M1610.8,143.6Q1601.8,150.1 1595.6,159.2"/><path d="M1784.7,80.9Q1800.3,77.6 1816.1,75.7"/><path d="M1660.0,988.2Q1663.6,998.2 1666.1,1008.6"/><path d="M1938.4,228.0Q1949.9,233.4 1961.5,238.6"/><path d="M1751.6,988.7Q1750.9,995.5 1751.9,1002.3"/><path d="M1834.1,262.6Q1828.3,261.1 1823.2,257.8"/><path d="M1807.1,963.2Q1802.9,976.8 1799.7,990.7"/><path d="M1917.4,858.9Q1906.7,853.6 1895.5,849.3"/><path d="M1580.9,814.4Q1586.9,813.8 1593.0,814.5"/><path d="M1826.3,929.1Q1830.3,923.5 1834.0,917.8"/><path d="M1847.3,272.9Q1831.2,276.8 1814.8,274.6"/><path d="M1518.9,976.5Q1529.7,971.6 1541.6,971.2"/><path d="M1910.5,848.2Q1902.9,847.0 1895.5,849.3"/><path d="M1969.9,159.6Q1962.0,150.9 1952.1,144.8"/><path d="M1900.7,136.9Q1911.1,146.0 1923.1,152.9"/><path d="M1868.9,494.4Q1864.0,485.5 1855.8,479.3"/><path d="M1561.3,941.9Q1557.7,951.4 1553.8,960.8"/><path d="M1733.1,1029.8Q1743.5,1032.0 1754.0,1033.7"/><path d="M1887.0,88.0Q1888.7,100.2 1890.7,112.3"/><path d="M1621.9,1001.8Q1612.7,1005.5 1603.6,1009.3"/><path d="M1660.0,988.2Q1651.3,987.7 1642.8,989.3"/><path d="M1835.0,1001.2Q1824.4,1011.5 1815.1,1023.1"/><path d="M1561.3,941.9Q1551.9,946.4 1543.1,951.8"/><path d="M1668.3,1081.9Q1663.9,1076.6 1661.8,1070.1"/><path d="M1507.5,996.8Q1506.8,975.4 1513.3,955.0"/><path d="M1938.2,375.5Q1931.4,382.5 1922.2,385.8"/><path d="M1975.7,881.2Q1981.6,876.2 1989.0,874.4"/><path d="M1731.5,468.9Q1738.4,463.1 1747.1,460.6"/><path d="M1659.0,840.6Q1652.0,846.6 1644.1,851.4"/><path d="M1566.4,878.9Q1569.3,889.1 1575.1,897.9"/><path d="M1743.0,946.0Q1743.5,956.8 1745.3,967.4"/><path d="M1605.5,759.3Q1594.6,771.2 1585.6,784.6"/><path d="M1561.3,941.9Q1568.8,937.0 1577.2,934.0"/><path d="M1921.2,462.9Q1907.9,461.0 1894.6,459.6"/><path d="M1728.1,1001.4Q1740.0,1002.3 1751.9,1002.3"/><path d="M1523.9,1066.6Q1517.7,1082.7 1516.5,1099.9"/><path d="M1657.3,776.3Q1661.3,771.3 1665.0,766.1"/><path d="M1566.4,878.9Q1571.7,880.6 1576.4,883.6"/><path d="M1703.8,921.9Q1693.4,930.4 1683.7,939.8"/><path d="M1658.5,812.8Q1663.6,804.4 1669.2,796.2"/><path d="M1840.2,1091.7Q1833.2,1084.4 1828.9,1075.2"/><path d="M1536.3,1083.1Q1531.7,1073.6 1523.9,1066.6"/><path d="M1960.3,396.3Q1960.8,404.2 1963.3,411.7"/><path d="M1972.0,763.0Q1964.7,772.1 1960.4,783.0"/><path d="M2004.0,275.2Q2009.6,272.0 2015.9,270.4"/><path d="M2002.0,610.0Q2007.1,607.4 2011.9,604.3"/><path d="M1690.9,911.8Q1693.1,904.2 1693.6,896.4"/><path d="M1533.0,1012.2Q1523.6,1021.6 1511.4,1026.9"/><path d="M1923.1,152.9Q1937.7,149.4 1952.1,144.8"/><path d="M1964.1,695.1Q1964.4,683.9 1965.1,672.8"/><path d="M1528.8,808.8Q1528.6,815.2 1526.6,821.4"/><path d="M1802.4,258.9Q1813.8,250.1 1824.4,240.4"/><path d="M1894.6,459.6Q1890.7,469.2 1883.4,476.5"/><path d="M1596.3,788.3Q1597.8,772.8 1605.5,759.3"/><path d="M1621.9,802.8Q1628.9,805.8 1634.7,810.7"/><path d="M1847.5,981.6Q1853.0,982.4 1858.2,984.3"/><path d="M2017.1,285.7Q2015.0,278.2 2015.9,270.4"/><path d="M1880.1,567.2Q1887.8,562.2 1893.8,555.4"/><path d="M1624.7,1055.8Q1618.3,1053.6 1611.6,1052.3"/><path d="M1940.5,873.8Q1930.2,864.5 1917.4,858.9"/><path d="M1922.0,219.3Q1920.0,228.0 1915.2,235.6"/><path d="M1917.4,749.5Q1919.2,739.6 1918.1,729.7"/><path d="M1559.0,1009.6Q1566.8,1004.9 1573.6,998.8"/><path d="M1909.8,970.6Q1901.2,989.4 1895.5,1009.3"/><path d="M1869.7,914.7Q1859.5,922.2 1850.1,930.5"/><path d="M1862.7,266.7Q1884.2,267.1 1905.6,265.9"/><path d="M1867.0,157.7Q1873.2,151.7 1879.5,145.9"/><path d="M1992.7,473.4Q1986.0,471.3 1979.7,467.9"/><path d="M1872.8,843.0Q1873.6,826.8 1869.8,811.1"/><path d="M1884.4,189.2Q1878.7,199.0 1877.2,210.3"/><path d="M1955.4,115.0Q1951.1,129.6 1952.1,144.8"/><path d="M1714.8,1064.9Q1714.6,1074.3 1713.5,1083.6"/><path d="M1680.8,774.0Q1685.7,776.9 1690.5,780.0"/><path d="M1696.5,871.3Q1692.2,883.5 1693.6,896.4"/><path d="M2012.4,349.7Q2001.8,351.5 1991.0,351.3"/><path d="M1930.7,260.3Q1926.4,255.1 1920.6,251.6"/><path d="M1877.2,176.9Q1870.7,183.9 1862.5,188.6"/><path d="M1536.0,72.2Q1539.9,77.9 1543.9,83.5"/><path d="M1890.9,711.7Q1892.4,695.0 1899.1,679.7"/><path d="M1803.1,480.0Q1801.9,492.4 1803.0,504.7"/><path d="M1832.8,126.2Q1847.0,126.1 1860.5,121.5"/><path d="M1656.9,1054.7Q1650.7,1048.9 1644.1,1043.5"/><path d="M1580.9,814.4Q1582.4,799.4 1585.6,784.6"/><path d="M2024.8,340.6Q2021.0,348.7 2021.0,357.6"/><path d="M2024.8,340.6Q2018.3,344.7 2012.4,349.7"/><path d="M1907.9,780.2Q1920.3,782.9 1931.5,789.0"/><path d="M1728.1,1001.4Q1720.2,1006.4 1715.3,1014.4"/><path d="M1921.2,462.9Q1909.5,468.3 1898.0,474.3"/><path d="M1973.2,562.2Q1980.3,569.3 1989.3,573.7"/><path d="M1658.5,812.8Q1669.7,817.2 1679.8,823.6"/><path d="M1740.9,880.2Q1740.4,867.4 1740.2,854.7"/><path d="M1677.6,976.6Q1667.5,980.4 1660.0,988.2"/><path d="M1940.5,873.8Q1948.0,862.3 1958.7,853.7"/><path d="M1782.2,428.7Q1763.5,424.7 1745.0,419.9"/><path d="M1879.7,159.6Q1872.2,163.1 1866.1,168.6"/><path d="M1877.2,176.9Q1882.7,176.3 1888.1,175.4"/><path d="M2005.7,510.9Q2016.1,518.3 2027.6,524.2"/><path d="M1644.1,851.4Q1639.9,842.6 1640.0,832.8"/><path d="M1887.0,498.4Q1878.1,495.7 1868.9,494.4"/><path d="M1594.7,1036.8Q1601.7,1046.2 1611.6,1052.3"/><path d="M1560.3,86.0Q1552.1,84.3 1543.9,83.5"/><path d="M1993.5,619.9Q1990.6,632.9 1982.5,643.4"/><path d="M1963.3,411.7Q1965.4,424.5 1964.9,437.4"/><path d="M1544.6,179.5Q1544.3,173.5 1543.3,167.6"/><path d="M2012.9,711.7Q2001.9,705.8 1989.7,703.0"/><path d="M1970.8,722.4Q1976.8,720.5 1982.3,717.5"/><path d="M1678.6,307.2Q1694.2,302.9 1709.2,296.9"/><path d="M1630.6,865.2Q1621.6,858.5 1614.7,849.6"/><path d="M1533.0,1012.2Q1524.9,1027.3 1518.7,1043.3"/><path d="M1970.8,722.4Q1966.3,729.6 1960.3,735.5"/><path d="M1540.5,768.8Q1542.3,761.7 1542.3,754.4"/><path d="M1867.0,157.7Q1857.9,150.5 1847.6,145.1"/><path d="M1740.9,880.2Q1730.6,875.6 1721.3,869.2"/><path d="M1805.9,928.1Q1816.1,928.2 1826.3,929.1"/><path d="M1650.6,1033.9Q1644.2,1030.7 1638.5,1026.3"/><path d="M1636.3,934.6Q1640.1,939.2 1644.7,943.0"/><path d="M1969.8,608.0Q1974.0,599.9 1976.8,591.2"/><path d="M1909.8,970.6Q1902.5,982.8 1896.0,995.4"/><path d="M1561.3,941.9Q1547.1,935.9 1535.4,925.8"/><path d="M1793.0,224.5Q1786.5,233.1 1777.2,238.6"/><path d="M1937.3,417.9Q1927.1,421.7 1916.5,424.5"/><path d="M1882.4,775.2Q1889.1,771.0 1897.0,769.9"/><path d="M1897.2,422.1Q1881.4,420.1 1866.4,425.4"/><path d="M2005.8,867.9Q1999.8,863.3 1995.3,857.2"/><path d="M1721.4,1026.7Q1708.9,1034.9 1694.8,1039.6"/><path d="M1810.0,1064.7Q1812.0,1070.2 1812.7,1076.0"/><path d="M1981.1,517.2Q1992.1,508.5 2001.8,498.4"/><path d="M1911.2,519.4Q1920.8,525.2 1927.9,533.9"/><path d="M1998.9,435.5Q2010.5,437.1 2022.1,439.0"/><path d="M1677.6,976.6Q1684.3,971.5 1692.0,968.1"/><path d="M1610.6,831.5Q1618.1,832.8 1624.7,836.7"/><path d="M2010.6,887.9Q2004.9,883.9 1999.9,879.0"/><path d="M2021.9,481.7Q2013.7,482.6 2005.7,481.4"/><path d="M1624.7,836.7Q1632.6,836.0 1640.0,832.8"/><path d="M1972.5,787.5Q1966.7,784.6 1960.4,783.0"/><path d="M1733.1,1029.8Q1744.4,1017.4 1751.9,1002.3"/><path d="M1854.3,534.8Q1844.3,532.8 1834.4,535.2"/><path d="M1877.6,103.2Q1883.9,108.1 1890.7,112.3"/><path d="M2012.2,535.1Q2022.7,545.8 2035.2,554.2"/><path d="M1860.0,586.0Q1870.2,583.9 1880.2,586.4"/><path d="M1791.6,104.5Q1793.2,99.0 1795.8,93.8"/><path d="M1953.0,187.6Q1949.0,180.6 1942.9,175.5"/><path d="M1612.8,902.9Q1604.1,902.8 1595.5,904.6"/><path d="M1778.8,965.5Q1772.8,965.3 1767.2,967.7"/><path d="M2017.1,285.7Q2017.5,294.2 2019.2,302.6"/><path d="M1868.7,538.9Q1861.3,537.6 1854.3,534.8"/><path d="M1617.2,884.2Q1610.0,871.3 1603.7,857.9"/><path d="M1954.3,575.8Q1952.9,589.0 1946.2,600.5"/><path d="M1888.1,175.4Q1886.0,182.2 1884.4,189.2"/><path d="M1864.9,375.3Q1850.7,363.1 1834.2,354.4"/><path d="M1834.5,188.9Q1826.9,183.4 1817.8,180.8"/><path d="M1708.0,436.6Q1716.5,443.8 1724.3,451.6"/><path d="M2028.7,588.9Q2028.6,610.9 2032.5,632.6"/><path d="M1679.3,873.9Q1668.3,884.5 1655.4,892.6"/><path d="M1705.9,1049.2Q1699.5,1051.8 1693.3,1055.1"/><path d="M1623.0,1034.0Q1614.4,1029.0 1604.5,1027.6"/><path d="M1536.3,1083.1Q1543.7,1090.6 1552.7,1096.3"/><path d="M1917.4,749.5Q1904.8,757.3 1897.0,769.9"/><path d="M1773.3,1010.5Q1774.1,1004.5 1773.8,998.5"/><path d="M1909.0,640.0Q1913.5,645.2 1918.2,650.4"/><path d="M1928.2,403.0Q1937.6,402.9 1946.9,404.1"/><path d="M1680.8,774.0Q1668.9,773.7 1657.3,776.3"/><path d="M1771.5,1097.0Q1778.7,1090.4 1788.1,1087.7"/><path d="M1958.7,647.4Q1966.6,650.5 1973.9,654.8"/><path d="M1892.3,870.7Q1884.5,862.3 1877.5,853.3"/><path d="M1728.7,978.8Q1722.7,968.1 1721.4,956.0"/><path d="M1821.9,446.9Q1816.2,436.1 1807.1,428.0"/><path d="M1880.3,753.8Q1874.5,760.9 1867.4,766.6"/><path d="M1825.1,425.1Q1816.3,427.4 1807.1,428.0"/><path d="M2010.6,887.9Q2015.3,882.5 2020.6,877.6"/><path d="M1527.7,958.0Q1535.6,963.6 1541.6,971.2"/><path d="M1723.1,283.4Q1717.3,291.4 1709.2,296.9"/><path d="M1622.1,88.9Q1616.5,94.2 1609.4,97.0"/><path d="M1817.9,901.6Q1812.2,893.5 1806.3,885.6"/><path d="M2028.7,588.9Q2025.4,607.4 2015.0,622.9"/><path d="M1553.6,828.9Q1560.4,834.0 1566.1,840.3"/><path d="M1995.3,457.1Q2008.1,455.9 2020.9,457.1"/><path d="M1920.6,251.6Q1918.6,243.4 1915.2,235.6"/><path d="M1759.4,189.5Q1766.3,186.3 1772.8,182.2"/><path d="M1757.7,952.7Q1760.9,961.2 1767.2,967.7"/><path d="M1755.5,885.6Q1758.3,879.0 1758.8,871.7"/><path d="M1979.7,467.9Q1973.3,460.2 1967.1,452.4"/><path d="M1750.6,135.3Q1756.3,151.9 1757.9,169.5"/><path d="M2014.0,838.2Q2017.3,843.8 2022.7,847.6"/><path d="M1507.6,191.8Q1513.2,184.9 1516.7,176.8"/><path d="M1850.9,77.8Q1833.5,76.1 1816.1,75.7"/><path d="M2010.6,584.6Q2001.0,577.1 1989.3,573.7"/><path d="M1548.8,1026.7Q1554.0,1018.2 1559.0,1009.6"/><path d="M1790.0,797.7Q1798.7,798.0 1807.2,796.5"/><path d="M1937.0,194.8Q1930.1,196.1 1923.4,198.0"/><path d="M1982.3,136.8Q1967.0,128.1 1955.4,115.0"/><path d="M1837.0,163.8Q1832.9,176.1 1834.5,188.9"/><path d="M1849.7,177.0Q1841.8,171.9 1837.0,163.8"/><path d="M1825.8,944.2Q1816.1,953.3 1807.1,963.2"/><path d="M2001.8,498.4Q2015.1,502.2 2028.8,500.2"/><path d="M1957.1,767.4Q1950.6,771.2 1945.6,776.8"/><path d="M1767.3,849.1Q1772.3,854.4 1778.5,858.2"/><path d="M1988.0,433.4Q1976.0,432.8 1964.9,437.4"/><path d="M1602.3,943.8Q1607.2,947.6 1610.6,952.8"/><path d="M1663.5,1038.3Q1654.3,1042.7 1644.1,1043.5"/><path d="M1904.6,614.2Q1911.9,620.7 1917.6,628.6"/><path d="M1750.6,135.3Q1745.6,139.4 1739.7,142.0"/><path d="M1627.6,100.1Q1625.8,94.0 1622.1,88.9"/><path d="M1982.5,643.4Q1979.2,649.9 1973.9,654.8"/><path d="M1660.0,988.2Q1670.3,986.7 1680.7,988.0"/><path d="M1526.8,186.8Q1536.4,184.8 1544.6,179.5"/><path d="M1837.1,791.1Q1836.7,800.0 1838.6,808.8"/><path d="M1700.5,943.3Q1692.1,941.6 1683.7,939.8"/><path d="M1863.5,738.9Q1860.6,729.8 1859.6,720.3"/><path d="M1989.6,676.7Q1999.5,683.4 2010.4,688.4"/><path d="M1814.2,1102.8Q1841.9,1101.2 1868.9,1107.4"/><path d="M1969.8,608.0Q1957.7,615.0 1947.1,624.2"/><path d="M2013.7,740.4Q2006.5,734.6 1999.6,728.5"/><path d="M1814.3,865.4Q1818.5,859.7 1824.5,855.8"/><path d="M1954.3,537.1Q1965.1,541.8 1976.4,545.5"/><path d="M1863.9,1003.2Q1868.9,991.2 1876.9,981.0"/><path d="M2028.7,588.9Q2032.5,571.7 2035.2,554.2"/><path d="M1801.6,1055.6Q1804.5,1047.4 1810.7,1041.2"/><path d="M1904.4,942.4Q1905.4,948.0 1903.7,953.5"/><path d="M1678.8,1090.5Q1679.5,1096.8 1681.9,1102.7"/><path d="M1703.4,760.7Q1692.3,767.7 1680.8,774.0"/><path d="M1817.9,901.6Q1818.6,895.8 1821.1,890.6"/><path d="M1808.9,457.3Q1803.2,453.7 1797.1,450.7"/><path d="M1731.5,468.9Q1726.4,460.8 1724.3,451.6"/><path d="M1921.6,951.5Q1912.9,954.2 1903.7,953.5"/><path d="M1755.8,924.2Q1752.3,917.5 1749.3,910.4"/><path d="M1975.8,681.1Q1973.5,668.0 1973.9,654.8"/><path d="M1868.7,538.9Q1870.8,530.7 1869.3,522.3"/><path d="M1847.5,981.6Q1834.0,975.2 1823.5,964.6"/><path d="M1860.0,586.0Q1869.2,575.7 1880.1,567.2"/><path d="M1541.2,1041.3Q1547.5,1039.4 1553.9,1037.9"/><path d="M1967.6,801.5Q1963.7,792.4 1960.4,783.0"/><path d="M1789.4,882.5Q1792.4,895.5 1792.3,908.9"/><path d="M1792.9,823.1Q1779.0,826.3 1764.7,827.5"/><path d="M2027.4,753.6Q2024.5,762.6 2018.1,769.6"/><path d="M1612.8,902.9Q1619.0,914.7 1628.2,924.4"/><path d="M1850.1,930.5Q1851.0,919.2 1849.8,908.0"/><path d="M1807.4,114.0Q1801.3,125.6 1797.3,138.1"/><path d="M1611.6,1052.3Q1610.3,1046.6 1611.1,1040.7"/><path d="M1543.6,841.1Q1533.2,832.9 1526.6,821.4"/><path d="M2002.0,610.0Q1997.3,614.6 1993.5,619.9"/><path d="M1763.4,83.0Q1773.9,80.9 1784.7,80.9"/><path d="M1815.3,491.5Q1822.0,494.8 1828.6,498.1"/><path d="M1840.3,240.2Q1830.1,247.4 1823.2,257.8"/><path d="M2033.9,670.5Q2029.8,694.5 2035.9,718.2"/><path d="M2019.8,250.1Q2007.7,257.3 1994.0,260.3"/><path d="M1669.2,796.2Q1653.5,800.5 1637.6,798.0"/><path d="M1908.4,797.0Q1901.8,796.1 1895.4,798.1"/><path d="M1894.2,598.0Q1904.5,595.3 1912.4,588.1"/><path d="M1778.0,771.9Q1783.1,778.3 1788.1,784.9"/><path d="M1556.4,1074.3Q1561.9,1063.1 1566.8,1051.6"/><path d="M1671.7,929.9Q1682.7,922.3 1690.9,911.8"/><path d="M1802.4,258.9Q1792.1,257.3 1781.6,257.4"/><path d="M1650.2,976.3Q1653.7,983.3 1660.0,988.2"/><path d="M1924.0,918.8Q1931.6,925.6 1939.1,932.4"/><path d="M1807.2,444.2Q1814.5,446.0 1821.9,446.9"/><path d="M1977.0,371.4Q1975.4,363.7 1973.8,356.0"/><path d="M2003.0,340.0Q1996.1,337.7 1988.8,337.3"/><path d="M1693.3,1055.1Q1697.2,1060.5 1702.6,1064.7"/><path d="M1788.1,1087.7Q1779.3,1084.6 1770.0,1085.4"/><path d="M1989.0,874.4Q1984.5,870.7 1979.0,868.8"/><path d="M1527.8,877.2Q1522.1,885.0 1514.3,890.7"/><path d="M1515.0,834.8Q1511.3,819.5 1505.3,804.9"/><path d="M1591.0,1104.1Q1602.9,1104.5 1614.7,1103.8"/><path d="M1553.6,828.9Q1560.1,821.5 1567.8,815.3"/><path d="M2011.2,449.2Q2016.0,453.3 2020.9,457.1"/><path d="M1824.4,240.4Q1808.3,244.1 1792.4,248.5"/><path d="M1860.0,109.0Q1868.2,114.2 1875.9,120.2"/><path d="M1975.7,881.2Q1966.8,883.2 1957.6,883.4"/><path d="M1600.1,71.9Q1611.6,68.7 1623.4,71.0"/><path d="M1810.7,1041.2Q1813.5,1032.3 1815.1,1023.1"/><path d="M1583.9,1012.8Q1594.5,1019.8 1604.5,1027.6"/><path d="M1825.8,944.2Q1825.6,936.6 1826.3,929.1"/><path d="M1527.7,958.0Q1520.3,957.4 1513.3,955.0"/><path d="M1534.3,988.9Q1543.6,982.2 1553.5,976.4"/><path d="M1716.8,938.0Q1719.5,946.9 1721.4,956.0"/><path d="M1802.4,258.9Q1798.6,265.5 1794.4,271.7"/><path d="M1738.0,1087.6Q1739.9,1076.4 1738.0,1065.2"/><path d="M1520.0,902.2Q1524.0,896.9 1526.4,890.8"/><path d="M1854.5,198.0Q1843.7,195.3 1834.5,188.9"/><path d="M1523.1,164.3Q1518.3,153.7 1515.8,142.3"/><path d="M1885.4,671.8Q1876.2,670.5 1866.9,670.7"/><path d="M1793.0,224.5Q1801.6,216.3 1812.5,211.6"/><path d="M1799.4,1006.3Q1792.4,1003.8 1785.1,1002.0"/><path d="M1547.2,102.4Q1554.9,105.7 1562.6,109.4"/><path d="M1703.4,760.7Q1711.3,765.9 1718.9,771.4"/><path d="M2034.5,388.0Q2030.8,371.4 2021.0,357.6"/><path d="M1789.4,882.5Q1778.3,879.0 1766.8,880.4"/><path d="M1821.9,446.9Q1822.9,435.9 1825.1,425.1"/><path d="M1840.2,1091.7Q1841.4,1097.7 1840.0,1103.6"/><path d="M1778.9,1045.2Q1777.3,1057.0 1772.9,1068.0"/><path d="M1905.6,216.0Q1908.9,226.5 1915.2,235.6"/><path d="M1646.9,765.4Q1643.2,773.5 1641.1,782.2"/><path d="M1786.4,173.6Q1779.3,177.5 1772.8,182.2"/><path d="M2003.1,670.0Q2007.5,678.9 2010.4,688.4"/><path d="M1532.7,94.4Q1535.8,83.5 1536.0,72.2"/><path d="M1805.9,928.1Q1796.0,927.6 1786.1,927.2"/><path d="M1747.6,98.1Q1741.4,93.7 1735.0,89.5"/><path d="M1937.9,568.7Q1923.0,575.6 1912.4,588.1"/><path d="M1769.3,482.5Q1750.5,475.5 1731.5,468.9"/><path d="M1628.2,924.4Q1631.3,930.3 1636.3,934.6"/><path d="M1919.1,132.4Q1911.0,117.9 1905.8,102.1"/><path d="M1847.9,259.7Q1854.9,264.1 1862.7,266.7"/><path d="M1937.9,568.7Q1928.8,582.8 1924.9,599.1"/><path d="M1898.0,474.3Q1915.3,479.2 1929.7,489.9"/><path d="M2022.7,676.5Q2017.7,683.7 2010.4,688.4"/><path d="M2017.0,593.9Q2013.8,589.2 2010.6,584.6"/><path d="M1956.5,815.8Q1961.9,822.6 1965.2,830.7"/><path d="M1884.4,189.2Q1887.8,199.9 1891.5,210.4"/><path d="M1610.6,952.8Q1599.7,955.9 1588.4,955.1"/><path d="M1811.4,150.6Q1797.9,150.2 1784.7,152.5"/><path d="M1513.3,955.0Q1523.0,948.2 1533.7,943.0"/><path d="M1912.6,187.4Q1904.8,194.5 1900.4,204.0"/><path d="M1844.9,949.1Q1845.0,955.6 1846.5,961.8"/><path d="M1723.0,297.6Q1716.0,298.8 1709.2,296.9"/><path d="M1969.9,159.6Q1967.0,150.9 1963.1,142.6"/><path d="M1823.7,841.7Q1814.7,843.2 1805.7,841.3"/><path d="M1625.6,772.4Q1627.3,778.1 1629.0,783.8"/><path d="M1789.0,1033.3Q1777.6,1034.6 1766.6,1031.2"/><path d="M1619.3,935.6Q1610.6,939.2 1602.3,943.8"/><path d="M1610.6,831.5Q1613.0,821.9 1616.1,812.5"/><path d="M1956.5,815.8Q1950.8,804.2 1941.5,795.3"/><path d="M1799.4,1006.3Q1802.6,1012.8 1803.8,1020.0"/><path d="M1523.1,164.3Q1509.6,168.7 1495.4,167.8"/><path d="M1594.7,1036.8Q1599.1,1031.7 1604.5,1027.6"/><path d="M1981.1,517.2Q1993.4,514.2 2005.7,510.9"/><path d="M1744.6,1108.3Q1757.8,1102.0 1771.5,1097.0"/><path d="M1728.1,184.9Q1735.1,178.0 1744.5,174.9"/><path d="M1623.0,1034.0Q1621.3,1045.1 1624.7,1055.8"/><path d="M1594.7,1036.8Q1589.1,1040.6 1582.8,1043.0"/><path d="M1524.0,1091.0Q1525.7,1078.8 1523.9,1066.6"/><path d="M2002.0,641.2Q1995.2,631.6 1993.5,619.9"/><path d="M1794.4,954.0Q1792.4,959.7 1790.1,965.3"/><path d="M1835.7,455.8Q1848.7,449.3 1857.9,438.0"/><path d="M1921.6,951.5Q1921.1,943.4 1924.2,935.9"/><path d="M1918.6,772.7Q1908.1,769.3 1897.0,769.9"/><path d="M1844.3,407.3Q1852.4,391.2 1853.2,373.2"/><path d="M1903.7,953.5Q1895.6,945.0 1890.3,934.4"/><path d="M1522.7,795.7Q1518.5,789.3 1514.5,782.8"/><path d="M1990.6,290.7Q1992.0,296.4 1992.3,302.3"/><path d="M1916.7,164.8Q1908.3,176.7 1897.7,186.5"/><path d="M1888.1,175.4Q1890.8,169.8 1891.0,163.5"/><path d="M1918.2,650.4Q1924.9,641.1 1933.9,634.2"/><path d="M1569.5,157.4Q1564.7,162.3 1562.2,168.8"/><path d="M1967.6,801.5Q1969.9,794.4 1972.5,787.5"/><path d="M1850.1,930.5Q1856.0,944.1 1867.3,953.7"/><path d="M1963.3,411.7Q1973.9,411.7 1983.6,407.4"/><path d="M2020.7,394.2Q2027.2,401.6 2030.3,410.9"/><path d="M1619.3,935.6Q1616.7,945.0 1610.6,952.8"/><path d="M1702.9,181.4Q1694.5,183.7 1686.7,187.5"/><path d="M1887.0,498.4Q1883.6,504.4 1880.3,510.5"/><path d="M1860.5,121.5Q1868.3,122.2 1875.9,120.2"/><path d="M1929.7,489.9Q1934.4,495.1 1937.3,501.5"/><path d="M2000.5,844.0Q1997.3,850.4 1995.3,857.2"/><path d="M1516.0,108.5Q1503.5,104.7 1490.6,106.7"/><path d="M1810.7,1041.2Q1807.9,1052.9 1810.0,1064.7"/><path d="M1778.8,965.5Q1784.4,966.8 1790.1,965.3"/><path d="M1944.9,713.0Q1950.1,725.9 1960.3,735.5"/><path d="M1868.9,494.4Q1859.4,502.5 1852.8,513.0"/><path d="M1976.8,591.2Q1981.6,581.4 1989.3,573.7"/><path d="M1824.4,240.4Q1825.0,249.2 1823.2,257.8"/><path d="M1847.9,259.7Q1840.9,260.8 1834.1,262.6"/><path d="M1930.5,237.9Q1925.8,245.0 1920.6,251.6"/><path d="M1575.0,870.2Q1579.2,857.8 1579.9,844.6"/><path d="M1835.0,1001.2Q1841.4,995.5 1849.7,993.2"/><path d="M1884.4,189.2Q1873.4,191.1 1862.5,188.6"/><path d="M1805.9,928.1Q1816.9,934.8 1825.8,944.2"/><path d="M1900.7,136.9Q1890.3,141.9 1879.5,145.9"/><path d="M1970.8,722.4Q1979.1,725.0 1986.5,729.3"/><path d="M1778.8,965.5Q1767.3,960.7 1757.7,952.7"/><path d="M1924.9,599.1Q1918.5,593.9 1912.4,588.1"/><path d="M1953.0,187.6Q1956.5,183.1 1960.7,179.4"/><path d="M1875.7,464.0Q1872.3,454.2 1870.6,444.1"/><path d="M1796.0,179.1Q1807.0,178.9 1817.8,180.8"/><path d="M1844.9,949.1Q1832.7,954.8 1823.5,964.6"/><path d="M1553.6,828.9Q1547.2,816.6 1544.9,803.0"/><path d="M1492.3,192.5Q1487.2,200.9 1479.3,206.6"/><path d="M1939.0,679.6Q1946.5,679.2 1953.7,681.8"/><path d="M1547.2,102.4Q1547.5,92.6 1543.9,83.5"/><path d="M1910.5,848.2Q1914.7,853.1 1917.4,858.9"/><path d="M1862.2,90.3Q1855.6,84.9 1850.9,77.8"/><path d="M1900.7,136.9Q1909.4,132.4 1919.1,132.4"/><path d="M1763.4,83.0Q1777.3,94.0 1791.6,104.5"/><path d="M1940.9,479.2Q1941.1,471.1 1938.2,463.6"/><path d="M1705.9,1049.2Q1699.4,1045.5 1694.8,1039.6"/><path d="M1935.8,118.9Q1945.8,118.1 1955.4,115.0"/><path d="M1878.7,950.9Q1879.2,956.9 1878.8,963.0"/><path d="M1495.4,167.8Q1477.6,166.8 1459.8,164.6"/><path d="M1868.9,898.4Q1881.7,899.0 1893.5,903.6"/><path d="M1903.7,953.5Q1892.7,961.4 1886.1,973.2"/><path d="M1569.5,157.4Q1580.6,148.9 1590.1,138.5"/><path d="M1767.8,932.7Q1776.3,948.1 1778.8,965.5"/><path d="M1923.7,839.5Q1941.1,846.8 1958.7,853.7"/><path d="M1759.9,434.3Q1766.8,442.3 1773.6,450.4"/><path d="M1702.9,820.4Q1697.9,815.8 1694.4,810.0"/><path d="M1963.3,411.7Q1968.1,418.2 1975.1,422.4"/><path d="M1544.6,1072.4Q1534.6,1068.5 1523.9,1066.6"/><path d="M1681.3,892.6Q1676.6,899.2 1670.1,904.3"/><path d="M1877.5,409.9Q1865.4,407.2 1854.9,400.7"/><path d="M1579.9,163.5Q1588.3,163.1 1595.6,159.2"/><path d="M1863.5,738.9Q1859.4,753.6 1852.5,767.1"/><path d="M1844.9,949.1Q1849.1,940.3 1850.1,930.5"/><path d="M1738.1,251.4Q1748.2,248.7 1758.7,248.0"/><path d="M1859.6,720.3Q1862.8,714.4 1868.1,710.4"/><path d="M1983.6,407.4Q1980.8,415.7 1975.1,422.4"/><path d="M1659.0,840.6Q1670.9,840.2 1681.5,834.8"/><path d="M1728.7,978.8Q1741.1,981.7 1751.6,988.7"/><path d="M1810.0,190.0Q1809.7,201.0 1812.5,211.6"/><path d="M1895.4,798.1Q1888.5,786.9 1882.4,775.2"/><path d="M1744.6,1108.3Q1751.4,1093.6 1758.0,1078.9"/><path d="M1995.1,562.8Q1992.5,568.4 1989.3,573.7"/><path d="M1875.7,464.0Q1885.6,463.7 1894.6,459.6"/><path d="M1507.6,191.8Q1492.4,197.3 1479.3,206.6"/><path d="M1919.9,505.4Q1915.4,512.3 1911.2,519.4"/><path d="M1825.8,1056.7Q1817.1,1059.0 1810.0,1064.7"/><path d="M2022.5,639.0Q2025.7,647.4 2027.3,656.2"/><path d="M1933.9,165.0Q1939.5,169.2 1942.9,175.5"/><path d="M1945.6,776.8Q1944.5,786.2 1941.5,795.3"/><path d="M1996.2,412.4Q1996.4,397.1 1993.4,382.1"/><path d="M1782.2,428.7Q1794.8,431.2 1807.1,428.0"/><path d="M1659.0,840.6Q1656.1,852.2 1651.2,863.2"/><path d="M1862.2,90.3Q1869.6,97.1 1877.6,103.2"/><path d="M1507.5,996.8Q1500.8,1007.6 1490.7,1015.4"/><path d="M1589.1,873.0Q1596.4,865.4 1603.7,857.9"/><path d="M1588.8,1060.0Q1600.5,1057.2 1611.6,1052.3"/><path d="M1906.4,654.2Q1905.0,659.8 1904.0,665.4"/><path d="M1991.0,351.3Q1994.2,357.5 1996.3,364.2"/><path d="M1746.3,816.0Q1752.4,811.9 1759.6,810.2"/><path d="M1890.9,711.7Q1879.3,713.5 1868.1,710.4"/><path d="M1837.1,791.1Q1822.4,795.0 1807.2,796.5"/><path d="M1721.5,85.9Q1728.2,94.4 1736.2,101.7"/><path d="M1803.1,480.0Q1808.3,486.7 1815.3,491.5"/><path d="M2002.6,820.6Q2013.7,823.0 2024.1,827.9"/><path d="M1733.1,1029.8Q1735.8,1035.1 1737.0,1041.0"/><path d="M1515.0,834.8Q1518.8,853.0 1515.3,871.3"/><path d="M1710.8,996.6Q1714.2,1005.2 1715.3,1014.4"/><path d="M1667.6,857.4Q1659.5,860.6 1651.2,863.2"/><path d="M2027.3,656.2Q2032.2,652.8 2036.7,649.1"/><path d="M1636.3,934.6Q1632.5,942.3 1626.4,948.3"/><path d="M1952.5,794.0Q1957.5,789.3 1960.4,783.0"/><path d="M2034.5,388.0Q2030.5,399.1 2030.3,410.9"/><path d="M1801.6,1055.6Q1789.8,1051.3 1778.9,1045.2"/><path d="M1873.5,1084.8Q1871.5,1078.2 1869.7,1071.7"/><path d="M1778.8,965.5Q1785.3,958.0 1794.4,954.0"/><path d="M1527.8,877.2Q1529.5,864.9 1526.3,853.0"/><path d="M1669.2,796.2Q1675.9,800.5 1682.7,804.8"/><path d="M1823.7,841.7Q1823.3,848.8 1824.5,855.8"/><path d="M1961.6,363.7Q1970.0,366.2 1977.0,371.4"/><path d="M1785.1,1002.0Q1787.4,1017.6 1789.0,1033.3"/><path d="M1632.8,1085.2Q1625.5,1096.2 1614.7,1103.8"/><path d="M1917.4,749.5Q1926.7,757.5 1935.6,765.8"/><path d="M2021.9,481.7Q2024.0,491.4 2028.8,500.2"/><path d="M1728.7,978.8Q1736.4,972.2 1745.3,967.4"/><path d="M2020.6,877.6Q2020.3,862.5 2022.7,847.6"/><path d="M1864.1,648.7Q1864.4,659.9 1866.9,670.7"/><path d="M1895.4,798.1Q1881.9,803.3 1869.8,811.1"/><path d="M1909.0,640.0Q1914.0,634.8 1917.6,628.6"/><path d="M1907.1,712.6Q1909.4,698.9 1913.6,685.8"/><path d="M1996.3,313.4Q2008.6,309.8 2019.2,302.6"/><path d="M1877.2,210.3Q1860.2,213.1 1845.7,222.2"/><path d="M1818.0,93.2Q1807.0,95.2 1795.8,93.8"/><path d="M1634.7,810.7Q1625.3,811.0 1616.1,812.5"/><path d="M1988.8,337.3Q1999.0,332.2 2009.1,327.1"/><path d="M1581.3,758.1Q1573.2,758.9 1565.8,762.2"/><path d="M1913.6,685.8Q1910.7,674.7 1904.0,665.4"/><path d="M1895.5,447.0Q1884.3,454.0 1875.7,464.0"/><path d="M1706.6,781.0Q1713.0,776.5 1718.9,771.4"/><path d="M1891.0,163.5Q1884.2,155.3 1879.5,145.9"/><path d="M1846.5,961.8Q1857.0,958.1 1867.3,953.7"/><path d="M1568.0,788.0Q1550.6,788.2 1534.5,781.7"/><path d="M1831.3,772.0Q1824.9,780.1 1815.7,784.8"/><path d="M1547.2,102.4Q1545.8,116.0 1541.9,129.0"/><path d="M1939.0,679.6Q1933.9,688.7 1925.8,695.2"/><path d="M1918.8,550.3Q1919.3,559.9 1916.6,569.1"/><path d="M2018.4,405.0Q2024.6,407.5 2030.3,410.9"/><path d="M1995.3,457.1Q1998.7,470.0 2005.7,481.4"/><path d="M1805.2,85.6Q1800.9,90.1 1795.8,93.8"/><path d="M1879.7,159.6Q1885.3,161.6 1891.0,163.5"/><path d="M1589.1,873.0Q1601.8,881.9 1617.2,884.2"/><path d="M1597.9,980.3Q1594.9,967.0 1588.4,955.1"/><path d="M2013.7,740.4Q2027.1,731.5 2035.9,718.2"/><path d="M1878.7,950.9Q1873.0,952.3 1867.3,953.7"/><path d="M1575.1,897.9Q1576.5,890.8 1576.4,883.6"/><path d="M2012.4,349.7Q2004.4,357.0 1996.3,364.2"/><path d="M1489.7,72.0Q1512.9,69.5 1536.0,72.2"/><path d="M1921.2,462.9Q1929.0,451.7 1933.6,438.9"/><path d="M1727.8,790.4Q1730.5,784.6 1734.3,779.4"/><path d="M1888.7,881.2Q1890.8,876.0 1892.3,870.7"/><path d="M1807.4,114.0Q1792.1,112.1 1777.1,115.4"/><path d="M1772.2,161.4Q1780.7,165.9 1786.4,173.6"/><path d="M1706.0,848.8Q1696.3,849.8 1686.5,851.1"/><path d="M2020.7,394.2Q2013.3,382.2 2008.6,369.0"/><path d="M1835.7,455.8Q1840.5,444.0 1845.8,432.3"/><path d="M1671.7,929.9Q1677.8,934.7 1683.7,939.8"/><path d="M1782.8,483.3Q1785.5,473.9 1788.7,464.7"/><path d="M1984.0,531.0Q1968.4,530.5 1954.3,537.1"/><path d="M1854.5,1053.1Q1855.9,1060.3 1858.4,1067.1"/><path d="M1581.3,758.1Q1568.4,749.5 1553.5,745.5"/><path d="M1968.4,507.7Q1968.1,500.7 1970.4,494.0"/><path d="M1937.4,704.4Q1948.1,705.4 1958.7,705.3"/><path d="M1877.2,210.3Q1881.8,217.6 1887.9,223.7"/><path d="M1597.9,980.3Q1606.3,967.5 1610.6,952.8"/><path d="M1988.5,740.3Q1992.3,753.2 1995.1,766.4"/><path d="M1754.4,899.3Q1760.0,889.5 1766.8,880.4"/><path d="M1873.5,1084.8Q1870.7,1096.0 1868.9,1107.4"/><path d="M1778.9,1045.2Q1784.1,1056.3 1785.6,1068.4"/><path d="M2002.0,641.2Q1992.0,640.0 1982.5,643.4"/><path d="M1912.4,588.1Q1910.3,575.5 1904.0,564.3"/><path d="M2033.9,670.5Q2037.5,660.0 2036.7,649.1"/><path d="M1951.8,164.5Q1955.8,172.3 1960.7,179.4"/><path d="M1568.5,1070.3Q1563.4,1078.1 1560.4,1086.9"/><path d="M1792.9,823.1Q1799.8,831.8 1805.7,841.3"/><path d="M1876.9,553.9Q1884.1,538.8 1893.3,524.8"/><path d="M1983.6,407.4Q1974.4,394.1 1968.9,379.0"/><path d="M1754.4,899.3Q1738.3,896.7 1724.4,888.5"/><path d="M1822.6,218.7Q1822.0,207.1 1825.2,196.0"/><path d="M2012.9,711.7Q2011.2,706.0 2007.3,701.6"/><path d="M1713.2,108.1Q1724.1,102.9 1736.2,101.7"/><path d="M1846.1,836.3Q1853.4,849.1 1855.3,863.8"/><path d="M1518.7,1043.3Q1513.4,1035.9 1511.4,1026.9"/><path d="M1669.2,796.2Q1672.8,783.9 1680.8,774.0"/><path d="M1817.9,901.6Q1827.7,907.9 1834.0,917.8"/><path d="M1713.1,73.4Q1718.3,79.0 1721.5,85.9"/><path d="M1808.9,457.3Q1807.5,450.8 1807.2,444.2"/><path d="M1714.5,898.6Q1703.4,906.4 1690.9,911.8"/><path d="M1669.2,1024.4Q1676.7,1022.8 1684.4,1022.2"/><path d="M1602.0,1080.5Q1587.9,1082.0 1573.7,1080.4"/><path d="M1507.5,996.8Q1508.9,1011.9 1511.4,1026.9"/><path d="M1869.3,522.3Q1881.5,521.9 1893.3,524.8"/><path d="M1924.6,803.8Q1929.6,797.1 1931.5,789.0"/><path d="M1888.7,881.2Q1882.5,881.1 1876.4,882.4"/><path d="M1566.1,840.3Q1573.4,841.2 1579.9,844.6"/><path d="M1625.9,821.4Q1626.6,829.1 1624.7,836.7"/><path d="M1823.7,841.7Q1809.4,826.9 1802.3,807.6"/><path d="M1881.7,740.3Q1884.6,735.4 1889.1,731.9"/><path d="M1596.7,92.7Q1603.8,86.7 1609.0,79.1"/><path d="M1512.2,1052.8Q1516.7,1060.9 1523.9,1066.6"/><path d="M1765.2,798.4Q1766.3,792.5 1765.1,786.5"/><path d="M1540.5,1060.6Q1531.4,1049.7 1518.7,1043.3"/><path d="M1807.2,444.2Q1802.8,448.3 1797.1,450.7"/><path d="M1529.8,764.8Q1521.9,773.5 1514.5,782.8"/><path d="M1767.8,932.7Q1754.2,937.2 1743.0,946.0"/><path d="M1720.1,255.0Q1723.5,250.0 1726.8,244.8"/><path d="M1750.7,272.8Q1745.9,261.2 1738.1,251.4"/><path d="M1834.4,535.2Q1838.7,547.9 1842.9,560.6"/><path d="M1739.7,841.6Q1729.5,837.7 1721.9,829.7"/><path d="M1628.2,924.4Q1620.8,921.3 1613.5,918.0"/><path d="M1529.5,138.3Q1534.5,147.6 1542.4,154.8"/><path d="M1516.0,108.5Q1526.0,103.3 1532.7,94.4"/><path d="M1937.3,663.0Q1945.4,663.8 1952.4,667.9"/><path d="M1894.2,598.0Q1883.8,599.3 1873.3,599.3"/><path d="M1854.2,788.5Q1852.6,798.9 1855.7,809.0"/><path d="M2017.1,285.7Q2004.3,290.3 1990.6,290.7"/><path d="M1737.0,1041.0Q1736.1,1053.2 1738.0,1065.2"/><path d="M1621.9,1001.8Q1608.7,992.4 1597.9,980.3"/><path d="M1801.6,1055.6Q1796.0,1044.1 1789.0,1033.3"/><path d="M1743.0,450.3Q1748.9,447.8 1755.4,447.0"/><path d="M1807.2,444.2Q1806.5,436.1 1807.1,428.0"/><path d="M1621.9,802.8Q1609.5,795.0 1596.3,788.3"/><path d="M1678.8,1090.5Q1672.9,1086.9 1668.3,1081.9"/><path d="M2033.3,307.3Q2037.2,287.1 2032.7,267.0"/><path d="M1956.5,815.8Q1970.6,812.8 1982.3,804.5"/><path d="M1772.2,161.4Q1774.5,171.8 1772.8,182.2"/><path d="M1954.3,537.1Q1958.4,518.7 1958.4,499.9"/><path d="M1952.5,794.0Q1960.5,796.9 1967.6,801.5"/><path d="M1880.1,567.2Q1868.7,563.1 1857.1,560.0"/><path d="M1834.4,227.3Q1839.6,223.7 1845.7,222.2"/><path d="M1646.9,765.4Q1656.0,764.9 1665.0,766.1"/><path d="M1930.5,237.9Q1936.6,245.6 1941.3,254.3"/><path d="M1827.7,1030.0Q1818.3,1034.3 1810.7,1041.2"/><path d="M1841.5,1076.1Q1850.6,1087.1 1858.1,1099.3"/><path d="M1952.4,667.9Q1958.6,670.6 1965.1,672.8"/><path d="M1684.2,1066.2Q1681.3,1052.1 1679.0,1038.0"/><path d="M1972.5,787.5Q1976.4,796.5 1982.3,804.5"/><path d="M1976.8,591.2Q1988.0,602.5 2002.0,610.0"/><path d="M1840.3,240.2Q1837.5,233.7 1834.4,227.3"/><path d="M1887.9,223.7Q1888.7,216.8 1891.5,210.4"/><path d="M1904.4,942.4Q1904.1,933.2 1904.4,924.1"/><path d="M1858.1,1099.3Q1849.4,1102.9 1840.0,1103.6"/><path d="M1658.5,812.8Q1649.1,822.7 1640.0,832.8"/><path d="M1918.6,668.3Q1912.9,660.9 1906.4,654.2"/><path d="M2019.8,250.1Q2018.5,260.4 2015.9,270.4"/><path d="M1877.2,210.3Q1884.3,208.9 1891.5,210.4"/><path d="M1541.9,129.0Q1533.6,120.2 1527.5,109.8"/><path d="M2018.4,405.0Q2019.7,399.6 2020.7,394.2"/><path d="M1532.7,94.4Q1537.1,87.7 1543.9,83.5"/><path d="M1921.2,462.9Q1931.5,470.4 1940.9,479.2"/><path d="M1994.0,260.3Q2004.8,265.7 2015.9,270.4"/><path d="M2027.7,564.5Q2019.1,568.4 2009.8,570.0"/><path d="M1524.0,1091.0Q1520.4,1095.6 1516.5,1099.9"/><path d="M1671.7,929.9Q1666.6,940.9 1658.9,950.2"/><path d="M1912.6,187.4Q1905.2,185.7 1897.7,186.5"/><path d="M1534.5,781.7Q1537.5,775.3 1540.5,768.8"/><path d="M1781.6,257.4Q1789.6,263.2 1794.4,271.7"/><path d="M1908.4,797.0Q1920.5,794.7 1931.5,789.0"/></g><g fill="none" stroke="#e898a4" stroke-width="1.0"><path d="M1810.0,190.0Q1787.8,202.9 1766.8,217.7"/><path d="M1827.7,1030.0Q1780.4,1027.7 1733.1,1029.8"/><path d="M1621.9,1001.8Q1619.6,1018.0 1623.0,1034.0"/><path d="M1594.7,1036.8Q1641.2,1070.9 1694.4,1093.0"/><path d="M1520.0,902.2Q1519.2,930.7 1527.7,958.0"/><path d="M1921.2,462.9Q1922.5,511.0 1927.2,558.8"/><path d="M1854.5,198.0Q1853.0,233.0 1862.7,266.7"/><path d="M1860.0,109.0Q1874.5,99.8 1887.0,88.0"/><path d="M1887.0,498.4Q1874.1,542.4 1860.0,586.0"/><path d="M1515.0,834.8Q1520.8,856.2 1527.8,877.2"/><path d="M1877.2,176.9Q1897.9,173.9 1916.7,164.8"/><path d="M1909.8,970.6Q1888.8,921.7 1871.6,871.3"/><path d="M1847.9,259.7Q1855.0,263.9 1862.7,266.7"/><path d="M1654.0,912.8Q1694.9,941.8 1728.7,978.8"/><path d="M1940.5,873.8Q1906.0,874.3 1871.6,871.3"/><path d="M1654.0,912.8Q1675.8,892.7 1696.5,871.3"/><path d="M1916.7,164.8Q1936.9,172.9 1953.0,187.6"/><path d="M1961.6,363.7Q1988.3,386.7 2018.4,405.0"/><path d="M1927.2,558.8Q1943.6,587.6 1969.8,608.0"/><path d="M1658.5,812.8Q1683.7,828.8 1706.0,848.8"/><path d="M1862.7,266.7Q1886.7,243.5 1905.6,216.0"/><path d="M1527.8,877.2Q1524.9,890.0 1520.0,902.2"/><path d="M1778.0,771.9Q1765.6,803.3 1743.5,828.7"/><path d="M1854.5,198.0Q1864.6,186.1 1877.2,176.9"/><path d="M1728.7,978.8Q1733.1,961.2 1743.0,946.0"/><path d="M1743.5,828.7Q1757.4,880.3 1767.8,932.7"/><path d="M1953.0,187.6Q1947.5,200.4 1943.7,213.8"/><path d="M1623.0,1034.0Q1678.3,1038.3 1733.1,1029.8"/><path d="M1900.7,136.9Q1935.7,133.4 1970.9,132.5"/><path d="M1860.0,109.0Q1845.8,129.8 1824.9,143.8"/><path d="M1568.0,788.0Q1613.3,800.4 1658.5,812.8"/><path d="M1940.5,873.8Q1950.4,887.8 1962.0,900.5"/><path d="M1594.7,1036.8Q1545.1,1042.2 1495.5,1046.7"/><path d="M1731.7,207.8Q1772.4,189.3 1810.5,166.0"/><path d="M1623.0,1034.0Q1608.8,1035.2 1594.7,1036.8"/><path d="M1827.7,1030.0Q1857.7,1050.4 1889.4,1067.9"/><path d="M1962.0,900.5Q1931.5,932.3 1909.8,970.6"/><path d="M1743.5,828.7Q1723.5,853.8 1696.5,871.3"/><path d="M1969.8,608.0Q1922.9,633.7 1885.4,671.8"/><path d="M1909.8,970.6Q1908.4,1021.1 1889.4,1067.9"/><path d="M1900.7,136.9Q1908.3,151.1 1916.7,164.8"/><path d="M1790.0,797.7Q1826.5,839.2 1871.6,871.3"/><path d="M1854.5,198.0Q1849.8,228.7 1847.9,259.7"/><path d="M1921.2,462.9Q1907.6,484.0 1887.0,498.4"/><path d="M1694.4,1093.0Q1712.5,1060.6 1733.1,1029.8"/><path d="M1970.9,132.5Q1959.3,159.2 1953.0,187.6"/><path d="M1623.0,1034.0Q1654.7,1068.4 1694.4,1093.0"/><path d="M1750.7,272.8Q1799.7,269.4 1847.9,259.7"/><path d="M1887.0,498.4Q1903.7,530.9 1927.2,558.8"/><path d="M1916.8,359.8Q1939.3,360.1 1961.6,363.7"/><path d="M1810.5,166.0Q1831.6,183.3 1854.5,198.0"/><path d="M1962.0,900.5Q1986.5,895.1 2010.6,887.9"/><path d="M1767.8,932.7Q1754.1,936.9 1743.0,946.0"/><path d="M1529.8,764.8Q1547.8,778.2 1568.0,788.0"/><path d="M1927.2,558.8Q1891.2,566.6 1860.0,586.0"/><path d="M1522.7,795.7Q1538.0,812.4 1553.6,828.9"/><path d="M1860.0,586.0Q1915.3,595.2 1969.8,608.0"/><path d="M1810.0,190.0Q1808.2,207.5 1804.4,224.6"/><path d="M1568.0,788.0Q1545.9,794.9 1522.7,795.7"/><path d="M1654.0,912.8Q1629.6,954.3 1621.9,1001.8"/><path d="M1527.7,958.0Q1512.3,1002.6 1495.5,1046.7"/><path d="M1731.7,207.8Q1750.0,210.0 1766.8,217.7"/><path d="M1887.0,498.4Q1861.9,476.5 1835.7,455.8"/><path d="M1943.7,213.8Q1923.4,239.0 1905.6,265.9"/><path d="M1738.8,759.3Q1746.9,793.6 1743.5,828.7"/><path d="M1810.5,166.0Q1787.2,190.6 1766.8,217.7"/><path d="M1854.5,198.0Q1828.4,209.3 1804.4,224.6"/><path d="M1621.9,1001.8Q1676.5,1019.8 1733.1,1029.8"/><path d="M1916.7,164.8Q1913.6,190.9 1905.6,216.0"/><path d="M1738.8,759.3Q1757.3,768.9 1778.0,771.9"/><path d="M1827.7,1030.0Q1868.5,1000.0 1909.8,970.6"/><path d="M1854.5,198.0Q1840.7,170.4 1824.9,143.8"/><path d="M1943.7,213.8Q1924.6,214.3 1905.6,216.0"/><path d="M1900.7,136.9Q1888.8,156.8 1877.2,176.9"/><path d="M1728.7,978.8Q1775.1,1010.4 1827.7,1030.0"/><path d="M1621.9,1001.8Q1609.1,1019.9 1594.7,1036.8"/><path d="M1696.5,871.3Q1716.9,910.5 1743.0,946.0"/><path d="M1658.5,812.8Q1682.9,838.5 1696.5,871.3"/><path d="M1860.0,586.0Q1873.2,628.8 1885.4,671.8"/><path d="M1553.6,828.9Q1544.9,855.3 1527.8,877.2"/><path d="M1860.0,109.0Q1880.5,122.8 1900.7,136.9"/><path d="M1778.0,771.9Q1782.3,785.6 1790.0,797.7"/><path d="M1706.0,848.8Q1699.1,859.1 1696.5,871.3"/><path d="M1767.8,932.7Q1745.4,953.4 1728.7,978.8"/><path d="M1810.5,166.0Q1810.6,178.0 1810.0,190.0"/><path d="M1515.0,834.8Q1514.0,868.8 1520.0,902.2"/><path d="M1658.5,812.8Q1700.7,822.4 1743.5,828.7"/><path d="M1854.5,198.0Q1881.1,204.1 1905.6,216.0"/><path d="M1767.8,932.7Q1729.5,905.1 1696.5,871.3"/><path d="M1905.6,265.9Q1905.8,240.9 1905.6,216.0"/><path d="M1862.7,266.7Q1884.2,267.5 1905.6,265.9"/><path d="M1743.5,828.7Q1725.6,840.4 1706.0,848.8"/><path d="M1860.0,109.0Q1863.8,144.2 1877.2,176.9"/><path d="M1940.5,873.8Q1976.2,877.6 2010.6,887.9"/><path d="M1654.0,912.8Q1700.0,925.3 1743.0,946.0"/><path d="M1916.7,164.8Q1932.3,188.1 1943.7,213.8"/><path d="M1522.7,795.7Q1521.1,815.7 1515.0,834.8"/><path d="M1527.7,958.0Q1577.8,973.4 1621.9,1001.8"/><path d="M1810.0,190.0Q1832.7,191.6 1854.5,198.0"/><path d="M1731.7,207.8Q1780.9,179.6 1824.9,143.8"/><path d="M1568.0,788.0Q1563.6,809.4 1553.6,828.9"/><path d="M1738.8,759.3Q1703.5,793.3 1658.5,812.8"/><path d="M1529.8,764.8Q1527.3,780.5 1522.7,795.7"/><path d="M1804.4,224.6Q1779.3,250.7 1750.7,272.8"/><path d="M1921.2,462.9Q1878.6,457.8 1835.7,455.8"/><path d="M1877.2,176.9Q1853.8,156.1 1824.9,143.8"/><path d="M1810.5,166.0Q1819.8,156.3 1824.9,143.8"/><path d="M1515.0,834.8Q1534.6,833.5 1553.6,828.9"/><path d="M1921.2,462.9Q1966.2,428.0 2018.4,405.0"/><path d="M1767.8,932.7Q1793.0,984.3 1827.7,1030.0"/><path d="M1728.7,978.8Q1675.9,993.2 1621.9,1001.8"/><path d="M1527.7,958.0Q1561.4,997.2 1594.7,1036.8"/><path d="M1961.6,363.7Q1940.2,412.8 1921.2,462.9"/><path d="M1743.5,828.7Q1766.6,813.0 1790.0,797.7"/><path d="M1728.7,978.8Q1726.0,1004.7 1733.1,1029.8"/><path d="M1658.5,812.8Q1655.2,862.8 1654.0,912.8"/><path d="M1553.6,828.9Q1606.3,822.5 1658.5,812.8"/><path d="M1940.5,873.8Q1926.3,922.6 1909.8,970.6"/><path d="M1887.0,88.0Q1897.3,111.5 1900.7,136.9"/><path d="M1804.4,224.6Q1785.6,221.1 1766.8,217.7"/><path d="M1970.9,132.5Q1941.8,145.2 1916.7,164.8"/><path d="M1804.4,224.6Q1822.8,246.2 1847.9,259.7"/><path d="M1750.7,272.8Q1736.5,284.9 1723.0,297.6"/><path d="M1877.2,176.9Q1889.5,197.8 1905.6,216.0"/></g></g>
<path fill="#aad3df" d="M1700,440 L1708,438.5 L1716,438 L1719,444 L1717,452 L1710,456 L1700,458 L1696,457.5 L1704,452 L1702,446Z M1697,461 L1712,461 L1716,465 L1705,466Z"/>
<path fill="#aad3df" d="M1859,623 L1866,622 L1874,632 L1882,644 L1887,656 L1889,664 L1884,662 L1878,650 L1870,640 L1862,632Z M1857,678 L1864,679 L1866,686 L1858,687Z"/>
<g fill="none" stroke="#b6dce6" stroke-width="4.5" stroke-linejoin="round"><path d="M1434.4,85 C1436.5,87.1 1441.8,93.1 1446.7,97.4 C1451.6,101.7 1462.3,107.3 1464,111 C1465.7,114.7 1459.5,116.5 1456.6,119.6 C1453.7,122.7 1448.5,125.8 1446.7,129.5 C1444.9,133.2 1448.4,138.3 1445.5,141.8 C1442.6,145.3 1434.6,147.2 1429.4,150.5 C1424.2,153.8 1417.7,157.3 1414.6,161.6 C1411.5,165.9 1410.5,171.9 1410.9,176.4 C1411.3,180.9 1415.7,184.7 1417.1,188.8 C1418.5,192.9 1417.8,197.1 1419.5,201.2 C1421.2,205.3 1423.3,209.8 1427,213.5 C1430.7,217.2 1437.7,221.3 1441.8,223.4 C1445.9,225.5 1448.4,224.5 1451.7,225.9 C1455.0,227.3 1457.1,230.4 1461.6,232.1 C1466.1,233.8 1473.6,236.5 1478.9,236.3 C1484.2,236.1 1488.8,232.3 1493.7,230.8 C1498.6,229.3 1502.7,228.9 1508.5,227.1 C1514.3,225.2 1523.3,222.4 1528.3,219.7 C1533.2,217.0 1534.1,214.2 1538.2,211.1 C1542.3,208.0 1548.1,204.1 1553,201.2 C1557.9,198.3 1563.1,196.4 1567.8,193.7 C1572.5,191.0 1576.0,186.5 1581.4,185.1 C1586.8,183.7 1594.8,184.9 1600,185.1 C1605.2,185.3 1607.8,186.7 1612.3,186.3 C1616.8,185.9 1622.7,184.7 1627.2,182.6 C1631.7,180.5 1636.8,177.1 1639.5,174 C1642.2,170.9 1643.2,167.4 1643.2,164.1 C1643.2,160.8 1639.3,157.9 1639.5,154.2 C1639.7,150.5 1643.3,145.9 1644.5,141.8 C1645.7,137.7 1645.7,134.0 1646.9,129.5 C1648.1,125.0 1650.9,119.7 1651.9,114.7 C1652.9,109.8 1653.1,104.8 1653.1,99.8 C1653.1,94.8 1652.1,87.5 1651.9,85"/><path d="M1683.7,85 C1684.9,87.1 1691.9,92.5 1691.1,97.4 C1690.3,102.4 1680.8,108.9 1678.7,114.7 C1676.6,120.5 1676.6,128.1 1678.7,132 C1680.8,135.9 1686.1,137.3 1691.1,138.1 C1696.0,138.9 1705.1,135.4 1708.4,136.9 C1711.7,138.4 1712.0,143.5 1710.8,146.8 C1709.6,150.1 1706.8,153.8 1701,156.7 C1695.2,159.6 1682.8,160.8 1676.2,164.1 C1669.6,167.4 1665.9,171.9 1661.4,176.4 C1656.9,180.9 1651.4,186.4 1649.1,191.3 C1646.8,196.2 1644.9,202.0 1647.8,206.1 C1650.7,210.2 1663.1,211.5 1666.4,216 C1669.7,220.5 1667.4,221.4 1667.6,233.3 C1667.8,245.2 1669.9,276.6 1667.6,287.7 C1665.3,298.8 1659.2,296.3 1654,300 C1648.8,303.7 1642.0,308.0 1636.7,309.9 C1631.4,311.8 1626.6,309.5 1621.9,311.1 C1617.2,312.8 1610.8,315.9 1608.3,319.8 C1605.8,323.7 1604.7,330.1 1607,334.6 C1609.3,339.1 1616.5,347.4 1621.9,347 C1627.3,346.6 1634.3,334.7 1639.2,332.2 C1644.1,329.7 1647.0,331.0 1651.5,332.2 C1656.0,333.4 1661.5,338.8 1666.4,339.6 C1671.4,340.4 1676.3,340.0 1681.2,337.1 C1686.1,334.2 1691.5,325.6 1696,322.3 C1700.5,319.0 1704.3,317.5 1708.4,317.3 C1712.5,317.1 1714.5,320.0 1720.7,321 C1726.9,322.0 1738.0,326.2 1745.4,323.5 C1752.8,320.8 1761.1,310.6 1765.2,305 C1769.3,299.4 1766.9,293.0 1770.2,290.1 C1773.5,287.2 1780.9,286.1 1785,287.7 C1789.1,289.3 1790.0,298.4 1794.9,300 C1799.8,301.6 1808.4,298.8 1814.6,297.6 C1820.8,296.4 1827.0,293.0 1831.9,292.6 C1836.9,292.2 1838.1,295.9 1844.3,295.1 C1850.5,294.3 1863.0,289.4 1869,287.7 C1875.0,286.0 1874.7,286.4 1880,285.2 C1885.3,284.0 1893.8,280.3 1900.7,280.4 C1907.6,280.5 1915.2,286.4 1921.4,285.9 C1927.6,285.4 1932.9,279.7 1938,277.6 C1943.1,275.5 1947.0,275.0 1951.8,273.5 C1956.6,272.0 1963.8,271.2 1967,268.6 C1970.2,266.0 1969.0,260.6 1971.1,257.6 C1973.2,254.6 1975.3,253.9 1979.4,250.7 C1983.5,247.5 1988.6,241.8 1995.9,238.3 C2003.2,234.9 2018.5,231.4 2023,230"/><path d="M1942.5,85 C1943.1,85.8 1942.0,88.0 1945.9,89.5 C1949.9,91.0 1959.1,91.8 1966.2,94 C1973.3,96.2 1982.7,98.5 1988.7,103 C1994.7,107.5 1999.3,114.7 2002.3,121.1 C2005.3,127.5 2006.4,134.9 2006.8,141.3 C2007.2,147.7 2006.0,153.0 2004.5,159.4 C2003.0,165.8 2000.4,174.1 1997.8,179.7 C1995.2,185.3 1992.5,188.7 1988.7,193.2 C1984.9,197.7 1978.2,204.1 1975.2,206.7 C1972.2,209.3 1970.0,207.9 1970.7,209 C1971.5,210.1 1976.7,211.6 1979.7,213.5 C1982.7,215.4 1986.4,216.8 1988.7,220.2 C1991.0,223.6 1991.8,230.7 1993.3,233.7 C1994.8,236.7 1995.5,238.3 1997.8,238.3 C2000.0,238.3 2003.4,234.8 2006.8,233.7 C2010.2,232.6 2014.6,231.5 2018,231.5 C2021.4,231.5 2025.6,233.3 2027.1,233.7"/><path d="M1831.8,767.5 C1831.4,764.7 1832.9,752.9 1829.6,750.9 C1826.3,748.9 1819.3,756.0 1811.9,755.3 C1804.5,754.6 1796.1,748.5 1785.4,746.5 C1774.7,744.5 1760.0,742.7 1747.8,743.2 C1735.6,743.7 1723.9,749.4 1712.5,749.4 C1701.1,749.4 1690.8,745.8 1679.4,743.2 C1668.0,740.6 1652.5,735.0 1644,733.9 C1635.5,732.8 1636.3,735.6 1628.6,736.6 C1620.9,737.6 1605.8,740.6 1597.7,739.9 C1589.6,739.1 1583.0,733.4 1580,732.1"/><path d="M1563.6,725.5 C1560.3,725.9 1552.9,724.6 1543.7,727.7 C1534.5,730.8 1517.9,738.9 1508.3,744.3 C1498.7,749.6 1491.4,754.3 1486.3,759.8 C1481.2,765.3 1478.5,770.8 1477.4,777.4 C1476.3,784.0 1477.4,792.1 1479.6,799.5 C1481.8,806.9 1488.1,815.0 1490.7,821.6 C1493.3,828.2 1494.2,832.7 1495.1,839.3 C1496.0,845.9 1495.8,853.2 1496.2,861.3 C1496.6,869.4 1496.8,878.2 1497.3,887.8 C1497.8,897.4 1499.2,910.9 1499.5,918.8 C1499.8,926.7 1500.4,927.9 1498.8,935 C1497.2,942.1 1494.1,953.3 1490.1,961.3 C1486.1,969.3 1478.9,977.0 1474.7,983.2 C1470.5,989.4 1466.4,991.9 1464.9,998.5 C1463.5,1005.1 1465.5,1014.2 1466,1022.6 C1466.5,1031.0 1466.0,1041.6 1468.2,1048.9 C1470.4,1056.2 1475.4,1060.1 1479.1,1066.4 C1482.8,1072.8 1487.1,1080.9 1490.1,1087 C1493.1,1093.1 1494.8,1098.3 1497,1103 C1499.2,1107.7 1502.0,1113.0 1503,1115"/><path d="M1592.3,738.8 L1563.6,725.5"/><path d="M1774.3,373 C1773.2,374.8 1772.8,381.1 1767.7,384 C1762.6,386.9 1752.6,388.1 1743.4,390.7 C1734.2,393.3 1723.5,395.4 1712.5,399.5 C1701.5,403.6 1685.3,409.9 1677.2,415 C1669.1,420.1 1665.4,424.1 1663.9,430.4 C1662.4,436.6 1666.1,445.9 1668.3,452.5 C1670.5,459.1 1672.0,465.1 1677.2,470.2 C1682.4,475.3 1692.0,479.0 1699.3,483.4 C1706.6,487.8 1714.7,494.1 1721.3,496.7 C1727.9,499.3 1733.8,496.7 1739,498.9 C1744.2,501.1 1748.2,506.2 1752.3,509.9 C1756.3,513.6 1758.9,518.4 1763.3,521 C1767.7,523.6 1774.4,523.6 1778.8,525.4 C1783.2,527.2 1788.1,529.6 1789.8,532 C1791.5,534.4 1788.7,536.5 1788.7,540 C1788.7,543.5 1787.8,549.6 1789.8,553.3 C1791.8,557.0 1796.0,558.8 1800.8,562.1 C1805.6,565.4 1813.3,568.3 1818.5,573.1 C1823.7,577.9 1828.5,585.3 1831.8,590.8 C1835.1,596.3 1836.9,602.2 1838.4,606.3 C1839.9,610.3 1839.5,611.4 1840.6,615.1 C1841.7,618.8 1844.3,622.4 1845,628.3 C1845.7,634.2 1845.4,643.0 1845,650.4 C1844.6,657.8 1843.5,665.1 1842.8,672.5 C1842.1,679.9 1841.3,687.2 1840.6,694.6 C1839.9,702.0 1839.5,710.1 1838.4,716.7 C1837.3,723.3 1835.5,728.8 1834,734.3 C1832.5,739.8 1830.0,744.3 1829.6,749.8 C1829.2,755.3 1831.4,764.5 1831.8,767.5"/><path d="M1873.7,354.2 C1872.6,351.8 1871.1,343.8 1867.1,339.9 C1863.0,336.0 1857.5,332.9 1849.4,331 C1841.3,329.1 1828.1,328.4 1818.5,328.8 C1808.9,329.2 1799.4,328.9 1792,333.3 C1784.6,337.7 1777.2,348.7 1774.3,355.3 C1771.3,361.9 1771.3,369.3 1774.3,373 C1777.2,376.7 1787.6,377.8 1792,377.4 C1796.4,377.0 1796.8,373.0 1800.8,370.8 C1804.8,368.6 1813.7,365.3 1816.3,364.2"/><path d="M1816.3,364.2 C1818.1,366.0 1825.8,370.4 1827.3,375.2 C1828.8,380.0 1826.2,388.3 1825.1,392.9 C1824.0,397.5 1824.8,401.5 1820.7,402.8 C1816.7,404.1 1804.8,403.4 1800.8,400.6 C1796.8,397.9 1796.4,390.5 1796.4,386.3 C1796.4,382.1 1797.5,378.9 1800.8,375.2 C1804.1,371.5 1813.3,366.4 1816.3,364.2 C1819.2,362.0 1818.1,367.9 1818.5,362 C1818.9,356.1 1818.5,334.3 1818.5,328.8"/><path d="M1967,268.6 C1967.2,271.4 1968.5,279.7 1968.3,285.2 C1968.1,290.7 1967.4,297.0 1965.6,301.8 C1963.8,306.6 1961.7,311.0 1957.3,314.2 C1952.9,317.4 1945.4,318.6 1939.4,321.1 C1933.4,323.6 1926.7,326.4 1921.4,329.4 C1916.1,332.4 1910.8,335.6 1907.6,339 C1904.4,342.4 1906.7,347.3 1902.1,350.1 C1897.5,352.9 1883.7,354.7 1880,355.6"/><path d="M2028.7,892.4 C2022.7,895.4 2002.6,904.5 1992.6,910.5 C1982.6,916.5 1977.0,921.0 1968.5,928.5 C1960.0,936.0 1949.4,947.6 1941.4,955.6 C1933.4,963.6 1924.9,969.2 1920.4,976.7 C1915.9,984.2 1914.9,993.2 1914.4,1000.7 C1913.9,1008.2 1914.9,1015.8 1917.4,1021.8 C1919.9,1027.8 1926.9,1031.4 1929.4,1036.9 C1931.9,1042.4 1932.1,1052.7 1932.4,1054.9 C1932.8,1057.1 1936.4,1046.8 1931.5,1050 C1926.6,1053.2 1908.7,1067.8 1902.8,1074 C1896.9,1080.2 1898.8,1081.8 1896,1087 C1893.2,1092.2 1887.7,1102.0 1886,1105"/><ellipse cx="1975.5" cy="1036.8" rx="23" ry="27"/><circle cx="1942" cy="977.8" r="12.5"/><path d="M2030,981 C2012,990 2008,1005 2030,1020"/><path d="M1666,222 C1690,212 1700,205 1713,209 C1730,212 1750,212 1770,216" stroke-width="0.8" opacity="0.6"/></g>
<g fill="none" stroke="#9f93b6" stroke-width="1.7" stroke-linejoin="round"><path d="M1434.4,85 C1436.5,87.1 1441.8,93.1 1446.7,97.4 C1451.6,101.7 1462.3,107.3 1464,111 C1465.7,114.7 1459.5,116.5 1456.6,119.6 C1453.7,122.7 1448.5,125.8 1446.7,129.5 C1444.9,133.2 1448.4,138.3 1445.5,141.8 C1442.6,145.3 1434.6,147.2 1429.4,150.5 C1424.2,153.8 1417.7,157.3 1414.6,161.6 C1411.5,165.9 1410.5,171.9 1410.9,176.4 C1411.3,180.9 1415.7,184.7 1417.1,188.8 C1418.5,192.9 1417.8,197.1 1419.5,201.2 C1421.2,205.3 1423.3,209.8 1427,213.5 C1430.7,217.2 1437.7,221.3 1441.8,223.4 C1445.9,225.5 1448.4,224.5 1451.7,225.9 C1455.0,227.3 1457.1,230.4 1461.6,232.1 C1466.1,233.8 1473.6,236.5 1478.9,236.3 C1484.2,236.1 1488.8,232.3 1493.7,230.8 C1498.6,229.3 1502.7,228.9 1508.5,227.1 C1514.3,225.2 1523.3,222.4 1528.3,219.7 C1533.2,217.0 1534.1,214.2 1538.2,211.1 C1542.3,208.0 1548.1,204.1 1553,201.2 C1557.9,198.3 1563.1,196.4 1567.8,193.7 C1572.5,191.0 1576.0,186.5 1581.4,185.1 C1586.8,183.7 1594.8,184.9 1600,185.1 C1605.2,185.3 1607.8,186.7 1612.3,186.3 C1616.8,185.9 1622.7,184.7 1627.2,182.6 C1631.7,180.5 1636.8,177.1 1639.5,174 C1642.2,170.9 1643.2,167.4 1643.2,164.1 C1643.2,160.8 1639.3,157.9 1639.5,154.2 C1639.7,150.5 1643.3,145.9 1644.5,141.8 C1645.7,137.7 1645.7,134.0 1646.9,129.5 C1648.1,125.0 1650.9,119.7 1651.9,114.7 C1652.9,109.8 1653.1,104.8 1653.1,99.8 C1653.1,94.8 1652.1,87.5 1651.9,85"/><path d="M1683.7,85 C1684.9,87.1 1691.9,92.5 1691.1,97.4 C1690.3,102.4 1680.8,108.9 1678.7,114.7 C1676.6,120.5 1676.6,128.1 1678.7,132 C1680.8,135.9 1686.1,137.3 1691.1,138.1 C1696.0,138.9 1705.1,135.4 1708.4,136.9 C1711.7,138.4 1712.0,143.5 1710.8,146.8 C1709.6,150.1 1706.8,153.8 1701,156.7 C1695.2,159.6 1682.8,160.8 1676.2,164.1 C1669.6,167.4 1665.9,171.9 1661.4,176.4 C1656.9,180.9 1651.4,186.4 1649.1,191.3 C1646.8,196.2 1644.9,202.0 1647.8,206.1 C1650.7,210.2 1663.1,211.5 1666.4,216 C1669.7,220.5 1667.4,221.4 1667.6,233.3 C1667.8,245.2 1669.9,276.6 1667.6,287.7 C1665.3,298.8 1659.2,296.3 1654,300 C1648.8,303.7 1642.0,308.0 1636.7,309.9 C1631.4,311.8 1626.6,309.5 1621.9,311.1 C1617.2,312.8 1610.8,315.9 1608.3,319.8 C1605.8,323.7 1604.7,330.1 1607,334.6 C1609.3,339.1 1616.5,347.4 1621.9,347 C1627.3,346.6 1634.3,334.7 1639.2,332.2 C1644.1,329.7 1647.0,331.0 1651.5,332.2 C1656.0,333.4 1661.5,338.8 1666.4,339.6 C1671.4,340.4 1676.3,340.0 1681.2,337.1 C1686.1,334.2 1691.5,325.6 1696,322.3 C1700.5,319.0 1704.3,317.5 1708.4,317.3 C1712.5,317.1 1714.5,320.0 1720.7,321 C1726.9,322.0 1738.0,326.2 1745.4,323.5 C1752.8,320.8 1761.1,310.6 1765.2,305 C1769.3,299.4 1766.9,293.0 1770.2,290.1 C1773.5,287.2 1780.9,286.1 1785,287.7 C1789.1,289.3 1790.0,298.4 1794.9,300 C1799.8,301.6 1808.4,298.8 1814.6,297.6 C1820.8,296.4 1827.0,293.0 1831.9,292.6 C1836.9,292.2 1838.1,295.9 1844.3,295.1 C1850.5,294.3 1863.0,289.4 1869,287.7 C1875.0,286.0 1874.7,286.4 1880,285.2 C1885.3,284.0 1893.8,280.3 1900.7,280.4 C1907.6,280.5 1915.2,286.4 1921.4,285.9 C1927.6,285.4 1932.9,279.7 1938,277.6 C1943.1,275.5 1947.0,275.0 1951.8,273.5 C1956.6,272.0 1963.8,271.2 1967,268.6 C1970.2,266.0 1969.0,260.6 1971.1,257.6 C1973.2,254.6 1975.3,253.9 1979.4,250.7 C1983.5,247.5 1988.6,241.8 1995.9,238.3 C2003.2,234.9 2018.5,231.4 2023,230"/><path d="M1942.5,85 C1943.1,85.8 1942.0,88.0 1945.9,89.5 C1949.9,91.0 1959.1,91.8 1966.2,94 C1973.3,96.2 1982.7,98.5 1988.7,103 C1994.7,107.5 1999.3,114.7 2002.3,121.1 C2005.3,127.5 2006.4,134.9 2006.8,141.3 C2007.2,147.7 2006.0,153.0 2004.5,159.4 C2003.0,165.8 2000.4,174.1 1997.8,179.7 C1995.2,185.3 1992.5,188.7 1988.7,193.2 C1984.9,197.7 1978.2,204.1 1975.2,206.7 C1972.2,209.3 1970.0,207.9 1970.7,209 C1971.5,210.1 1976.7,211.6 1979.7,213.5 C1982.7,215.4 1986.4,216.8 1988.7,220.2 C1991.0,223.6 1991.8,230.7 1993.3,233.7 C1994.8,236.7 1995.5,238.3 1997.8,238.3 C2000.0,238.3 2003.4,234.8 2006.8,233.7 C2010.2,232.6 2014.6,231.5 2018,231.5 C2021.4,231.5 2025.6,233.3 2027.1,233.7"/><path d="M1831.8,767.5 C1831.4,764.7 1832.9,752.9 1829.6,750.9 C1826.3,748.9 1819.3,756.0 1811.9,755.3 C1804.5,754.6 1796.1,748.5 1785.4,746.5 C1774.7,744.5 1760.0,742.7 1747.8,743.2 C1735.6,743.7 1723.9,749.4 1712.5,749.4 C1701.1,749.4 1690.8,745.8 1679.4,743.2 C1668.0,740.6 1652.5,735.0 1644,733.9 C1635.5,732.8 1636.3,735.6 1628.6,736.6 C1620.9,737.6 1605.8,740.6 1597.7,739.9 C1589.6,739.1 1583.0,733.4 1580,732.1"/><path d="M1563.6,725.5 C1560.3,725.9 1552.9,724.6 1543.7,727.7 C1534.5,730.8 1517.9,738.9 1508.3,744.3 C1498.7,749.6 1491.4,754.3 1486.3,759.8 C1481.2,765.3 1478.5,770.8 1477.4,777.4 C1476.3,784.0 1477.4,792.1 1479.6,799.5 C1481.8,806.9 1488.1,815.0 1490.7,821.6 C1493.3,828.2 1494.2,832.7 1495.1,839.3 C1496.0,845.9 1495.8,853.2 1496.2,861.3 C1496.6,869.4 1496.8,878.2 1497.3,887.8 C1497.8,897.4 1499.2,910.9 1499.5,918.8 C1499.8,926.7 1500.4,927.9 1498.8,935 C1497.2,942.1 1494.1,953.3 1490.1,961.3 C1486.1,969.3 1478.9,977.0 1474.7,983.2 C1470.5,989.4 1466.4,991.9 1464.9,998.5 C1463.5,1005.1 1465.5,1014.2 1466,1022.6 C1466.5,1031.0 1466.0,1041.6 1468.2,1048.9 C1470.4,1056.2 1475.4,1060.1 1479.1,1066.4 C1482.8,1072.8 1487.1,1080.9 1490.1,1087 C1493.1,1093.1 1494.8,1098.3 1497,1103 C1499.2,1107.7 1502.0,1113.0 1503,1115"/><path d="M1592.3,738.8 L1563.6,725.5"/><path d="M1774.3,373 C1773.2,374.8 1772.8,381.1 1767.7,384 C1762.6,386.9 1752.6,388.1 1743.4,390.7 C1734.2,393.3 1723.5,395.4 1712.5,399.5 C1701.5,403.6 1685.3,409.9 1677.2,415 C1669.1,420.1 1665.4,424.1 1663.9,430.4 C1662.4,436.6 1666.1,445.9 1668.3,452.5 C1670.5,459.1 1672.0,465.1 1677.2,470.2 C1682.4,475.3 1692.0,479.0 1699.3,483.4 C1706.6,487.8 1714.7,494.1 1721.3,496.7 C1727.9,499.3 1733.8,496.7 1739,498.9 C1744.2,501.1 1748.2,506.2 1752.3,509.9 C1756.3,513.6 1758.9,518.4 1763.3,521 C1767.7,523.6 1774.4,523.6 1778.8,525.4 C1783.2,527.2 1788.1,529.6 1789.8,532 C1791.5,534.4 1788.7,536.5 1788.7,540 C1788.7,543.5 1787.8,549.6 1789.8,553.3 C1791.8,557.0 1796.0,558.8 1800.8,562.1 C1805.6,565.4 1813.3,568.3 1818.5,573.1 C1823.7,577.9 1828.5,585.3 1831.8,590.8 C1835.1,596.3 1836.9,602.2 1838.4,606.3 C1839.9,610.3 1839.5,611.4 1840.6,615.1 C1841.7,618.8 1844.3,622.4 1845,628.3 C1845.7,634.2 1845.4,643.0 1845,650.4 C1844.6,657.8 1843.5,665.1 1842.8,672.5 C1842.1,679.9 1841.3,687.2 1840.6,694.6 C1839.9,702.0 1839.5,710.1 1838.4,716.7 C1837.3,723.3 1835.5,728.8 1834,734.3 C1832.5,739.8 1830.0,744.3 1829.6,749.8 C1829.2,755.3 1831.4,764.5 1831.8,767.5"/><path d="M1873.7,354.2 C1872.6,351.8 1871.1,343.8 1867.1,339.9 C1863.0,336.0 1857.5,332.9 1849.4,331 C1841.3,329.1 1828.1,328.4 1818.5,328.8 C1808.9,329.2 1799.4,328.9 1792,333.3 C1784.6,337.7 1777.2,348.7 1774.3,355.3 C1771.3,361.9 1771.3,369.3 1774.3,373 C1777.2,376.7 1787.6,377.8 1792,377.4 C1796.4,377.0 1796.8,373.0 1800.8,370.8 C1804.8,368.6 1813.7,365.3 1816.3,364.2"/><path d="M1816.3,364.2 C1818.1,366.0 1825.8,370.4 1827.3,375.2 C1828.8,380.0 1826.2,388.3 1825.1,392.9 C1824.0,397.5 1824.8,401.5 1820.7,402.8 C1816.7,404.1 1804.8,403.4 1800.8,400.6 C1796.8,397.9 1796.4,390.5 1796.4,386.3 C1796.4,382.1 1797.5,378.9 1800.8,375.2 C1804.1,371.5 1813.3,366.4 1816.3,364.2 C1819.2,362.0 1818.1,367.9 1818.5,362 C1818.9,356.1 1818.5,334.3 1818.5,328.8"/><path d="M1967,268.6 C1967.2,271.4 1968.5,279.7 1968.3,285.2 C1968.1,290.7 1967.4,297.0 1965.6,301.8 C1963.8,306.6 1961.7,311.0 1957.3,314.2 C1952.9,317.4 1945.4,318.6 1939.4,321.1 C1933.4,323.6 1926.7,326.4 1921.4,329.4 C1916.1,332.4 1910.8,335.6 1907.6,339 C1904.4,342.4 1906.7,347.3 1902.1,350.1 C1897.5,352.9 1883.7,354.7 1880,355.6"/><path d="M2028.7,892.4 C2022.7,895.4 2002.6,904.5 1992.6,910.5 C1982.6,916.5 1977.0,921.0 1968.5,928.5 C1960.0,936.0 1949.4,947.6 1941.4,955.6 C1933.4,963.6 1924.9,969.2 1920.4,976.7 C1915.9,984.2 1914.9,993.2 1914.4,1000.7 C1913.9,1008.2 1914.9,1015.8 1917.4,1021.8 C1919.9,1027.8 1926.9,1031.4 1929.4,1036.9 C1931.9,1042.4 1932.1,1052.7 1932.4,1054.9 C1932.8,1057.1 1936.4,1046.8 1931.5,1050 C1926.6,1053.2 1908.7,1067.8 1902.8,1074 C1896.9,1080.2 1898.8,1081.8 1896,1087 C1893.2,1092.2 1887.7,1102.0 1886,1105"/><ellipse cx="1975.5" cy="1036.8" rx="23" ry="27"/><circle cx="1942" cy="977.8" r="12.5"/><path d="M2030,981 C2012,990 2008,1005 2030,1020"/><path d="M1666,222 C1690,212 1700,205 1713,209 C1730,212 1750,212 1770,216" stroke-width="0.8" opacity="0.6"/></g>
<g fill="none" stroke="#a593b8" stroke-width="0.8" opacity="0.7"><path d="M1466,84 L1490,88 L1504.8,85 L1498.6,92.4 L1488.7,98.6 L1483.8,104.8 L1482.6,112.2 L1476.4,122.1 L1469,129.5 L1461.6,136.9 L1469,138.1 L1483.8,134.4 L1496.2,130.7 L1501.1,133.2 L1486.3,141.8 L1473.9,146.8 L1464,150.5 L1461.6,154.2 L1469,157.9 L1461.6,161.6 L1449.2,161.6 L1439.3,164.1 L1435.6,169 L1444.3,171.5 L1459.1,169 L1471.4,170.3 L1476.4,176.4 L1461.6,180.2 L1446.7,183.9 L1439.3,187.6 L1441.8,193.7 L1454.1,191.3 L1461.6,193.7 L1451.7,201.2 L1449.2,208.6 L1461.6,206.1 L1469,208.6 L1465.3,218.5 L1478.9,219.7 L1488.7,216 L1503.6,211.1 L1518.4,206.1 L1528.3,198.7 L1538.2,193.7 L1553,188.8 L1562.9,183.9 L1572.8,176.4 L1580.2,171.5 L1592.6,167.8 L1602.4,165.3 L1614.8,165.3 L1624.7,164.1 L1619.7,156.7 L1617.3,151.7 L1624.7,144.3 L1629.6,134.4 L1632.1,122.1 L1634.6,112.2 L1638.3,107.2 L1635.8,97.4 L1633.3,85 L1633,60 L1466,60Z"/><path d="M1703.4,85 L1705.9,94.9 L1696,112.2 L1693.5,119.6 L1705.9,115.9 L1718.3,112.2 L1725.7,109.7 L1728.1,127 L1724.4,146.8 L1718.3,159.1 L1703.4,166.6 L1686.1,176.4 L1673.8,186.3 L1671.3,190 L1681.2,191.3 L1672.5,198.7 L1683.7,208.6 L1696,201.2 L1710.8,198.7 L1728.1,203.6 L1738,213.5 L1750.4,219.7 L1765.2,223.4 L1777.6,218.5 L1788.7,209.8 L1792.4,201.2 L1791.2,208.6 L1782.5,219.7 L1775.1,230.8 L1767.7,237 L1750.4,238.2 L1730.6,238.2 L1718.3,243.2 L1710.8,250.6 L1701,263 L1691.1,280.3 L1681.2,292.6 L1668.8,305 L1656.5,312.4 L1652.8,319.8 L1663.9,318.6 L1671.3,324.7 L1678.7,322.3 L1693.5,312.4 L1703.4,302.5 L1720.7,301.3 L1738,305 L1746.7,308.7 L1752.9,297.6 L1755.3,282.7 L1767.7,274.1 L1785,275.3 L1802.3,281.5 L1819.6,280.3 L1829.5,275.3 L1844.3,277.8 L1854.2,280.3 L1866.5,275.3 L1881.4,271.6 L1898.7,270.4 L1918.5,270.4 L1943.2,266.7 L1956.8,252.1 L1964.2,248.4 L1971.5,244.8 L1975.9,238.9 L1976.7,231.5 L1977.4,224.1 L1964.2,226.4 L1953.1,227.1 L1942.1,226.4 L1932.5,219.7 L1932.5,218.3 L1942.1,216.1 L1948,213.8 L1955.3,208 L1954.6,202.1 L1955.3,198.4 L1959.7,196.9 L1965.6,194.7 L1970.8,189.6 L1975.9,180 L1984.2,168.4 L1988.7,154.9 L1992.1,141.3 L1988.7,125.6 L1979.7,116.6 L1966.2,109.8 L1948.2,107.5 L1936.9,107.5 L1930.2,116.6 L1918.9,116.6 L1914.4,107.5 L1923.4,96.3 L1927.9,85 L1928,60 L1703,60Z"/><path d="M2040,247 L2023,247.9 L2004.2,253.5 L1990.4,256.2 L1984.9,261.7 L1983.5,271.4 L1984.9,285.2 L1982.1,299 L1982.8,310.1 L1979.4,315.6 L1976.6,319.7 L1968.3,325.2 L1957.3,329.4 L1944.9,333.5 L1932.4,339 L1921.4,344.6 L1914.5,350.1 L1917.3,358.4 L1925.5,362.5 L1921.4,366.6 L1907.6,372.2 L1893.8,374.9 L1889.2,374.1 L1873.7,370.8 L1860.5,368.6 L1856.1,364.2 L1853.9,348.7 L1845,346.5 L1834,348.7 L1825.1,345.4 L1827.3,355.3 L1831.8,368.6 L1837.3,381.8 L1838.4,395.1 L1840.6,408.3 L1847.2,417.2 L1838.4,419.4 L1827.3,417.2 L1820.7,421.6 L1809.7,418.3 L1798.6,421.6 L1789.8,428.2 L1778.8,415 L1769.9,405 L1756.7,408.3 L1747.8,410.5 L1734.6,415 L1716.9,419.4 L1703.7,423.8 L1694.8,428.2 L1697,439.3 L1705.9,443.7 L1716.9,448.1 L1708.1,452.5 L1697,459.1 L1712.5,461.3 L1721.3,465.8 L1714.7,474.6 L1730.2,472.4 L1741.2,476.8 L1756.7,481.2 L1767.7,485.6 L1783.2,490.1 L1792,494.5 L1800.8,496.7 L1798.6,509.9 L1811.9,514.3 L1809.7,523.2 L1814.1,532 L1820.7,540.8 L1825.1,560.1 L1822.9,551 L1831.8,562.1 L1842.8,570.9 L1856.1,575.3 L1860.5,579.8 L1858.3,586.4 L1853.9,597.4 L1858.3,606.3 L1856.1,617.3 L1862.7,626.1 L1860.5,632.8 L1858.3,650.4 L1856.1,672.5 L1853.9,694.6 L1851.6,716.7 L1847.2,738.8 L1839.6,753.1 L1828.6,764.2 L1815.3,766.4 L1802.1,764.2 L1784.4,762 L1764.5,758.6 L1751.3,755.3 L1738,757.5 L1724.8,756.4 L1707.1,755.3 L1685,753.1 L1662.9,750.9 L1647.5,747.6 L1632,753.1 L1618.8,753.1 L1601.1,753.1 L1583.4,750.9 L1574.6,742.1 L1565.8,741 L1552.5,741 L1539.3,748.7 L1526,755.3 L1512.8,764.2 L1503.9,773 L1492.9,781.8 L1499.5,790.7 L1492.9,797.3 L1501.7,806.1 L1499.5,817.2 L1508.3,826 L1506.1,839.3 L1508.3,852.5 L1508.3,874.6 L1508.3,896.7 L1512.8,918.8 L1516.3,917.5 L1512,935 L1507.6,954.7 L1503.2,976.6 L1494.4,996.3 L1485.7,1007.3 L1487.9,1013.9 L1483.5,1024.8 L1481.3,1035.8 L1485.7,1044.5 L1501,1046.7 L1507.6,1051.1 L1503.2,1057.7 L1507.6,1066.4 L1512,1075.2 L1509.8,1087 L1510.2,1094.6 L1512.1,1103 L1512,1130 L1890,1130 L1884.3,1087.1 L1890.3,1073 L1899.3,1063.9 L1908.3,1054.9 L1920.4,1045.9 L1914.4,1039.9 L1905.3,1024.8 L1899.3,1009.8 L1902.3,991.7 L1908.3,976.7 L1920.4,964.6 L1929.4,949.6 L1938.4,937.6 L1950.5,931.5 L1947.5,924 L1959.5,916.5 L1974.5,907.5 L1992.6,901.4 L2010.7,892.4 L2023,880.4 L2040,870Z"/></g>
<g fill="none" stroke="#b3a3c6" stroke-width="1.1" opacity="0.85"><path d="M1976,319.5 C1978.2,322.8 1986.5,330.5 1989.3,339.3 C1992.1,348.1 1994.3,364.2 1992.6,372.5 C1990.9,380.8 1980.4,381.1 1979.3,389 C1978.2,396.9 1984.9,414.8 1986,420"/><path d="M1949.5,420 C1951.7,418.4 1956.5,412.4 1962.8,410.5 C1969.1,408.6 1982.1,413.9 1987.6,408.9 C1993.1,403.9 1992.3,385.7 1995.9,380.7 C1999.5,375.7 2003.4,378.6 2009.1,379.1 C2014.8,379.7 2026.5,383.2 2030,384"/><path d="M1587.8,753.1 C1588.9,755.7 1593.8,763.1 1594.5,768.6 C1595.2,774.1 1591.9,781.9 1592.3,786.3 C1592.7,790.7 1597.1,790.7 1596.7,795.1 C1596.3,799.5 1588.9,806.2 1590,812.8 C1591.1,819.4 1601.5,829.6 1603.3,834.8 C1605.1,839.9 1600.0,840.8 1601.1,843.7 C1602.2,846.7 1608.5,851.0 1610,852.5"/><path d="M1643,753 C1644.8,758.5 1647.3,782.0 1654,786 C1660.7,790.0 1674.9,778.4 1683,777 C1691.1,775.6 1696.5,776.2 1702.7,777.4 C1708.9,778.6 1716.0,781.8 1720.4,784 C1724.8,786.2 1726.6,790.7 1729.2,790.7 C1731.8,790.7 1732.1,786.2 1735.8,784 C1739.5,781.8 1746.5,779.6 1751.3,777.4 C1756.1,775.2 1762.3,771.9 1764.5,770.8"/><path d="M1766.7,770.8 C1767.8,776.3 1770.5,796.5 1773.4,803.9 C1776.4,811.3 1780.0,811.3 1784.4,815 C1788.8,818.7 1794.4,822.7 1799.9,826 C1805.4,829.3 1812.7,831.8 1817.5,834.8 C1822.3,837.8 1824.2,841.5 1828.6,843.7 C1833.0,845.9 1841.4,847.3 1844,848"/><path d="M1601.7,954.7 C1604.2,953.6 1612.2,950.4 1617,948.2 C1621.8,946.0 1626.5,941.2 1630.2,941.6 C1633.9,942.0 1635.3,948.2 1639,950.4 C1642.7,952.6 1647.4,952.5 1652.1,954.7 C1656.8,956.9 1662.3,962.8 1667.4,963.5 C1672.5,964.2 1677.3,960.9 1682.8,959.1 C1688.3,957.3 1694.8,955.0 1700.3,952.5 C1705.8,950.0 1713.0,945.2 1715.6,943.8"/><path d="M1667.4,963.5 C1667.8,966.0 1667.8,974.0 1669.6,978.8 C1671.4,983.5 1676.2,987.6 1678.4,992 C1680.6,996.4 1679.9,1001.8 1682.8,1005.1 C1685.7,1008.4 1694.8,1008.1 1695.9,1011.7 C1697.0,1015.4 1690.0,1022.3 1689.3,1027 C1688.6,1031.7 1692.6,1035.7 1691.5,1040.1 C1690.4,1044.5 1682.8,1048.9 1682.8,1053.3 C1682.8,1057.7 1690.6,1058.6 1691.5,1066.4 C1692.4,1074.2 1688.6,1094.4 1688,1100"/><path d="M1691.5,1053.3 C1695.5,1054.0 1707.9,1055.9 1715.6,1057.7 C1723.3,1059.5 1730.2,1063.9 1737.5,1064.2 C1744.8,1064.5 1752.1,1060.9 1759.4,1059.8 C1766.7,1058.7 1775.1,1057.3 1781.3,1057.7 C1787.5,1058.1 1788.5,1060.0 1796.6,1062 C1804.7,1064.0 1824.4,1068.7 1830,1070"/><path d="M1726.5,917.5 C1724.7,921.9 1714.9,935.4 1715.6,943.8 C1716.3,952.2 1725.4,962.8 1730.9,967.9 C1736.4,973.0 1742.6,975.5 1748.4,974.4 C1754.2,973.3 1762.3,966.4 1766,961.3 C1769.7,956.2 1772.5,951.1 1770.3,943.8 C1768.1,936.5 1757.2,924.8 1752.8,917.5 C1748.4,910.2 1748.4,900.0 1744,900 C1739.6,900.0 1729.4,914.6 1726.5,917.5"/><path d="M1944.4,799.1 C1944.4,802.6 1944.9,812.7 1944.4,820.2 C1943.9,827.7 1944.4,835.3 1941.4,844.3 C1938.4,853.3 1928.4,866.9 1926.4,874.4 C1924.4,881.9 1930.4,884.4 1929.4,889.4 C1928.4,894.4 1920.9,898.4 1920.4,904.4 C1919.9,910.4 1926.4,920.5 1926.4,925.5 C1926.4,930.5 1921.4,933.0 1920.4,934.5"/><path d="M1851.2,784.1 C1850.2,790.1 1847.6,810.2 1845.1,820.2 C1842.6,830.2 1838.6,836.8 1836.1,844.3 C1833.6,851.8 1830.6,856.8 1830.1,865.3 C1829.6,873.8 1831.1,885.4 1833.1,895.4 C1835.1,905.4 1842.1,917.0 1842.1,925.5 C1842.1,934.0 1832.6,939.1 1833.1,946.6 C1833.6,954.1 1841.6,961.7 1845.1,970.7 C1848.6,979.7 1854.2,991.7 1854.2,1000.7 C1854.2,1009.7 1845.1,1017.8 1845.1,1024.8 C1845.1,1031.8 1851.7,1036.9 1854.2,1042.9 C1856.7,1048.9 1860.2,1051.4 1860.2,1060.9 C1860.2,1070.4 1855.2,1093.5 1854.2,1100"/><path d="M1899.3,928.5 C1895.8,930.5 1884.7,934.6 1878.2,940.6 C1871.7,946.6 1864.2,954.6 1860.2,964.6 C1856.2,974.6 1855.2,994.7 1854.2,1000.7"/><path d="M1851.6,423.8 C1853.5,425.6 1860.9,429.3 1862.8,434.8 C1864.7,440.3 1864.3,450.3 1862.8,456.9 C1861.3,463.5 1860.6,469.5 1853.9,474.6 C1847.2,479.8 1831.8,484.1 1822.9,487.8 C1814.1,491.5 1804.5,495.2 1800.8,496.7"/><path d="M1862.8,428.2 C1865.3,428.6 1871.9,430.8 1878.1,430.4 C1884.3,430.0 1893.9,425.6 1900.2,426 C1906.5,426.4 1910.2,431.1 1915.7,432.6 C1921.2,434.1 1927.5,433.7 1933.4,434.8 C1939.3,435.9 1947.3,442.2 1951,439.3 C1954.7,436.4 1951.0,422.4 1955.4,417.2 C1959.8,412.0 1972.0,413.4 1977.5,408.3 C1983.0,403.2 1986.8,390.0 1988.6,386.3"/><path d="M1951,439.3 C1950.3,443.4 1948.8,457.0 1946.6,463.6 C1944.4,470.2 1940.7,474.6 1937.8,479 C1934.9,483.4 1929.7,485.2 1929,490 C1928.3,494.8 1934.2,502.2 1933.4,507.7 C1932.7,513.2 1926.0,520.6 1924.5,523.2"/><path d="M1814.1,527.6 C1819.2,527.6 1835.4,526.9 1845,527.6 C1854.6,528.3 1864.1,533.1 1871.5,532 C1878.9,530.9 1881.8,522.8 1889.2,521 C1896.6,519.2 1909.8,520.6 1915.7,521 C1921.6,521.4 1917.1,520.0 1924.5,523.2 C1931.9,526.4 1951.2,533.0 1960,540 C1968.8,547.0 1972.5,555.0 1977.5,565 C1982.5,575.0 1981.2,592.5 1990,600 C1998.8,607.5 2023.3,608.3 2030,610"/><path d="M1977.5,657 C1976.0,661.0 1972.4,672.1 1968.7,681.3 C1965.0,690.5 1959.1,706.0 1955.4,712.3 C1951.7,718.6 1950.3,717.4 1946.6,718.9 C1942.9,720.4 1938.6,719.6 1933.4,721.1 C1928.2,722.6 1920.9,725.5 1915.7,727.7 C1910.5,729.9 1903.9,728.8 1902.4,734.3 C1900.9,739.8 1905.4,753.2 1906.9,760.8 C1908.4,768.4 1910.6,776.8 1911.3,780"/><path d="M1780,94.9 C1781.2,97.4 1789.1,106.4 1787.5,109.7 C1785.9,113.0 1772.7,110.6 1770.2,114.7 C1767.7,118.8 1773.0,128.6 1772.6,134.4 C1772.2,140.2 1767.3,145.6 1767.7,149.3 C1768.1,153.0 1774.3,153.8 1775.1,156.7 C1775.9,159.6 1771.8,163.7 1772.6,166.6 C1773.4,169.5 1777.1,169.1 1780,174 C1782.9,178.9 1787.8,190.4 1789.9,196.2 C1792.0,202.0 1792.0,206.5 1792.4,208.6"/></g>
<g fill="none" stroke="#a89bb6" stroke-width="2.2" stroke-linejoin="round"><path d="M1830.1,766 L1851.2,784.1 L1878.2,793.1 L1899.3,799.1 L1944.4,797.6 L1971.5,805.1 L1995.6,823.2 L2028.7,824.7"/><path d="M1495.1,858 L1512.8,852.5 L1526,845.9 L1541.5,843.7 L1539.3,856.9 L1556.9,859.1 L1574.6,856.9 L1587.8,852.5 L1609.9,852.5 L1614.3,865.8 L1627.6,874.6 L1618.8,892.3 L1607.7,896.7 L1596.7,909.9 L1601.1,929.8 L1598.9,960.1 L1598.5,908.8 L1601.7,932.8 L1599.5,954.7 L1593,961.3 L1597.4,974.4 L1593,987.6 L1571.1,992 L1575.5,1005.1 L1588.6,1018.2 L1595.2,1027 L1593,1035.8 L1582,1051.1 L1579.8,1064.2 L1593,1075.2 L1593,1087 L1590,1110"/></g>
<g fill="#e8a7ae" opacity="0.8"><circle cx="1743" cy="948" r="7"/><circle cx="1906" cy="214" r="8"/><circle cx="2018" cy="404" r="6"/></g>
<g fill="#fff" stroke="#666" stroke-width="1"><circle cx="1526.8" cy="186.8" r="2.0"/><circle cx="1731.7" cy="207.8" r="2.0"/><circle cx="1860" cy="109" r="2.0"/><circle cx="1810.5" cy="166" r="2.0"/><circle cx="1810" cy="190" r="2.0"/><circle cx="1854.5" cy="198" r="2.0"/><circle cx="1804.4" cy="224.6" r="2.0"/><circle cx="1750.7" cy="272.8" r="2.0"/><circle cx="1723" cy="297.6" r="2.0"/><circle cx="1847.9" cy="259.7" r="2.0"/><circle cx="1862.7" cy="266.7" r="2.0"/><circle cx="1887" cy="88" r="2.0"/><circle cx="1900.7" cy="136.9" r="2.0"/><circle cx="1970.9" cy="132.5" r="2.0"/><circle cx="1877.2" cy="176.9" r="2.0"/><circle cx="1916.7" cy="164.8" r="2.0"/><circle cx="1953" cy="187.6" r="2.0"/><circle cx="1943.7" cy="213.8" r="2.0"/><circle cx="1905.6" cy="265.9" r="2.0"/><circle cx="2019.8" cy="250.1" r="2.0"/><circle cx="1916.8" cy="359.8" r="2.0"/><circle cx="1961.6" cy="363.7" r="2.0"/><circle cx="1708" cy="436.6" r="2.0"/><circle cx="1921.2" cy="462.9" r="2.0"/><circle cx="1887" cy="498.4" r="2.0"/><circle cx="1927.2" cy="558.8" r="2.0"/><circle cx="1860" cy="586" r="2.0"/><circle cx="1969.8" cy="608" r="2.0"/><circle cx="1738.8" cy="759.3" r="2.0"/><circle cx="1778" cy="771.9" r="2.0"/><circle cx="1529.8" cy="764.8" r="2.0"/><circle cx="1568" cy="788" r="2.0"/><circle cx="1522.7" cy="795.7" r="2.0"/><circle cx="1515" cy="834.8" r="2.0"/><circle cx="1553.6" cy="828.9" r="2.0"/><circle cx="1658.5" cy="812.8" r="2.0"/><circle cx="1743.5" cy="828.7" r="2.0"/><circle cx="1706" cy="848.8" r="2.0"/><circle cx="1527.8" cy="877.2" r="2.0"/><circle cx="1520" cy="902.2" r="2.0"/><circle cx="1654" cy="912.8" r="2.0"/><circle cx="1767.8" cy="932.7" r="2.0"/><circle cx="1527.7" cy="958" r="2.0"/><circle cx="1728.7" cy="978.8" r="2.0"/><circle cx="1621.9" cy="1001.8" r="2.0"/><circle cx="1623" cy="1034" r="2.0"/><circle cx="1594.7" cy="1036.8" r="2.0"/><circle cx="1827.7" cy="1030" r="2.0"/><circle cx="1694.4" cy="1093" r="2.0"/><circle cx="1940.5" cy="873.8" r="2.0"/><circle cx="1962" cy="900.5" r="2.0"/><circle cx="1909.8" cy="970.6" r="2.0"/><circle cx="1889.4" cy="1067.9" r="2.0"/><circle cx="1733.1" cy="1029.8" r="2.0"/><circle cx="1824.9" cy="143.8" r="2.6"/><circle cx="1766.8" cy="217.7" r="2.6"/><circle cx="1905.6" cy="216" r="2.6"/><circle cx="1835.7" cy="455.8" r="2.6"/><circle cx="1885.4" cy="671.8" r="2.6"/><circle cx="1977.5" cy="749.8" r="2.6"/><circle cx="1790" cy="797.7" r="2.6"/><circle cx="1696.5" cy="871.3" r="2.0"/><circle cx="1743" cy="946" r="2.6"/><circle cx="1495.5" cy="1046.7" r="2.6"/><circle cx="1871.6" cy="871.3" r="2.6"/><circle cx="2010.6" cy="887.9" r="2.6"/><circle cx="2018.4" cy="405" r="2.6"/></g><g font-size="10.3" fill="#333" paint-order="stroke" stroke="#fff" stroke-opacity="0.75" stroke-width="2.4" stroke-linejoin="round" text-anchor="middle" dominant-baseline="central"><text x="1526.6" y="179.7">Cork</text><text x="1707.5" y="207.8">Swansea</text><text x="1826.9" y="109.2">Nottingham</text><text x="1810.5" y="173.2">Worcester</text><text x="1780.4" y="190.5">Gloucester</text><text x="1854.5" y="190.5">Oxford</text><text x="1804.4" y="232.8">Bath</text><text x="1750.7" y="265.4">Exeter</text><text x="1723" y="290.1">Plymouth</text><text x="1811.3" y="260.5">Southampton</text><text x="1857" y="274.6">Portsmouth</text><text x="1887.6" y="94.9">Lincoln</text><text x="1900.7" y="130">Peterborough</text><text x="1970.4" y="140.6">Norwich</text><text x="1877.2" y="157.4">Milton</text><text x="1877.2" y="169.5">Keynes</text><text x="1946.9" y="164.8">Cambridge</text><text x="1952.6" y="180.7">Colchester</text><text x="1944.4" y="221.7">Southend-</text><text x="1944.4" y="233.8">on-Sea</text><text x="1905.6" y="258.5">Brighton</text><text x="1990.1" y="250.6">Dunkerque</text><text x="1916.8" y="353.1">Le Havre</text><text x="1961.6" y="356.4">Rouen</text><text x="1708" y="444">Brest</text><text x="1921.2" y="470.6">Le Mans</text><text x="1908" y="499.3">Angers</text><text x="1927.4" y="551">Poitiers</text><text x="1859.4" y="593.9">La Rochelle</text><text x="1969.4" y="600">Limoges</text><text x="1710.3" y="759.7">Santander</text><text x="1778.3" y="764.6">Bilbao</text><text x="1529.8" y="758">A Coruña</text><text x="1568" y="780.3">Lugo</text><text x="1498.4" y="790.2">Santiago</text><text x="1484" y="802.2">de Compostela</text><text x="1515" y="828.2">Vigo</text><text x="1553.6" y="837">Ourense</text><text x="1658.5" y="821.6">León</text><text x="1743.5" y="821.6">Burgos</text><text x="1706" y="842">Palencia</text><text x="1528.2" y="870.2">Braga</text><text x="1520" y="894.5">Porto</text><text x="1654" y="921">Salamanca</text><text x="1767.8" y="925.4">Guadalajara</text><text x="1528.2" y="950.8">Coimbra</text><text x="1709" y="979.3">Toledo</text><text x="1621.9" y="994.2">Cáceres</text><text x="1643.8" y="1034.7">Mérida</text><text x="1594.7" y="1047.1">Badajoz</text><text x="1827.7" y="1038">Albacete</text><text x="1694.4" y="1085">Córdoba</text><text x="1739.5" y="1092.7">Jaén</text><text x="1940.5" y="866">Lleida</text><text x="1962.5" y="909">Reus</text><text x="1909.8" y="951.7">Castelló</text><text x="1909.8" y="963.7">de la Plana</text><text x="1890.3" y="1048.9">Alacant /</text><text x="1890.3" y="1061">Alicante</text><text x="1733.1" y="1011">Ciudad</text><text x="1733.1" y="1023">Real</text><text x="1669.6" y="871.3">Valladolid</text></g><g font-size="12.6" fill="#333" paint-order="stroke" stroke="#fff" stroke-opacity="0.75" stroke-width="2.4" stroke-linejoin="round" text-anchor="middle" dominant-baseline="central"><text x="1777.6" y="83.5">Liverpool</text><text x="1825" y="135.2">Birmingham</text><text x="1767.3" y="208.6">Cardiff</text><text x="1906" y="206">London</text><text x="1861.6" y="455.8">Rennes</text><text x="1853.4" y="672.5">Bordeaux</text><text x="1947" y="751">Toulouse</text><text x="1790.4" y="789">Vitoria-Gasteiz</text><text x="1743.6" y="957">Madrid</text><text x="1496" y="1036.9">Lisboa</text><text x="1871.6" y="862.3">Zaragoza</text><text x="2004.6" y="897">Barcelona</text><text x="2020" y="395">Paris</text></g><g font-size="10.3" font-style="italic" fill="#7f6b95" paint-order="stroke" stroke="#fff" stroke-opacity="0.75" stroke-width="2.4" stroke-linejoin="round" text-anchor="middle" dominant-baseline="central"><text x="1737.6" y="141.4">Cymru /</text><text x="1737.6" y="152.2">Wales</text><text x="1891.3" y="112.2">England</text><text x="1913.5" y="385.6">Normandie</text><text x="1789.8" y="452">Bretagne</text><text x="1991" y="480.8">Centre-Val</text><text x="1991" y="492.7">de Loire</text><text x="1860.5" y="496.7">Pays de</text><text x="1860.5" y="508">la Loire</text><text x="1931" y="654.8">Nouvelle-</text><text x="1931" y="666.3">Aquitaine</text><text x="2010" y="745">Occitanie</text><text x="1645.3" y="765.7">Asturias /</text><text x="1645.3" y="777.4">Asturies</text><text x="1553.2" y="800.6">Galicia</text><text x="1828.6" y="806.6">Navarra /</text><text x="1828.6" y="818.7">Nafarroa</text><text x="1724.8" y="864">Castilla</text><text x="1724.8" y="876.1">y León</text><text x="1874.6" y="887">Aragón</text><text x="1986" y="868.3">Catalunya</text><text x="1640" y="1017.1">Extremadura</text><text x="1876.7" y="1004.7">Comunitat</text><text x="1876.7" y="1016.7">Valenciana</text><text x="1836" y="1077.5">Región de</text><text x="1836" y="1089.5">Murcia</text></g><g font-size="13.5" fill="#7f6b95" letter-spacing="0.25" paint-order="stroke" stroke="#fff" stroke-opacity="0.75" stroke-width="2.4" stroke-linejoin="round" text-anchor="middle" dominant-baseline="central"><text x="1997.4" y="543">France</text><text x="1762.7" y="976.6">España</text><text x="1521.8" y="1004.7">Portugal</text><text x="1984.2" y="817.2">Andorra</text><text x="1796.4" y="354.7">Guernsey</text><text x="1811.9" y="384.7">Jersey</text></g>
<rect x="1168.5" y="351.5" width="460" height="510.5" fill="#ff7800" fill-opacity="0.2" stroke="#f2873a" stroke-width="2"/>
</g></defs></svg>

<!-- LEFT WINDOW -->
<div class="win" style="left:0;width:960px">
  <svg class="abs" style="left:0;top:85px" width="921" height="1002" viewBox="917 101 921 1002"><use href="#map"/></svg>
<div class="tabs"></div><div class="tool"></div>
<div class="tl" style="left:-2px;background:#dddcdf;box-shadow:inset 0 0 0 0.5px #cfcfd2"></div>
<div class="tl" style="left:18px;background:#dddcdf;box-shadow:inset 0 0 0 0.5px #cfcfd2"></div>
<div class="tl" style="left:38px;background:#dddcdf;box-shadow:inset 0 0 0 0.5px #cfcfd2"></div>
<svg class="ic" style="left:102.0px;top:13.0px" width="18" height="18" viewBox="0 0 18 18"><defs><radialGradient id="ffg111" cx="0.6" cy="0.25" r="0.8"><stop offset="0" stop-color="#fff44f"/><stop offset="0.35" stop-color="#ff980e"/><stop offset="0.75" stop-color="#ff3750"/><stop offset="1" stop-color="#f5156c"/></radialGradient><radialGradient id="ffp111" cx="0.4" cy="0.4" r="0.6"><stop offset="0" stop-color="#7542e5"/><stop offset="1" stop-color="#b833e1"/></radialGradient></defs><circle cx="9" cy="9.6" r="7.4" fill="url(#ffg111)"/><path d="M11.5,1.5C13,3 14,4.5 14.2,6.5L10,5Z" fill="#ffbd4f"/><circle cx="8.3" cy="9" r="3.4" fill="url(#ffp111)"/></svg>
<div class="abs" style="left:133px;top:0;width:1px;height:44px;background:#d4d3d8"></div>
<div class="tab" style="left:138px;width:221px"><div class="tabt">linestrings.com/bbox/#343.68,41.8,353.78,49.62</div></div>
<svg class="ic" style="left:337.0px;top:16.3px;color:#15141a" width="12" height="12" viewBox="0 0 16 16" fill="none" stroke="currentColor" stroke-width="1.3" stroke-linecap="round"><path d="M3,3L13,13M13,3L3,13" /></svg>
<svg class="ic" style="left:373.5px;top:15.5px;color:#5b5b66" width="14" height="14" viewBox="0 0 16 16" fill="none" stroke="currentColor" stroke-width="1.25" stroke-linecap="round"><path d="M8,1.5V14.5M1.5,8H14.5" /></svg>
<svg class="ic" style="left:909.7px;top:13.5px;color:#9a9aa2" width="16" height="16" viewBox="0 0 16 16" fill="none" stroke="currentColor" stroke-width="1.3" stroke-linecap="round"><path d="M2.5,5.5L8,11L13.5,5.5" /></svg>
<svg class="ic" style="left:0.7px;top:56.3px;color:#a0a0a8" width="16" height="16" viewBox="0 0 16 16" fill="none" stroke="currentColor" stroke-width="1.4" stroke-linecap="round"><path d="M15,8H1.5M7.5,2L1.5,8L7.5,14" /></svg>
<svg class="ic" style="left:36.5px;top:56.3px;color:#a0a0a8" width="16" height="16" viewBox="0 0 16 16" fill="none" stroke="currentColor" stroke-width="1.4" stroke-linecap="round"><path d="M1,8H14.5M8.5,2L14.5,8L8.5,14" /></svg>
<svg class="ic" style="left:72.8px;top:56.3px;color:#a0a0a8" width="16" height="16" viewBox="0 0 16 16" fill="none" stroke="currentColor" stroke-width="1.4" stroke-linecap="round"><path d="M14,8.5A6,6 0 1 1 11.5,3.3" /><path d="M14.2,1.2V5.8H9.6Z" fill="currentColor" stroke="none"/></svg>
<svg class="ic" style="left:108.2px;top:56.3px;color:#a0a0a8" width="16" height="16" viewBox="0 0 16 16" fill="none" stroke="currentColor" stroke-width="1.4" stroke-linecap="round"><path d="M1.5,7.5L8,1L14.5,7.5M2.8,6.2V14.3H13.2V6.2M6.5,14.3V10.5A1.5,1.5 0 0 1 9.5,10.5V14.3" /></svg>
<div class="url" style="left:184px;width:524px"></div>
<svg class="ic" style="left:192.0px;top:56.3px;color:#5b5b66" width="16" height="16" viewBox="0 0 16 16" fill="none" stroke="currentColor" stroke-width="1.3" stroke-linecap="round"><path d="M8,1.2L13.8,3.2V7.8C13.8,11.5 11.2,14 8,15.3C4.8,14 2.2,11.5 2.2,7.8V3.2Z" /></svg>
<svg class="ic" style="left:220.0px;top:56.3px;color:#5b5b66" width="16" height="16" viewBox="0 0 16 16" fill="none" stroke="currentColor" stroke-width="1.3" stroke-linecap="round"><rect x="2.8" y="7" width="10.4" height="8" rx="1.6"/><path d="M5,7V4.8A3,3 0 0 1 11,4.8V7"/></svg>
<div class="urlt" style="left:246px;top:55px">https://<b>linestrings.com</b>/bbox/#343.68,41.8,353.78,49.62</div>
<svg class="ic" style="left:683.5px;top:55.8px;color:#5b5b66" width="17" height="17" viewBox="0 0 16 16" fill="none" stroke="currentColor" stroke-width="1.3" stroke-linecap="round"><path d="M8,1.2L10.1,5.6L14.8,6.2L11.3,9.4L12.2,14.2L8,11.9L3.8,14.2L4.7,9.4L1.2,6.2L5.9,5.6Z" stroke-linejoin="round"/></svg>
<svg class="ic" style="left:766.8px;top:56.3px;color:#5b5b66" width="16" height="16" viewBox="0 0 16 16" fill="none" stroke="currentColor" stroke-width="1.4" stroke-linecap="round"><path d="M2.5,2.5H13.5A1,1 0 0 1 14.5,3.5V7.5A6.5,6.5 0 0 1 1.5,7.5V3.5A1,1 0 0 1 2.5,2.5Z" /><path d="M5,6.5L8,9.5L11,6.5"/></svg>
<svg class="ic" style="left:802.2px;top:56.3px;color:#3d86f0" width="16" height="16" viewBox="0 0 16 16" fill="none" stroke="currentColor" stroke-width="1.4" stroke-linecap="round"><path d="M8,1V11M4,7L8,11L12,7M1.8,11.5V13.3A1,1 0 0 0 2.8,14.3H13.2A1,1 0 0 0 14.2,13.3V11.5" stroke-linejoin="round"/></svg>
<svg class="ic" style="left:839.3px;top:56.3px;color:#5b5b66" width="16" height="16" viewBox="0 0 16 16" fill="none" stroke="currentColor" stroke-width="1.4" stroke-linecap="round"><path d="M2,1.5V14.5M5,1.5V14.5M8,1.5V14.5M11,1.5L14.5,14.5" stroke-width="1.2"/></svg>
<svg class="ic" style="left:874.6px;top:56.3px;color:#8a8a92" width="16" height="16" viewBox="0 0 16 16" fill="none" stroke="currentColor" stroke-width="1.4" stroke-linecap="round"><circle cx="8" cy="7" r="5.6" fill="currentColor" stroke="none"/><path d="M11.8,10.8L15,14" stroke-width="2.2"/><path d="M0.5,7.5H3M4,8.5L6.5,7L8.5,8.5L12,5.5" stroke="#f9f9fb" stroke-width="1.2"/></svg>
<svg class="ic" style="left:909.7px;top:56.3px;color:#8f8f98" width="16" height="16" viewBox="0 0 16 16" fill="none" stroke="currentColor" stroke-width="1.4" stroke-linecap="round"><path d="M2.5,6.8H6.8V4.2A1.9,1.9 0 0 1 10.6,4.2V6.8H13.5V14.3H2.5V11.6H4.2A1.9,1.9 0 0 0 4.2,7.8H2.5Z" stroke-linejoin="round"/></svg>
<svg class="ic" style="left:945.0px;top:56.3px;color:#5b5b66" width="16" height="16" viewBox="0 0 16 16" fill="none" stroke="currentColor" stroke-width="1.4" stroke-linecap="round"><path d="M1.5,3.5H14.5M1.5,8H14.5M1.5,12.5H14.5" /></svg>
  <div class="zoom" style="left:-5px;top:95px"><div>+</div><div>&minus;</div></div>
  <div class="form" style="left:-4.5px">BBOX (Left (LON) ,Bottom (LAT), Right (LON), Top (LAT), comma separated, with or without decimal point):</div>
  <div class="inp" style="left:-5px;width:191px">343.68,41.8,353.78,49.62</div>
  <div class="btn" style="left:188px;width:95px">Display BBOX</div>
  <div class="btn" style="left:285px;width:60px">Remove</div>
  <div class="attr" style="left:739px"><a>Leaflet</a> | Data by <a>OpenStreetMap</a>, under <a>ODbL</a></div>
</div>

<!-- RIGHT WINDOW -->
<div class="win" style="left:921px;width:1102px;border-top-left-radius:10px;box-shadow:-8px 0 26px rgba(0,0,0,.26),-1px 0 0 rgba(0,0,0,.12)">
  <svg class="abs" style="left:0;top:85px" width="1102" height="1002" viewBox="921 85 1102 1002"><use href="#map"/></svg>
<div class="tabs"></div><div class="tool"></div>
<div class="tl" style="left:13px;background:#ff5f57;box-shadow:inset 0 0 0 0.5px #e0443e"></div>
<div class="tl" style="left:33px;background:#febc2e;box-shadow:inset 0 0 0 0.5px #dea123"></div>
<div class="tl" style="left:53px;background:#28c840;box-shadow:inset 0 0 0 0.5px #1aab29"></div>
<svg class="ic" style="left:117.0px;top:13.0px" width="18" height="18" viewBox="0 0 18 18"><defs><radialGradient id="ffg1047" cx="0.6" cy="0.25" r="0.8"><stop offset="0" stop-color="#fff44f"/><stop offset="0.35" stop-color="#ff980e"/><stop offset="0.75" stop-color="#ff3750"/><stop offset="1" stop-color="#f5156c"/></radialGradient><radialGradient id="ffp1047" cx="0.4" cy="0.4" r="0.6"><stop offset="0" stop-color="#7542e5"/><stop offset="1" stop-color="#b833e1"/></radialGradient></defs><circle cx="9" cy="9.6" r="7.4" fill="url(#ffg1047)"/><path d="M11.5,1.5C13,3 14,4.5 14.2,6.5L10,5Z" fill="#ffbd4f"/><circle cx="8.3" cy="9" r="3.4" fill="url(#ffp1047)"/></svg>
<div class="abs" style="left:148.29999999999995px;top:0;width:1px;height:44px;background:#d4d3d8"></div>
<div class="tab" style="left:153px;width:221px"><div class="tabt">linestrings.com/bbox/#-16.320007,41.8,-6.220001,49.62</div></div>
<svg class="ic" style="left:352.0px;top:16.3px;color:#15141a" width="12" height="12" viewBox="0 0 16 16" fill="none" stroke="currentColor" stroke-width="1.3" stroke-linecap="round"><path d="M3,3L13,13M13,3L3,13" /></svg>
<svg class="ic" style="left:388.5px;top:15.5px;color:#5b5b66" width="14" height="14" viewBox="0 0 16 16" fill="none" stroke="currentColor" stroke-width="1.25" stroke-linecap="round"><path d="M8,1.5V14.5M1.5,8H14.5" /></svg>
<svg class="ic" style="left:1048.8px;top:13.5px;color:#5b5b66" width="16" height="16" viewBox="0 0 16 16" fill="none" stroke="currentColor" stroke-width="1.3" stroke-linecap="round"><path d="M2.5,5.5L8,11L13.5,5.5" /></svg>
<svg class="ic" style="left:15.5px;top:56.3px;color:#5b5b66" width="16" height="16" viewBox="0 0 16 16" fill="none" stroke="currentColor" stroke-width="1.4" stroke-linecap="round"><path d="M15,8H1.5M7.5,2L1.5,8L7.5,14" /></svg>
<svg class="ic" style="left:52.0px;top:56.3px;color:#b8b8bf" width="16" height="16" viewBox="0 0 16 16" fill="none" stroke="currentColor" stroke-width="1.4" stroke-linecap="round"><path d="M1,8H14.5M8.5,2L14.5,8L8.5,14" /></svg>
<svg class="ic" style="left:87.9px;top:56.3px;color:#5b5b66" width="16" height="16" viewBox="0 0 16 16" fill="none" stroke="currentColor" stroke-width="1.4" stroke-linecap="round"><path d="M14,8.5A6,6 0 1 1 11.5,3.3" /><path d="M14.2,1.2V5.8H9.6Z" fill="currentColor" stroke="none"/></svg>
<svg class="ic" style="left:123.5px;top:56.3px;color:#5b5b66" width="16" height="16" viewBox="0 0 16 16" fill="none" stroke="currentColor" stroke-width="1.4" stroke-linecap="round"><path d="M1.5,7.5L8,1L14.5,7.5M2.8,6.2V14.3H13.2V6.2M6.5,14.3V10.5A1.5,1.5 0 0 1 9.5,10.5V14.3" /></svg>
<div class="url" style="left:216.29999999999995px;width:611.7px"></div>
<svg class="ic" style="left:223.6px;top:56.3px;color:#5b5b66" width="16" height="16" viewBox="0 0 16 16" fill="none" stroke="currentColor" stroke-width="1.3" stroke-linecap="round"><path d="M8,1.2L13.8,3.2V7.8C13.8,11.5 11.2,14 8,15.3C4.8,14 2.2,11.5 2.2,7.8V3.2Z" /></svg>
<svg class="ic" style="left:252.0px;top:56.3px;color:#5b5b66" width="16" height="16" viewBox="0 0 16 16" fill="none" stroke="currentColor" stroke-width="1.3" stroke-linecap="round"><rect x="2.8" y="7" width="10.4" height="8" rx="1.6"/><path d="M5,7V4.8A3,3 0 0 1 11,4.8V7"/></svg>
<div class="urlt" style="left:278.5999999999999px;top:55px">https://<b>linestrings.com</b>/bbox/#-16.320007,41.8,-6.220001,49.62</div>
<svg class="ic" style="left:804.1px;top:55.8px;color:#5b5b66" width="17" height="17" viewBox="0 0 16 16" fill="none" stroke="currentColor" stroke-width="1.3" stroke-linecap="round"><path d="M8,1.2L10.1,5.6L14.8,6.2L11.3,9.4L12.2,14.2L8,11.9L3.8,14.2L4.7,9.4L1.2,6.2L5.9,5.6Z" stroke-linejoin="round"/></svg>
<svg class="ic" style="left:905.0px;top:56.3px;color:#5b5b66" width="16" height="16" viewBox="0 0 16 16" fill="none" stroke="currentColor" stroke-width="1.4" stroke-linecap="round"><path d="M2.5,2.5H13.5A1,1 0 0 1 14.5,3.5V7.5A6.5,6.5 0 0 1 1.5,7.5V3.5A1,1 0 0 1 2.5,2.5Z" /><path d="M5,6.5L8,9.5L11,6.5"/></svg>
<svg class="ic" style="left:940.5px;top:56.3px;color:#0061e0" width="16" height="16" viewBox="0 0 16 16" fill="none" stroke="currentColor" stroke-width="1.4" stroke-linecap="round"><path d="M8,1V11M4,7L8,11L12,7M1.8,11.5V13.3A1,1 0 0 0 2.8,14.3H13.2A1,1 0 0 0 14.2,13.3V11.5" stroke-linejoin="round"/></svg>
<svg class="ic" style="left:977.0px;top:56.3px;color:#5b5b66" width="16" height="16" viewBox="0 0 16 16" fill="none" stroke="currentColor" stroke-width="1.4" stroke-linecap="round"><path d="M2,1.5V14.5M5,1.5V14.5M8,1.5V14.5M11,1.5L14.5,14.5" stroke-width="1.2"/></svg>
<svg class="ic" style="left:1013.0px;top:56.3px;color:#15141a" width="16" height="16" viewBox="0 0 16 16" fill="none" stroke="currentColor" stroke-width="1.4" stroke-linecap="round"><circle cx="8" cy="7" r="5.6" fill="currentColor" stroke="none"/><path d="M11.8,10.8L15,14" stroke-width="2.2"/><path d="M0.5,7.5H3M4,8.5L6.5,7L8.5,8.5L12,5.5" stroke="#f9f9fb" stroke-width="1.2"/></svg>
<svg class="ic" style="left:1049.0px;top:56.3px;color:#5b5b66" width="16" height="16" viewBox="0 0 16 16" fill="none" stroke="currentColor" stroke-width="1.4" stroke-linecap="round"><path d="M2.5,6.8H6.8V4.2A1.9,1.9 0 0 1 10.6,4.2V6.8H13.5V14.3H2.5V11.6H4.2A1.9,1.9 0 0 0 4.2,7.8H2.5Z" stroke-linejoin="round"/></svg>
<svg class="ic" style="left:1085.0px;top:56.3px;color:#5b5b66" width="16" height="16" viewBox="0 0 16 16" fill="none" stroke="currentColor" stroke-width="1.4" stroke-linecap="round"><path d="M1.5,3.5H14.5M1.5,8H14.5M1.5,12.5H14.5" /></svg>
  <div class="zoom" style="left:10px;top:95px"><div>+</div><div>&minus;</div></div>
  <div class="form" style="left:10.6px">BBOX (Left (LON) ,Bottom (LAT), Right (LON), Top (LAT), comma separated, with or without decimal point):</div>
  <div class="inp" style="left:10.6px;width:191px">-16.320007,41.8,-6.220001,49.62</div>
  <div class="btn" style="left:203.2px;width:95px">Display BBOX</div>
  <div class="btn" style="left:300px;width:60px">Remove</div>
  <div class="attr" style="left:878px"><a>Leaflet</a> | Data by <a>OpenStreetMap</a>, under <a>ODbL</a></div>
</div>
</body></html>
